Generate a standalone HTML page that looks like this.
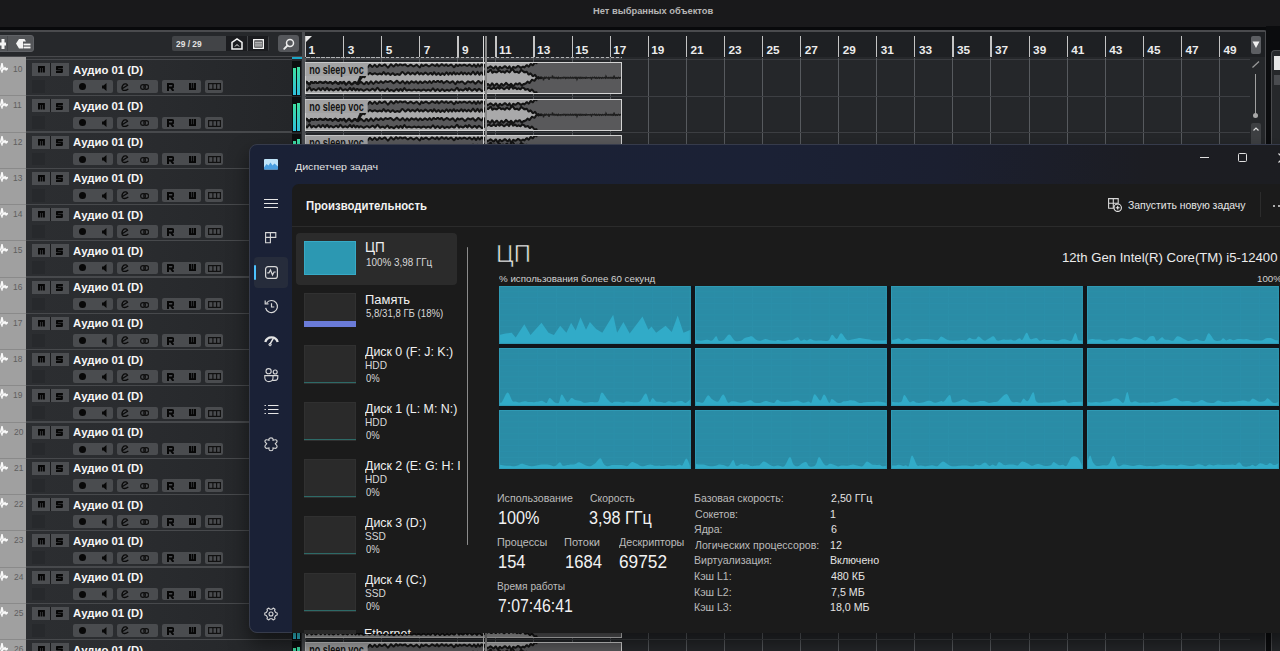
<!DOCTYPE html><html><head><meta charset="utf-8"><style>
*{margin:0;padding:0;box-sizing:border-box}
html,body{width:1280px;height:651px;overflow:hidden;background:#25272a;font-family:"Liberation Sans",sans-serif}
.a{position:absolute}
.t{position:absolute;line-height:1;white-space:nowrap;transform-origin:0 0}
</style></head><body>
<div class="a" style="left:0;top:0;width:1280px;height:26.6px;background:#19191b"></div>
<div class="t" style="left:593.20px;top:6.00px;font-size:9.84px;font-weight:bold;color:#b6b6b6;transform:scaleX(0.9492);">Нет выбранных объектов</div>
<div class="a" style="left:0;top:26.6px;width:1280px;height:3.6px;background:#08090b"></div>
<div class="a" style="left:0;top:30.2px;width:1266px;height:1.8px;background:#4a4b4e;border-radius:0 4px 0 0"></div>
<div class="a" style="left:0;top:32px;width:302px;height:23.5px;background:#26282b"></div>
<div class="a" style="left:0;top:55.5px;width:302px;height:1.2px;background:#48494c"></div>
<div class="a" style="left:-4px;top:35.1px;width:38px;height:16.6px;background:#545659;border-radius:3px;border:1px solid #606266"></div>
<div class="a" style="left:7px;top:36px;width:1px;height:15px;background:#46484b"></div>
<svg class="a" style="left:0;top:39px" width="7" height="10"><path d="M0 3.5 H6 V6.5 H0Z M1.5 0 H4.5 V10 H1.5Z" fill="#f4f4f4"/></svg>
<svg class="a" style="left:16px;top:38.5px" width="15" height="10"><path d="M0 4.5 L3 0 H8.5 L10 2.5 H7 V9.5 H3 Z" fill="#f4f4f4"/><rect x="7.5" y="4.6" width="7" height="1.8" fill="#f4f4f4"/><rect x="7.5" y="7.6" width="7" height="1.8" fill="#f4f4f4"/></svg>
<div class="a" style="left:172px;top:35.6px;width:96.5px;height:15.6px;background:#424447;border-radius:2px"></div>
<div class="t" style="left:175.80px;top:39.00px;font-size:9.56px;font-weight:bold;color:#e2e2e2;transform:scaleX(0.8793);">29 / 29</div>
<div class="a" style="left:226px;top:36px;width:21px;height:14.8px;background:#1b1c1f"></div>
<div class="a" style="left:248px;top:36px;width:20px;height:14.8px;background:#1b1c1f"></div>
<svg class="a" style="left:230.5px;top:37.5px" width="12" height="12"><path d="M1 11 V4.5 L6 1 L11 4.5 V11 Z" fill="none" stroke="#f4f4f4" stroke-width="1.5"/><path d="M4 8.5 L6 6.5 L8 8.5" fill="none" stroke="#f4f4f4" stroke-width="1"/></svg>
<svg class="a" style="left:252.5px;top:38.5px" width="11" height="10"><rect x="0.7" y="0.7" width="9.6" height="8.6" fill="none" stroke="#f4f4f4" stroke-width="1.4"/><rect x="2" y="2.6" width="7" height="1.1" fill="#f4f4f4"/><rect x="2" y="4.5" width="7" height="1.1" fill="#f4f4f4"/><rect x="2" y="6.4" width="7" height="1.1" fill="#f4f4f4"/></svg>
<div class="a" style="left:278px;top:35.2px;width:21px;height:16.5px;background:#55575b;border-radius:3px"></div>
<svg class="a" style="left:282.5px;top:37.5px" width="12" height="12"><circle cx="7" cy="5" r="3.5" fill="none" stroke="#ececec" stroke-width="1.5"/><path d="M4.5 7.5 L1.2 10.8" stroke="#ececec" stroke-width="1.8" stroke-linecap="round"/></svg>
<div class="a" style="left:304px;top:32px;width:946px;height:24.6px;background:#1e2023"></div>
<div class="a" style="left:302px;top:32px;width:2.6px;height:620px;background:#4b4d51"></div>
<svg class="a" style="left:305px;top:35.5px" width="8" height="7"><path d="M0 0 H7 L0 7 Z" fill="#e8e8e8"/></svg>
<div class="a" style="left:304.6px;top:56.6px;width:946px;height:2.6px;background:#26282b"></div>
<div class="a" style="left:304.6px;top:59.1px;width:946px;height:0.8px;background:#3a3c40"></div>
<div class="a" style="left:305.5px;top:56.8px;width:316.5px;height:2.4px;background:#3c3e41"></div>
<div class="a" style="left:306px;top:57px;width:316px;height:1.2px;background:repeating-linear-gradient(90deg,#b0b2b5 0 3.5px,transparent 3.5px 5px)"></div>
<div class="a" style="left:305.00px;top:58px;width:1px;height:594px;background:#575a5e"></div>
<div class="a" style="left:305.00px;top:35.5px;width:1.2px;height:21px;background:#c4c4c4"></div>
<div class="t" style="left:308.60px;top:45.00px;font-size:11.81px;font-weight:bold;color:#ececec;">1</div>
<div class="a" style="left:343.08px;top:58px;width:1px;height:594px;background:#575a5e"></div>
<div class="a" style="left:343.08px;top:35.5px;width:1.2px;height:21px;background:#c4c4c4"></div>
<div class="t" style="left:347.68px;top:45.00px;font-size:11.81px;font-weight:bold;color:#ececec;">3</div>
<div class="a" style="left:381.16px;top:58px;width:1px;height:594px;background:#575a5e"></div>
<div class="a" style="left:381.16px;top:35.5px;width:1.2px;height:21px;background:#c4c4c4"></div>
<div class="t" style="left:385.76px;top:45.00px;font-size:11.81px;font-weight:bold;color:#ececec;">5</div>
<div class="a" style="left:419.24px;top:58px;width:1px;height:594px;background:#575a5e"></div>
<div class="a" style="left:419.24px;top:35.5px;width:1.2px;height:21px;background:#c4c4c4"></div>
<div class="t" style="left:423.84px;top:45.00px;font-size:11.81px;font-weight:bold;color:#ececec;">7</div>
<div class="a" style="left:457.32px;top:58px;width:1px;height:594px;background:#575a5e"></div>
<div class="a" style="left:457.32px;top:35.5px;width:1.2px;height:21px;background:#c4c4c4"></div>
<div class="t" style="left:461.92px;top:45.00px;font-size:11.81px;font-weight:bold;color:#ececec;">9</div>
<div class="a" style="left:495.40px;top:58px;width:1px;height:594px;background:#575a5e"></div>
<div class="a" style="left:495.40px;top:35.5px;width:1.2px;height:21px;background:#c4c4c4"></div>
<div class="t" style="left:499.00px;top:45.00px;font-size:11.81px;font-weight:bold;color:#ececec;">11</div>
<div class="a" style="left:533.48px;top:58px;width:1px;height:594px;background:#575a5e"></div>
<div class="a" style="left:533.48px;top:35.5px;width:1.2px;height:21px;background:#c4c4c4"></div>
<div class="t" style="left:537.08px;top:45.00px;font-size:11.81px;font-weight:bold;color:#ececec;">13</div>
<div class="a" style="left:571.56px;top:58px;width:1px;height:594px;background:#575a5e"></div>
<div class="a" style="left:571.56px;top:35.5px;width:1.2px;height:21px;background:#c4c4c4"></div>
<div class="t" style="left:575.16px;top:45.00px;font-size:11.81px;font-weight:bold;color:#ececec;">15</div>
<div class="a" style="left:609.64px;top:58px;width:1px;height:594px;background:#575a5e"></div>
<div class="a" style="left:609.64px;top:35.5px;width:1.2px;height:21px;background:#c4c4c4"></div>
<div class="t" style="left:613.24px;top:45.00px;font-size:11.81px;font-weight:bold;color:#ececec;">17</div>
<div class="a" style="left:647.72px;top:58px;width:1px;height:594px;background:#575a5e"></div>
<div class="a" style="left:647.72px;top:35.5px;width:1.2px;height:21px;background:#c4c4c4"></div>
<div class="t" style="left:651.32px;top:45.00px;font-size:11.81px;font-weight:bold;color:#ececec;">19</div>
<div class="a" style="left:685.80px;top:58px;width:1px;height:594px;background:#575a5e"></div>
<div class="a" style="left:685.80px;top:35.5px;width:1.2px;height:21px;background:#c4c4c4"></div>
<div class="t" style="left:690.40px;top:45.00px;font-size:11.81px;font-weight:bold;color:#ececec;">21</div>
<div class="a" style="left:723.88px;top:58px;width:1px;height:594px;background:#575a5e"></div>
<div class="a" style="left:723.88px;top:35.5px;width:1.2px;height:21px;background:#c4c4c4"></div>
<div class="t" style="left:728.48px;top:45.00px;font-size:11.81px;font-weight:bold;color:#ececec;">23</div>
<div class="a" style="left:761.96px;top:58px;width:1px;height:594px;background:#575a5e"></div>
<div class="a" style="left:761.96px;top:35.5px;width:1.2px;height:21px;background:#c4c4c4"></div>
<div class="t" style="left:766.56px;top:45.00px;font-size:11.81px;font-weight:bold;color:#ececec;">25</div>
<div class="a" style="left:800.04px;top:58px;width:1px;height:594px;background:#575a5e"></div>
<div class="a" style="left:800.04px;top:35.5px;width:1.2px;height:21px;background:#c4c4c4"></div>
<div class="t" style="left:804.64px;top:45.00px;font-size:11.81px;font-weight:bold;color:#ececec;">27</div>
<div class="a" style="left:838.12px;top:58px;width:1px;height:594px;background:#575a5e"></div>
<div class="a" style="left:838.12px;top:35.5px;width:1.2px;height:21px;background:#c4c4c4"></div>
<div class="t" style="left:842.72px;top:45.00px;font-size:11.81px;font-weight:bold;color:#ececec;">29</div>
<div class="a" style="left:876.20px;top:58px;width:1px;height:594px;background:#575a5e"></div>
<div class="a" style="left:876.20px;top:35.5px;width:1.2px;height:21px;background:#c4c4c4"></div>
<div class="t" style="left:880.80px;top:45.00px;font-size:11.81px;font-weight:bold;color:#ececec;">31</div>
<div class="a" style="left:914.28px;top:58px;width:1px;height:594px;background:#575a5e"></div>
<div class="a" style="left:914.28px;top:35.5px;width:1.2px;height:21px;background:#c4c4c4"></div>
<div class="t" style="left:918.88px;top:45.00px;font-size:11.81px;font-weight:bold;color:#ececec;">33</div>
<div class="a" style="left:952.36px;top:58px;width:1px;height:594px;background:#575a5e"></div>
<div class="a" style="left:952.36px;top:35.5px;width:1.2px;height:21px;background:#c4c4c4"></div>
<div class="t" style="left:956.96px;top:45.00px;font-size:11.81px;font-weight:bold;color:#ececec;">35</div>
<div class="a" style="left:990.44px;top:58px;width:1px;height:594px;background:#575a5e"></div>
<div class="a" style="left:990.44px;top:35.5px;width:1.2px;height:21px;background:#c4c4c4"></div>
<div class="t" style="left:995.04px;top:45.00px;font-size:11.81px;font-weight:bold;color:#ececec;">37</div>
<div class="a" style="left:1028.52px;top:58px;width:1px;height:594px;background:#575a5e"></div>
<div class="a" style="left:1028.52px;top:35.5px;width:1.2px;height:21px;background:#c4c4c4"></div>
<div class="t" style="left:1033.12px;top:45.00px;font-size:11.81px;font-weight:bold;color:#ececec;">39</div>
<div class="a" style="left:1066.60px;top:58px;width:1px;height:594px;background:#575a5e"></div>
<div class="a" style="left:1066.60px;top:35.5px;width:1.2px;height:21px;background:#c4c4c4"></div>
<div class="t" style="left:1071.20px;top:45.00px;font-size:11.81px;font-weight:bold;color:#ececec;">41</div>
<div class="a" style="left:1104.68px;top:58px;width:1px;height:594px;background:#575a5e"></div>
<div class="a" style="left:1104.68px;top:35.5px;width:1.2px;height:21px;background:#c4c4c4"></div>
<div class="t" style="left:1109.28px;top:45.00px;font-size:11.81px;font-weight:bold;color:#ececec;">43</div>
<div class="a" style="left:1142.76px;top:58px;width:1px;height:594px;background:#575a5e"></div>
<div class="a" style="left:1142.76px;top:35.5px;width:1.2px;height:21px;background:#c4c4c4"></div>
<div class="t" style="left:1147.36px;top:45.00px;font-size:11.81px;font-weight:bold;color:#ececec;">45</div>
<div class="a" style="left:1180.84px;top:58px;width:1px;height:594px;background:#575a5e"></div>
<div class="a" style="left:1180.84px;top:35.5px;width:1.2px;height:21px;background:#c4c4c4"></div>
<div class="t" style="left:1185.44px;top:45.00px;font-size:11.81px;font-weight:bold;color:#ececec;">47</div>
<div class="a" style="left:1218.92px;top:58px;width:1px;height:594px;background:#575a5e"></div>
<div class="a" style="left:1218.92px;top:35.5px;width:1.2px;height:21px;background:#c4c4c4"></div>
<div class="t" style="left:1223.52px;top:45.00px;font-size:11.81px;font-weight:bold;color:#ececec;">49</div>
<svg width="0" height="0" style="position:absolute"><defs><g id="wv"><rect x="0" y="0" width="317" height="32" fill="#59595b"/><path d="M0,-1.0 L0.5,-1.0 L1,-1.0 L1.5,-1.0 L2,-1.0 L2.5,-1.0 L3,-1.0 L3.5,-1.0 L4,-1.0 L4.5,-1.0 L5,-1.0 L5.5,-1.0 L6,-1.0 L6.5,-1.0 L7,-1.0 L7.5,-1.0 L8,-1.0 L8.5,-1.0 L9,-1.0 L9.5,-1.0 L10,-1.0 L10.5,-1.0 L11,-1.0 L11.5,-1.0 L12,-1.0 L12.5,-1.0 L13,-1.0 L13.5,-1.0 L14,-1.0 L14.5,-1.0 L15,-1.0 L15.5,-1.0 L16,-1.0 L16.5,-1.0 L17,-1.0 L17.5,-1.0 L18,-1.0 L18.5,-1.0 L19,-1.0 L19.5,-1.0 L20,-1.0 L20.5,-1.0 L21,-1.0 L21.5,-1.0 L22,-1.0 L22.5,-1.0 L23,-1.0 L23.5,-1.0 L24,-1.0 L24.5,-1.0 L25,-1.0 L25.5,-1.0 L26,-1.0 L26.5,-1.0 L27,-1.0 L27.5,-1.0 L28,-1.0 L28.5,-1.0 L29,-1.0 L29.5,-1.0 L30,-1.0 L30.5,-1.0 L31,-1.0 L31.5,-1.0 L32,-1.0 L32.5,-1.0 L33,-1.0 L33.5,-1.0 L34,-1.0 L34.5,-1.0 L35,-1.0 L35.5,-1.0 L36,-1.0 L36.5,-1.0 L37,-1.0 L37.5,-1.0 L38,-1.0 L38.5,-1.0 L39,-1.0 L39.5,-1.0 L40,-1.0 L40.5,-1.0 L41,-1.0 L41.5,-1.0 L42,-1.0 L42.5,-1.0 L43,-1.0 L43.5,-1.0 L44,-1.0 L44.5,-1.0 L45,-1.0 L45.5,-1.0 L46,-1.0 L46.5,-1.0 L47,-1.0 L47.5,-1.0 L48,-1.0 L48.5,-1.0 L49,-1.0 L49.5,-1.0 L50,-1.0 L50.5,-1.0 L51,-1.0 L51.5,-1.0 L52,-1.0 L52.5,-1.0 L53,-1.0 L53.5,-1.0 L54,-1.0 L54.5,-1.0 L55,-1.0 L55.5,-1.0 L56,-1.0 L56.5,-1.0 L57,-1.0 L57.5,-1.0 L58,-1.0 L58.5,-1.0 L59,-1.0 L59.5,-1.0 L60,-1.0 L60.5,-1.0 L61,-1.0 L61.5,-1.0 L62,-1.0 L62.5,-1.0 L63,-1.0 L63.5,-1.0 L64,-1.0 L64.5,-1.0 L65,-1.0 L65.5,-1.0 L66,-1.0 L66.5,-1.0 L67,-1.0 L67.5,-1.0 L68,-1.0 L68.5,-1.0 L69,-1.0 L69.5,-1.0 L70,-1.0 L70.5,-1.0 L71,-1.0 L71.5,-1.0 L72,-1.0 L72.5,-1.0 L73,-1.0 L73.5,-1.0 L74,-1.0 L74.5,-1.0 L75,-1.0 L75.5,-1.0 L76,-1.0 L76.5,-1.0 L77,-1.0 L77.5,-1.0 L78,-1.0 L78.5,-1.0 L79,-1.0 L79.5,-1.0 L80,-1.0 L80.5,-1.0 L81,-1.0 L81.5,-1.0 L82,-1.0 L82.5,-1.0 L83,-1.0 L83.5,-1.0 L84,-1.0 L84.5,-1.0 L85,-1.0 L85.5,-1.0 L86,-1.0 L86.5,-1.0 L87,-1.0 L87.5,-1.0 L88,-1.0 L88.5,-1.0 L89,-1.0 L89.5,-1.0 L90,-1.0 L90.5,-1.0 L91,-1.0 L91.5,-1.0 L92,-1.0 L92.5,-1.0 L93,-1.0 L93.5,-1.0 L94,-1.0 L94.5,-1.0 L95,-1.0 L95.5,-1.0 L96,-1.0 L96.5,-1.0 L97,-1.0 L97.5,-1.0 L98,-1.0 L98.5,-1.0 L99,-1.0 L99.5,-1.0 L100,-1.0 L100.5,-1.0 L101,-1.0 L101.5,-1.0 L102,-1.0 L102.5,-1.0 L103,-1.0 L103.5,-1.0 L104,-1.0 L104.5,-1.0 L105,-1.0 L105.5,-1.0 L106,-1.0 L106.5,-1.0 L107,-1.0 L107.5,-1.0 L108,-1.0 L108.5,-1.0 L109,-1.0 L109.5,-1.0 L110,-1.0 L110.5,-1.0 L111,-1.0 L111.5,-1.0 L112,-1.0 L112.5,-1.0 L113,-1.0 L113.5,-1.0 L114,-1.0 L114.5,-1.0 L115,-1.0 L115.5,-1.0 L116,-1.0 L116.5,-1.0 L117,-1.0 L117.5,-1.0 L118,-1.0 L118.5,-1.0 L119,-1.0 L119.5,-1.0 L120,-1.0 L120.5,-1.0 L121,-1.0 L121.5,-1.0 L122,-1.0 L122.5,-1.0 L123,-1.0 L123.5,-1.0 L124,-1.0 L124.5,-1.0 L125,-1.0 L125.5,-1.0 L126,-1.0 L126.5,-1.0 L127,-1.0 L127.5,-1.0 L128,-1.0 L128.5,-1.0 L129,-1.0 L129.5,-1.0 L130,-1.0 L130.5,-1.0 L131,-1.0 L131.5,-1.0 L132,-1.0 L132.5,-1.0 L133,-1.0 L133.5,-1.0 L134,-1.0 L134.5,-1.0 L135,-1.0 L135.5,-1.0 L136,-1.0 L136.5,-1.0 L137,-1.0 L137.5,-1.0 L138,-1.0 L138.5,-1.0 L139,-1.0 L139.5,-1.0 L140,-1.0 L140.5,-1.0 L141,-1.0 L141.5,-1.0 L142,-1.0 L142.5,-1.0 L143,-1.0 L143.5,-1.0 L144,-1.0 L144.5,-1.0 L145,-1.0 L145.5,-1.0 L146,-1.0 L146.5,-1.0 L147,-1.0 L147.5,-1.0 L148,-1.0 L148.5,-1.0 L149,-1.0 L149.5,-1.0 L150,-1.0 L150.5,-1.0 L151,-1.0 L151.5,-1.0 L152,-1.0 L152.5,-1.0 L153,-1.0 L153.5,-1.0 L154,-1.0 L154.5,-1.0 L155,-1.0 L155.5,-1.0 L156,-1.0 L156.5,-1.0 L157,-1.0 L157.5,-1.0 L158,-1.0 L158.5,-1.0 L159,-1.0 L159.5,-1.0 L160,-1.0 L160.5,-1.0 L161,-1.0 L161.5,-1.0 L162,-1.0 L162.5,-1.0 L163,-1.0 L163.5,-1.0 L164,-1.0 L164.5,-1.0 L165,-1.0 L165.5,-1.0 L166,-1.0 L166.5,-1.0 L167,-1.0 L167.5,-1.0 L168,-1.0 L168.5,-1.0 L169,-1.0 L169.5,-1.0 L170,-1.0 L170.5,-1.0 L171,-1.0 L171.5,-1.0 L172,-1.0 L172.5,-1.0 L173,-1.0 L173.5,-1.0 L174,-1.0 L174.5,-1.0 L175,-1.0 L175.5,-1.0 L176,-1.0 L176.5,-1.0 L177,-1.0 L177.5,-1.0 L178,-1.0 L178.5,-1.0 L179,-1.0 L179.5,-1.0 L180,-1.0 L180.5,-1.0 L181,-1.0 L181.5,-1.0 L182,-1.0 L182.5,-1.0 L183,-1.0 L183.5,-1.0 L184,-1.0 L184.5,-1.0 L185,-1.0 L185.5,-1.0 L186,-1.0 L186.5,-1.0 L187,-1.0 L187.5,-1.0 L188,-1.0 L188.5,-1.0 L189,-1.0 L189.5,-1.0 L190,-1.0 L190.5,-1.0 L191,-1.0 L191.5,-1.0 L192,-1.0 L192.5,-1.0 L193,-1.0 L193.5,-1.0 L194,-1.0 L194.5,-1.0 L195,-1.0 L195.5,-1.0 L196,-1.0 L196.5,-1.0 L197,-1.0 L197.5,-1.0 L198,-1.0 L198.5,-1.0 L199,-1.0 L199.5,-1.0 L200,-1.0 L200.5,-1.0 L201,-1.0 L201.5,-1.0 L202,-1.0 L202.5,-1.0 L203,-1.0 L203.5,-1.0 L204,-1.0 L204.5,-1.0 L205,-1.0 L205.5,-1.0 L206,-1.0 L206.5,-1.0 L207,-1.0 L207.5,-1.0 L208,-1.0 L208.5,-1.0 L209,-1.0 L209.5,-1.0 L210,-1.0 L210.5,-1.0 L211,-1.0 L211.5,-1.0 L212,-1.0 L212.5,-1.0 L213,-1.0 L213.5,-1.0 L214,-1.0 L214.5,-1.0 L215,-1.0 L215.5,-1.0 L216,-1.0 L216.5,-1.0 L217,-1.0 L217.5,-1.0 L218,-1.0 L218.5,-1.0 L219,-1.0 L219.5,-1.0 L220,-1.0 L220.5,-1.0 L221,-1.0 L221.5,-1.0 L222,-1.0 L222.5,-1.0 L223,-1.0 L223.5,-1.0 L224,-1.0 L224.5,-1.0 L225,-1.0 L225.5,-1.0 L226,-1.0 L226.5,-1.0 L227,-1.0 L227.5,-1.0 L228,-1.0 L228.5,-1.0 L229,-1.0 L229.5,-1.0 L230,-1.0 L230.5,-1.0 L231,-1.0 L231.5,-1.0 L232,-1.0 L232.5,-1.0 L233,-1.0 L233.5,-1.0 L234,-1.0 L234.5,-1.0 L235,-1.0 L235.5,-1.0 L236,-1.0 L236.5,-1.0 L236.5,-2.0 L236,-2.0 L235.5,-2.0 L235,-2.0 L234.5,-2.0 L234,-2.0 L233.5,-2.0 L233,-2.0 L232.5,-2.0 L232,-2.0 L231.5,1.3 L231,1.0 L230.5,0.7 L230,0.3 L229.5,1.0 L229,1.7 L228.5,2.5 L228,3.2 L227.5,3.3 L227,2.8 L226.5,2.4 L226,1.9 L225.5,2.1 L225,2.8 L224.5,3.6 L224,4.3 L223.5,4.6 L223,4.1 L222.5,3.6 L222,3.1 L221.5,3.4 L221,3.8 L220.5,4.3 L220,4.7 L219.5,5.4 L219,5.1 L218.5,4.8 L218,4.5 L217.5,4.8 L217,5.2 L216.5,5.5 L216,5.9 L215.5,5.7 L215,5.3 L214.5,4.9 L214,4.4 L213.5,4.1 L213,3.9 L212.5,4.3 L212,4.7 L211.5,5.1 L211,5.5 L210.5,5.8 L210,5.8 L209.5,5.4 L209,5.1 L208.5,4.7 L208,5.1 L207.5,5.9 L207,6.8 L206.5,7.6 L206,7.3 L205.5,6.3 L205,5.4 L204.5,4.4 L204,5.0 L203.5,5.6 L203,6.2 L202.5,6.4 L202,5.9 L201.5,5.4 L201,4.9 L200.5,4.5 L200,4.2 L199.5,4.2 L199,4.7 L198.5,5.1 L198,5.5 L197.5,5.9 L197,6.3 L196.5,6.1 L196,5.6 L195.5,5.2 L195,4.7 L194.5,5.1 L194,5.9 L193.5,6.7 L193,7.4 L192.5,7.0 L192,6.2 L191.5,5.4 L191,4.6 L190.5,4.5 L190,5.1 L189.5,5.7 L189,6.3 L188.5,6.6 L188,6.2 L187.5,5.8 L187,5.4 L186.5,5.0 L186,4.6 L185.5,4.3 L185,4.7 L184.5,5.0 L184,5.3 L183.5,5.6 L183,5.9 L182.5,6.2 L182,5.8 L181.5,5.4 L181,4.9 L180.5,4.5 L180,4.9 L179.5,3.0 L179,3.6 L178.5,4.1 L178,3.5 L177.5,3.0 L177,2.5 L176.5,2.4 L176,3.1 L175.5,3.8 L175,4.5 L174.5,4.3 L174,3.7 L173.5,3.0 L173,2.3 L172.5,3.0 L172,3.7 L171.5,4.5 L171,5.0 L170.5,4.3 L170,3.6 L169.5,2.9 L169,2.5 L168.5,3.1 L168,3.6 L167.5,4.2 L167,4.4 L166.5,4.0 L166,3.6 L165.5,3.2 L165,2.8 L164.5,2.6 L164,2.9 L163.5,3.2 L163,3.5 L162.5,3.8 L162,3.9 L161.5,3.7 L161,3.4 L160.5,3.2 L160,2.9 L159.5,2.7 L159,2.8 L158.5,3.0 L158,3.2 L157.5,3.4 L157,3.6 L156.5,3.7 L156,3.4 L155.5,3.1 L155,2.8 L154.5,2.8 L154,3.2 L153.5,3.7 L153,4.1 L152.5,3.8 L152,3.4 L151.5,3.0 L151,2.6 L150.5,3.4 L150,4.1 L149.5,4.9 L149,5.2 L148.5,4.7 L148,4.2 L147.5,3.7 L147,3.3 L146.5,2.8 L146,2.5 L145.5,2.8 L145,3.1 L144.5,3.3 L144,3.6 L143.5,3.9 L143,4.1 L142.5,3.6 L142,3.1 L141.5,2.5 L141,2.5 L140.5,2.9 L140,3.4 L139.5,3.8 L139,3.6 L138.5,3.3 L138,3.0 L137.5,2.6 L137,2.3 L136.5,2.2 L136,2.7 L135.5,3.1 L135,3.5 L134.5,3.9 L134,4.4 L133.5,4.1 L133,3.4 L132.5,2.7 L132,2.2 L131.5,2.8 L131,3.3 L130.5,3.9 L130,4.0 L129.5,3.7 L129,3.4 L128.5,3.1 L128,2.8 L127.5,2.5 L127,2.4 L126.5,2.8 L126,3.2 L125.5,3.5 L125,3.9 L124.5,4.2 L124,4.5 L123.5,4.1 L123,3.8 L122.5,3.5 L122,3.1 L121.5,2.8 L121,2.5 L120.5,2.8 L120,3.1 L119.5,3.3 L119,3.6 L118.5,3.9 L118,4.0 L117.5,3.5 L117,3.1 L116.5,2.6 L116,3.4 L115.5,4.3 L115,5.2 L114.5,5.4 L114,4.9 L113.5,4.4 L113,3.9 L112.5,3.4 L112,2.9 L111.5,2.7 L111,3.0 L110.5,3.3 L110,3.7 L109.5,4.0 L109,4.3 L108.5,4.4 L108,4.1 L107.5,3.8 L107,3.4 L106.5,3.1 L106,2.7 L105.5,2.7 L105,3.0 L104.5,3.4 L104,3.7 L103.5,4.0 L103,4.3 L102.5,4.2 L102,3.8 L101.5,3.5 L101,3.1 L100.5,2.7 L100,2.4 L99.5,2.6 L99,2.8 L98.5,3.0 L98,3.2 L97.5,3.4 L97,3.3 L96.5,3.0 L96,2.7 L95.5,2.4 L95,2.4 L94.5,2.7 L94,3.1 L93.5,3.4 L93,3.7 L92.5,3.3 L92,2.9 L91.5,2.5 L91,2.1 L90.5,2.6 L90,3.2 L89.5,3.8 L89,4.5 L88.5,4.5 L88,4.0 L87.5,3.6 L87,3.1 L86.5,2.7 L86,2.3 L85.5,2.7 L85,3.3 L84.5,3.9 L84,4.5 L83.5,5.1 L83,5.7 L82.5,5.1 L82,4.6 L81.5,4.1 L81,3.5 L80.5,3.0 L80,2.5 L79.5,2.6 L79,2.9 L78.5,3.2 L78,3.5 L77.5,3.8 L77,4.0 L76.5,3.9 L76,3.6 L75.5,3.3 L75,2.9 L74.5,2.6 L74,3.0 L73.5,3.6 L73,4.2 L72.5,4.7 L72,5.0 L71.5,4.5 L71,4.0 L70.5,3.4 L70,2.9 L69.5,2.8 L69,3.4 L68.5,3.9 L68,4.4 L67.5,4.9 L67,4.8 L66.5,4.3 L66,3.8 L65.5,3.2 L65,2.7 L64.5,3.1 L64,3.7 L63.5,4.3 L63,4.9 L62.5,5.5 L62,5.0 L61.5,4.7 L61,4.9 L60.5,5.4 L60,6.2 L59.5,7.7 L59,9.1 L58.5,10.2 L58,11.2 L57.5,11.8 L57,12.1 L56.5,12.5 L56,13.0 L55.5,14.3 L55,15.6 L54.5,16.8 L54,18.0 L53.5,19.1 L53,20.4 L52.5,21.1 L52,21.6 L51.5,21.2 L51,20.8 L50.5,20.3 L50,19.9 L49.5,20.1 L49,20.5 L48.5,21.0 L48,21.5 L47.5,21.9 L47,22.4 L46.5,22.2 L46,21.7 L45.5,21.2 L45,20.8 L44.5,20.3 L44,19.8 L43.5,20.1 L43,20.6 L42.5,21.1 L42,21.6 L41.5,22.1 L41,22.6 L40.5,22.0 L40,21.3 L39.5,20.5 L39,19.8 L38.5,20.1 L38,20.5 L37.5,20.9 L37,21.4 L36.5,20.9 L36,20.5 L35.5,20.0 L35,20.0 L34.5,20.7 L34,21.4 L33.5,22.0 L33,21.7 L32.5,21.4 L32,21.0 L31.5,20.6 L31,20.2 L30.5,19.8 L30,20.0 L29.5,20.4 L29,20.7 L28.5,21.0 L28,21.3 L27.5,21.7 L27,21.3 L26.5,20.9 L26,20.4 L25.5,20.0 L25,19.9 L24.5,20.2 L24,20.6 L23.5,20.9 L23,21.2 L22.5,20.9 L22,20.6 L21.5,20.3 L21,20.0 L20.5,19.8 L20,20.0 L19.5,20.3 L19,20.5 L18.5,20.8 L18,21.0 L17.5,20.8 L17,20.6 L16.5,20.4 L16,20.2 L15.5,19.9 L15,19.8 L14.5,20.1 L14,20.3 L13.5,20.6 L13,20.9 L12.5,21.1 L12,21.1 L11.5,20.7 L11,20.3 L10.5,19.9 L10,20.0 L9.5,20.4 L9,20.7 L8.5,21.1 L8,21.0 L7.5,20.7 L7,20.3 L6.5,19.9 L6,20.2 L5.5,20.9 L5,21.6 L4.5,22.3 L4,22.4 L3.5,21.8 L3,21.3 L2.5,20.8 L2,20.3 L1.5,19.8 L1,20.2 L0.5,20.6 L0,21.1 Z" fill="#a9a9aa" stroke="#141414" stroke-width="2" stroke-linejoin="round"/><path d="M0,21.1 L0.5,20.6 L1,20.2 L1.5,19.8 L2,20.3 L2.5,20.8 L3,21.3 L3.5,21.8 L4,22.4 L4.5,22.3 L5,21.6 L5.5,20.9 L6,20.2 L6.5,19.9 L7,20.3 L7.5,20.7 L8,21.0 L8.5,21.1 L9,20.7 L9.5,20.4 L10,20.0 L10.5,19.9 L11,20.3 L11.5,20.7 L12,21.1 L12.5,21.1 L13,20.9 L13.5,20.6 L14,20.3 L14.5,20.1 L15,19.8 L15.5,19.9 L16,20.2 L16.5,20.4 L17,20.6 L17.5,20.8 L18,21.0 L18.5,20.8 L19,20.5 L19.5,20.3 L20,20.0 L20.5,19.8 L21,20.0 L21.5,20.3 L22,20.6 L22.5,20.9 L23,21.2 L23.5,20.9 L24,20.6 L24.5,20.2 L25,19.9 L25.5,20.0 L26,20.4 L26.5,20.9 L27,21.3 L27.5,21.7 L28,21.3 L28.5,21.0 L29,20.7 L29.5,20.4 L30,20.0 L30.5,19.8 L31,20.2 L31.5,20.6 L32,21.0 L32.5,21.4 L33,21.7 L33.5,22.0 L34,21.4 L34.5,20.7 L35,20.0 L35.5,20.0 L36,20.5 L36.5,20.9 L37,21.4 L37.5,20.9 L38,20.5 L38.5,20.1 L39,19.8 L39.5,20.5 L40,21.3 L40.5,22.0 L41,22.6 L41.5,22.1 L42,21.6 L42.5,21.1 L43,20.6 L43.5,20.1 L44,19.8 L44.5,20.3 L45,20.8 L45.5,21.2 L46,21.7 L46.5,22.2 L47,22.4 L47.5,21.9 L48,21.5 L48.5,21.0 L49,20.5 L49.5,20.1 L50,19.9 L50.5,20.3 L51,20.8 L51.5,21.2 L52,21.6 L52.5,21.6 L53,21.2 L53.5,20.3 L54,19.5 L54.5,18.8 L55,18.0 L55.5,17.2 L56,16.3 L56.5,15.9 L57,15.4 L57.5,14.8 L58,14.6 L58.5,14.8 L59,15.0 L59.5,15.2 L60,14.2 L60.5,13.2 L61,12.3 L61.5,11.8 L62,11.4 L62.5,11.9 L63,12.4 L63.5,12.1 L64,11.6 L64.5,11.1 L65,10.9 L65.5,11.2 L66,11.6 L66.5,11.9 L67,12.3 L67.5,12.4 L68,12.1 L68.5,11.8 L69,11.6 L69.5,11.3 L70,11.2 L70.5,11.5 L71,11.8 L71.5,12.1 L72,12.3 L72.5,12.5 L73,12.3 L73.5,12.1 L74,11.8 L74.5,11.6 L75,11.5 L75.5,11.8 L76,12.1 L76.5,12.4 L77,12.3 L77.5,11.6 L78,10.8 L78.5,10.1 L79,10.4 L79.5,11.0 L80,11.7 L80.5,12.4 L81,12.6 L81.5,12.2 L82,11.7 L82.5,11.3 L83,11.0 L83.5,11.4 L84,11.8 L84.5,12.2 L85,12.6 L85.5,12.9 L86,12.5 L86.5,12.1 L87,11.7 L87.5,11.3 L88,11.2 L88.5,11.7 L89,12.2 L89.5,12.7 L90,13.1 L90.5,12.9 L91,12.6 L91.5,12.3 L92,12.0 L92.5,12.1 L93,12.3 L93.5,12.5 L94,12.7 L94.5,12.9 L95,12.6 L95.5,12.0 L96,11.3 L96.5,10.7 L97,10.1 L97.5,9.9 L98,10.4 L98.5,10.9 L99,11.4 L99.5,11.9 L100,12.4 L100.5,12.5 L101,12.1 L101.5,11.7 L102,11.2 L102.5,10.8 L103,10.4 L103.5,10.4 L104,11.0 L104.5,11.6 L105,12.2 L105.5,12.4 L106,12.0 L106.5,11.5 L107,11.1 L107.5,10.8 L108,11.1 L108.5,11.4 L109,11.8 L109.5,12.1 L110,12.5 L110.5,12.0 L111,11.5 L111.5,11.0 L112,10.6 L112.5,10.1 L113,10.6 L113.5,11.3 L114,12.0 L114.5,12.4 L115,11.9 L115.5,11.5 L116,11.1 L116.5,11.3 L117,11.6 L117.5,12.0 L118,12.4 L118.5,12.3 L119,11.8 L119.5,11.3 L120,10.8 L120.5,10.6 L121,11.0 L121.5,11.4 L122,11.8 L122.5,12.2 L123,12.6 L123.5,12.3 L124,12.0 L124.5,11.6 L125,11.2 L125.5,10.9 L126,11.0 L126.5,11.6 L127,12.3 L127.5,12.7 L128,11.9 L128.5,11.1 L129,10.2 L129.5,10.6 L130,11.3 L130.5,12.0 L131,12.6 L131.5,12.8 L132,12.3 L132.5,11.9 L133,11.4 L133.5,11.0 L134,11.6 L134.5,12.2 L135,12.7 L135.5,13.0 L136,12.5 L136.5,12.0 L137,11.4 L137.5,11.3 L138,11.7 L138.5,12.1 L139,12.5 L139.5,12.9 L140,12.2 L140.5,11.6 L141,10.9 L141.5,10.3 L142,10.7 L142.5,11.5 L143,12.2 L143.5,12.6 L144,11.9 L144.5,11.3 L145,10.7 L145.5,10.9 L146,11.5 L146.5,12.1 L147,12.6 L147.5,11.9 L148,11.2 L148.5,10.5 L149,10.3 L149.5,11.1 L150,11.8 L150.5,12.5 L151,12.0 L151.5,11.6 L152,11.1 L152.5,11.2 L153,11.6 L153.5,11.9 L154,12.3 L154.5,12.2 L155,11.6 L155.5,11.0 L156,10.5 L156.5,10.3 L157,11.0 L157.5,11.8 L158,12.5 L158.5,11.9 L159,11.3 L159.5,10.7 L160,10.8 L160.5,11.4 L161,11.9 L161.5,12.4 L162,12.2 L162.5,11.7 L163,11.3 L163.5,10.9 L164,11.3 L164.5,11.7 L165,12.0 L165.5,12.4 L166,12.3 L166.5,11.6 L167,10.9 L167.5,10.3 L168,9.6 L168.5,10.2 L169,10.9 L169.5,11.6 L170,12.3 L170.5,12.5 L171,11.8 L171.5,11.2 L172,10.5 L172.5,9.8 L173,10.5 L173.5,11.4 L174,12.2 L174.5,12.8 L175,12.0 L175.5,11.2 L176,10.4 L176.5,10.4 L177,11.1 L177.5,11.8 L178,12.6 L178.5,13.0 L179,12.7 L179.5,12.4 L180,9.2 L180.5,8.9 L181,9.1 L181.5,9.3 L182,9.6 L182.5,9.9 L183,10.1 L183.5,9.8 L184,9.3 L184.5,8.7 L185,8.2 L185.5,7.8 L186,8.0 L186.5,9.0 L187,10.1 L187.5,10.8 L188,10.4 L188.5,10.0 L189,9.4 L189.5,9.6 L190,9.8 L190.5,10.0 L191,10.2 L191.5,10.4 L192,10.2 L192.5,9.8 L193,9.4 L193.5,9.0 L194,8.7 L194.5,8.6 L195,9.0 L195.5,9.5 L196,10.0 L196.5,10.2 L197,9.9 L197.5,9.7 L198,9.6 L198.5,9.7 L199,10.1 L199.5,10.5 L200,10.7 L200.5,10.1 L201,9.5 L201.5,8.7 L202,8.9 L202.5,9.2 L203,9.5 L203.5,9.8 L204,10.1 L204.5,10.4 L205,9.8 L205.5,9.2 L206,8.6 L206.5,8.1 L207,7.5 L207.5,7.0 L208,7.7 L208.5,8.4 L209,9.1 L209.5,9.9 L210,10.3 L210.5,10.1 L211,10.0 L211.5,9.9 L212,9.7 L212.5,10.0 L213,10.4 L213.5,10.7 L214,10.9 L214.5,10.4 L215,9.7 L215.5,8.9 L216,8.1 L216.5,8.0 L217,8.5 L217.5,8.9 L218,9.3 L218.5,9.8 L219,10.2 L219.5,9.7 L220,10.4 L220.5,10.2 L221,9.9 L221.5,9.7 L222,10.0 L222.5,10.8 L223,11.7 L223.5,12.5 L224,12.5 L224.5,12.1 L225,11.7 L225.5,11.4 L226,11.9 L226.5,12.5 L227,13.2 L227.5,13.9 L228,14.2 L228.5,13.9 L229,13.6 L229.5,13.2 L230,12.9 L230.5,13.4 L231,14.2 L231.5,15.0 L232,15.6 L232.5,15.5 L233,15.5 L233.5,15.1 L234,15.6 L234.5,15.7 L235,15.7 L235.5,15.6 L236,15.4 L236.5,15.5 L236.5,16.1 L236,16.2 L235.5,16.0 L235,15.9 L234.5,15.9 L234,16.0 L233.5,16.5 L233,16.1 L232.5,16.1 L232,16.0 L231.5,16.0 L231,16.6 L230.5,17.4 L230,18.2 L229.5,18.8 L229,18.6 L228.5,18.4 L228,18.2 L227.5,17.9 L227,17.7 L226.5,18.4 L226,19.0 L225.5,19.7 L225,20.4 L224.5,21.0 L224,20.8 L223.5,20.4 L223,19.9 L222.5,19.5 L222,20.2 L221.5,20.8 L221,21.4 L220.5,21.7 L220,21.5 L219.5,22.3 L219,21.9 L218.5,22.0 L218,22.6 L217.5,23.2 L217,23.8 L216.5,23.4 L216,22.7 L215.5,22.0 L215,21.3 L214.5,21.3 L214,21.5 L213.5,21.9 L213,22.4 L212.5,22.4 L212,22.2 L211.5,21.9 L211,21.6 L210.5,21.5 L210,22.2 L209.5,22.8 L209,23.5 L208.5,24.1 L208,23.9 L207.5,23.4 L207,22.8 L206.5,22.2 L206,21.7 L205.5,22.2 L205,22.6 L204.5,23.0 L204,23.5 L203.5,23.4 L203,22.8 L202.5,22.3 L202,21.7 L201.5,21.2 L201,20.9 L200.5,21.5 L200,22.0 L199.5,22.6 L199,23.1 L198.5,23.7 L198,23.2 L197.5,22.7 L197,22.2 L196.5,21.7 L196,22.2 L195.5,22.9 L195,23.5 L194.5,24.1 L194,23.9 L193.5,23.4 L193,22.9 L192.5,22.3 L192,21.8 L191.5,21.7 L191,22.2 L190.5,22.7 L190,23.1 L189.5,23.6 L189,23.9 L188.5,23.0 L188,22.3 L187.5,21.6 L187,21.3 L186.5,22.0 L186,22.8 L185.5,23.5 L185,23.9 L184.5,23.4 L184,22.9 L183.5,22.4 L183,21.9 L182.5,22.1 L182,22.8 L181.5,23.4 L181,24.0 L180.5,24.5 L180,23.7 L179.5,20.0 L179,19.3 L178.5,18.7 L178,19.3 L177.5,20.0 L177,20.7 L176.5,21.4 L176,21.1 L175.5,20.7 L175,20.3 L174.5,19.9 L174,19.4 L173.5,19.0 L173,19.2 L172.5,19.7 L172,20.2 L171.5,20.7 L171,21.2 L170.5,21.7 L170,21.6 L169.5,21.0 L169,20.4 L168.5,19.8 L168,19.2 L167.5,19.4 L167,19.7 L166.5,20.0 L166,20.3 L165.5,20.5 L165,20.3 L164.5,20.1 L164,19.8 L163.5,19.6 L163,19.3 L162.5,19.6 L162,20.1 L161.5,20.7 L161,21.2 L160.5,21.7 L160,22.0 L159.5,21.6 L159,21.1 L158.5,20.6 L158,20.1 L157.5,19.6 L157,19.4 L156.5,19.6 L156,19.8 L155.5,20.0 L155,20.3 L154.5,20.5 L154,20.5 L153.5,20.1 L153,19.7 L152.5,19.4 L152,19.9 L151.5,20.7 L151,21.6 L150.5,22.2 L150,21.7 L149.5,21.1 L149,20.6 L148.5,20.0 L148,19.5 L147.5,19.3 L147,19.6 L146.5,19.9 L146,20.2 L145.5,20.6 L145,20.9 L144.5,20.7 L144,20.4 L143.5,20.0 L143,19.7 L142.5,19.4 L142,19.1 L141.5,19.1 L141,19.5 L140.5,19.8 L140,20.2 L139.5,20.5 L139,20.9 L138.5,21.2 L138,20.5 L137.5,19.8 L137,19.1 L136.5,18.9 L136,19.3 L135.5,19.8 L135,20.2 L134.5,20.1 L134,19.7 L133.5,19.3 L133,18.9 L132.5,18.9 L132,19.3 L131.5,19.7 L131,20.1 L130.5,20.1 L130,19.8 L129.5,19.5 L129,19.1 L128.5,19.0 L128,19.5 L127.5,20.1 L127,20.6 L126.5,21.0 L126,20.5 L125.5,20.0 L125,19.5 L124.5,19.1 L124,19.6 L123.5,20.1 L123,20.6 L122.5,20.9 L122,20.6 L121.5,20.2 L121,19.9 L120.5,19.6 L120,19.2 L119.5,19.6 L119,20.0 L118.5,20.4 L118,20.8 L117.5,21.1 L117,21.0 L116.5,20.5 L116,20.0 L115.5,19.6 L115,19.5 L114.5,20.0 L114,20.5 L113.5,21.0 L113,21.4 L112.5,20.9 L112,20.3 L111.5,19.8 L111,19.3 L110.5,19.7 L110,20.0 L109.5,20.3 L109,20.7 L108.5,20.4 L108,20.1 L107.5,19.8 L107,19.5 L106.5,19.3 L106,19.8 L105.5,20.3 L105,20.8 L104.5,21.3 L104,21.5 L103.5,20.9 L103,20.2 L102.5,19.6 L102,19.4 L101.5,20.0 L101,20.7 L100.5,21.4 L100,21.5 L99.5,20.9 L99,20.4 L98.5,19.9 L98,19.3 L97.5,19.1 L97,19.6 L96.5,20.0 L96,20.5 L95.5,21.0 L95,21.3 L94.5,20.9 L94,20.5 L93.5,20.1 L93,19.7 L92.5,19.2 L92,18.8 L91.5,19.0 L91,19.4 L90.5,19.8 L90,20.2 L89.5,20.6 L89,21.0 L88.5,21.3 L88,20.9 L87.5,20.4 L87,20.0 L86.5,19.6 L86,19.1 L85.5,18.9 L85,19.1 L84.5,19.3 L84,19.6 L83.5,19.8 L83,20.0 L82.5,20.1 L82,19.9 L81.5,19.6 L81,19.3 L80.5,19.1 L80,19.4 L79.5,19.9 L79,20.3 L78.5,20.8 L78,20.9 L77.5,20.5 L77,20.1 L76.5,19.7 L76,19.3 L75.5,19.5 L75,20.0 L74.5,20.4 L74,20.8 L73.5,21.1 L73,20.7 L72.5,20.4 L72,20.0 L71.5,19.6 L71,19.3 L70.5,19.8 L70,20.3 L69.5,20.9 L69,21.4 L68.5,21.9 L68,21.5 L67.5,21.0 L67,20.4 L66.5,19.9 L66,19.4 L65.5,19.8 L65,20.4 L64.5,21.0 L64,21.5 L63.5,22.1 L63,21.5 L62.5,20.9 L62,20.2 L61.5,20.0 L61,20.2 L60.5,20.8 L60,21.5 L59.5,22.1 L59,22.3 L58.5,21.9 L58,21.5 L57.5,21.0 L57,20.6 L56.5,20.2 L56,19.8 L55.5,20.2 L55,20.6 L54.5,21.0 L54,21.4 L53.5,21.8 L53,22.3 L52.5,22.1 L52,21.6 L51.5,21.2 L51,20.8 L50.5,20.3 L50,19.9 L49.5,20.1 L49,20.5 L48.5,21.0 L48,21.5 L47.5,21.9 L47,22.4 L46.5,22.2 L46,21.7 L45.5,21.2 L45,20.8 L44.5,20.3 L44,19.8 L43.5,20.1 L43,20.6 L42.5,21.1 L42,21.6 L41.5,22.1 L41,22.6 L40.5,22.0 L40,21.3 L39.5,20.5 L39,19.8 L38.5,20.1 L38,20.5 L37.5,20.9 L37,21.4 L36.5,20.9 L36,20.5 L35.5,20.0 L35,20.0 L34.5,20.7 L34,21.4 L33.5,22.0 L33,21.7 L32.5,21.4 L32,21.0 L31.5,20.6 L31,20.2 L30.5,19.8 L30,20.0 L29.5,20.4 L29,20.7 L28.5,21.0 L28,21.3 L27.5,21.7 L27,21.3 L26.5,20.9 L26,20.4 L25.5,20.0 L25,19.9 L24.5,20.2 L24,20.6 L23.5,20.9 L23,21.2 L22.5,20.9 L22,20.6 L21.5,20.3 L21,20.0 L20.5,19.8 L20,20.0 L19.5,20.3 L19,20.5 L18.5,20.8 L18,21.0 L17.5,20.8 L17,20.6 L16.5,20.4 L16,20.2 L15.5,19.9 L15,19.8 L14.5,20.1 L14,20.3 L13.5,20.6 L13,20.9 L12.5,21.1 L12,21.1 L11.5,20.7 L11,20.3 L10.5,19.9 L10,20.0 L9.5,20.4 L9,20.7 L8.5,21.1 L8,21.0 L7.5,20.7 L7,20.3 L6.5,19.9 L6,20.2 L5.5,20.9 L5,21.6 L4.5,22.3 L4,22.4 L3.5,21.8 L3,21.3 L2.5,20.8 L2,20.3 L1.5,19.8 L1,20.2 L0.5,20.6 L0,21.1 Z" fill="#a9a9aa" stroke="#141414" stroke-width="2" stroke-linejoin="round"/><path d="M236.5,16.4 L237,15.6 L237.5,15.6 L238,16.0 L238.5,18.3 L239,15.6 L239.5,15.3 L240,16.4 L240.5,16.2 L241,15.2 L241.5,15.2 L242,16.0 L242.5,16.0 L243,15.7 L243.5,15.4 L244,17.8 L244.5,16.1 L245,15.5 L245.5,15.5 L246,15.9 L246.5,15.9 L247,15.3 L247.5,13.5 L248,16.2 L248.5,16.0 L249,15.2 L249.5,15.3 L250,16.4 L250.5,16.1 L251,15.3 L251.5,15.3 L252,16.3 L252.5,16.4 L253,15.5 L253.5,15.2 L254,16.4 L254.5,16.1 L255,15.6 L255.5,15.6 L256,16.4 L256.5,15.9 L257,15.4 L257.5,15.6 L258,16.3 L258.5,16.1 L259,15.2 L259.5,15.5 L260,16.0 L260.5,16.4 L261,15.3 L261.5,15.5 L262,16.3 L262.5,16.1 L263,15.3 L263.5,15.5 L264,16.3 L264.5,16.0 L265,15.6 L265.5,15.2 L266,16.2 L266.5,16.1 L267,15.6 L267.5,15.3 L268,16.3 L268.5,16.2 L269,15.3 L269.5,15.3 L270,16.1 L270.5,16.2 L271,15.2 L271.5,15.4 L272,17.4 L272.5,16.2 L273,15.3 L273.5,15.3 L274,16.2 L274.5,16.3 L275,15.3 L275.5,15.4 L276,16.4 L276.5,16.2 L277,15.3 L277.5,15.5 L278,16.3 L278.5,16.0 L279,15.4 L279.5,15.5 L280,16.3 L280.5,16.3 L281,15.3 L281.5,15.4 L282,16.2 L282.5,15.9 L283,15.6 L283.5,15.6 L284,16.0 L284.5,15.9 L285,15.5 L285.5,15.4 L286,16.4 L286.5,17.0 L287,15.5 L287.5,15.3 L288,15.9 L288.5,15.9 L289,15.5 L289.5,15.2 L290,16.1 L290.5,16.2 L291,15.6 L291.5,15.4 L292,16.4 L292.5,16.1 L293,15.7 L293.5,15.4 L294,16.0 L294.5,16.3 L295,15.5 L295.5,15.6 L296,16.1 L296.5,16.4 L297,15.6 L297.5,15.5 L298,16.1 L298.5,16.1 L299,15.5 L299.5,15.4 L300,16.0 L300.5,16.3 L301,14.2 L301.5,15.2 L302,16.0 L302.5,16.0 L303,15.6 L303.5,15.5 L304,16.2 L304.5,16.0 L305,15.5 L305.5,15.5 L306,16.2 L306.5,16.1 L307,15.4 L307.5,15.6 L308,16.4 L308.5,16.2 L309,13.5 L309.5,15.4 L310,16.2 L310.5,16.4 L311,15.5 L311.5,15.6 L312,16.3 L312.5,16.3 L313,15.5 L313.5,15.3 L314,16.0 L314.5,16.2 L315,15.5 L315.5,15.4 L316,15.9 L316.5,16.3 L317,15.4" fill="none" stroke="#1e1e1e" stroke-width="1.3"/><path d="M0,26.3 L0.5,26.9 L1,27.4 L1.5,27.9 L2,28.5 L2.5,27.9 L3,27.2 L3.5,26.6 L4,25.9 L4.5,25.3 L5,26.0 L5.5,26.8 L6,27.7 L6.5,28.5 L7,28.1 L7.5,27.7 L8,27.3 L8.5,26.9 L9,27.2 L9.5,27.5 L10,27.8 L10.5,28.1 L11,28.4 L11.5,28.1 L12,27.6 L12.5,27.1 L13,26.7 L13.5,26.2 L14,26.2 L14.5,26.9 L15,27.5 L15.5,28.2 L16,28.2 L16.5,27.5 L17,26.9 L17.5,26.2 L18,26.1 L18.5,26.7 L19,27.3 L19.5,27.9 L20,28.4 L20.5,27.8 L21,27.1 L21.5,26.4 L22,25.8 L22.5,26.3 L23,27.1 L23.5,27.9 L24,28.4 L24.5,28.0 L25,27.5 L25.5,27.1 L26,27.1 L26.5,27.4 L27,27.7 L27.5,28.0 L28,28.2 L28.5,28.5 L29,28.2 L29.5,27.9 L30,27.5 L30.5,27.2 L31,26.9 L31.5,26.8 L32,27.2 L32.5,27.7 L33,28.2 L33.5,28.3 L34,27.5 L34.5,26.8 L35,26.0 L35.5,25.8 L36,26.4 L36.5,27.0 L37,27.6 L37.5,28.2 L38,28.4 L38.5,28.1 L39,27.8 L39.5,27.6 L40,27.3 L40.5,27.3 L41,27.6 L41.5,27.8 L42,28.1 L42.5,28.4 L43,28.1 L43.5,27.6 L44,27.0 L44.5,26.5 L45,25.9 L45.5,26.6 L46,27.3 L46.5,28.0 L47,28.3 L47.5,27.6 L48,26.9 L48.5,26.2 L49,26.4 L49.5,27.1 L50,27.8 L50.5,28.5 L51,28.0 L51.5,27.5 L52,26.9 L52.5,27.0 L53,27.5 L53.5,28.0 L54,28.5 L54.5,28.0 L55,27.6 L55.5,27.2 L56,27.3 L56.5,27.6 L57,27.9 L57.5,28.2 L58,28.5 L58.5,28.8 L59,28.7 L59.5,28.4 L60,28.1 L60.5,27.8 L61,27.6 L61.5,27.3 L62,27.0 L62.5,27.3 L63,27.7 L63.5,28.0 L64,28.3 L64.5,28.6 L65,28.4 L65.5,28.1 L66,27.7 L66.5,27.4 L67,27.0 L67.5,26.7 L68,27.0 L68.5,27.4 L69,27.8 L69.5,28.3 L70,28.7 L70.5,28.1 L71,27.5 L71.5,26.8 L72,26.2 L72.5,25.7 L73,26.3 L73.5,26.9 L74,27.5 L74.5,28.1 L75,28.7 L75.5,28.5 L76,28.3 L76.5,28.1 L77,27.8 L77.5,27.6 L78,27.8 L78.5,28.0 L79,28.3 L79.5,28.6 L80,28.9 L80.5,28.4 L81,27.9 L81.5,27.4 L82,26.9 L82.5,26.5 L83,27.2 L83.5,27.9 L84,28.6 L84.5,28.9 L85,28.6 L85.5,28.3 L86,27.9 L86.5,28.0 L87,28.3 L87.5,28.5 L88,28.7 L88.5,29.0 L89,29.2 L89.5,28.8 L90,28.4 L90.5,28.0 L91,27.6 L91.5,27.1 L92,27.2 L92.5,27.7 L93,28.3 L93.5,28.9 L94,28.7 L94.5,28.1 L95,27.5 L95.5,27.0 L96,27.4 L96.5,27.9 L97,28.5 L97.5,28.9 L98,28.1 L98.5,27.3 L99,26.5 L99.5,26.1 L100,26.8 L100.5,27.4 L101,28.0 L101.5,28.6 L102,28.6 L102.5,28.3 L103,28.1 L103.5,27.8 L104,27.5 L104.5,27.8 L105,28.0 L105.5,28.2 L106,28.4 L106.5,28.6 L107,28.6 L107.5,28.4 L108,28.1 L108.5,27.9 L109,27.7 L109.5,27.5 L110,27.8 L110.5,28.1 L111,28.4 L111.5,28.6 L112,28.4 L112.5,28.1 L113,27.8 L113.5,27.6 L114,27.8 L114.5,28.1 L115,28.3 L115.5,28.5 L116,28.7 L116.5,28.5 L117,28.3 L117.5,28.0 L118,27.8 L118.5,27.6 L119,27.6 L119.5,27.9 L120,28.2 L120.5,28.5 L121,28.8 L121.5,28.5 L122,28.3 L122.5,28.0 L123,27.8 L123.5,27.7 L124,28.0 L124.5,28.3 L125,28.5 L125.5,28.8 L126,28.5 L126.5,27.9 L127,27.4 L127.5,26.8 L128,26.4 L128.5,27.0 L129,27.6 L129.5,28.2 L130,28.8 L130.5,28.9 L131,28.4 L131.5,28.0 L132,27.6 L132.5,27.1 L133,27.4 L133.5,27.9 L134,28.4 L134.5,28.9 L135,29.1 L135.5,28.6 L136,28.2 L136.5,27.7 L137,27.2 L137.5,27.3 L138,27.7 L138.5,28.1 L139,28.6 L139.5,29.0 L140,28.8 L140.5,28.6 L141,28.3 L141.5,28.0 L142,27.7 L142.5,28.0 L143,28.2 L143.5,28.5 L144,28.7 L144.5,28.7 L145,28.4 L145.5,28.0 L146,27.7 L146.5,27.3 L147,27.5 L147.5,27.8 L148,28.0 L148.5,28.3 L149,28.6 L149.5,28.6 L150,28.0 L150.5,27.4 L151,26.8 L151.5,26.2 L152,25.7 L152.5,26.1 L153,27.0 L153.5,28.0 L154,28.6 L154.5,28.2 L155,27.8 L155.5,27.4 L156,27.6 L156.5,27.8 L157,28.1 L157.5,28.3 L158,28.6 L158.5,28.4 L159,27.9 L159.5,27.5 L160,27.0 L160.5,26.5 L161,26.7 L161.5,27.4 L162,28.2 L162.5,28.5 L163,27.7 L163.5,26.9 L164,26.1 L164.5,26.5 L165,27.0 L165.5,27.5 L166,27.9 L166.5,28.4 L167,28.8 L167.5,28.4 L168,28.1 L168.5,27.8 L169,27.4 L169.5,27.1 L170,27.0 L170.5,27.5 L171,28.0 L171.5,28.5 L172,28.9 L172.5,28.3 L173,27.8 L173.5,27.2 L174,26.7 L174.5,27.1 L175,27.5 L175.5,27.9 L176,28.3 L176.5,28.8 L177,29.1 L177.5,28.8 L178,28.6 L178.5,28.3 L179,28.0 L179.5,27.8 L180,25.5 L180.5,25.9 L181,26.2 L181.5,26.6 L182,26.8 L182.5,26.4 L183,26.1 L183.5,25.7 L184,25.6 L184.5,25.9 L185,26.3 L185.5,26.6 L186,27.0 L186.5,27.1 L187,26.8 L187.5,26.4 L188,26.1 L188.5,25.8 L189,25.6 L189.5,26.0 L190,26.5 L190.5,26.9 L191,27.0 L191.5,26.4 L192,25.9 L192.5,25.3 L193,25.3 L193.5,25.8 L194,26.4 L194.5,26.8 L195,26.3 L195.5,25.7 L196,25.2 L196.5,25.4 L197,25.8 L197.5,26.1 L198,26.5 L198.5,26.8 L199,27.2 L199.5,27.0 L200,26.6 L200.5,26.3 L201,26.0 L201.5,25.5 L202,25.0 L202.5,25.5 L203,26.1 L203.5,26.6 L204,27.1 L204.5,26.3 L205,25.4 L205.5,24.5 L206,23.7 L206.5,24.4 L207,25.2 L207.5,25.9 L208,26.7 L208.5,26.6 L209,26.3 L209.5,25.9 L210,25.6 L210.5,25.8 L211,26.3 L211.5,26.9 L212,27.2 L212.5,26.9 L213,26.6 L213.5,26.3 L214,26.5 L214.5,26.8 L215,27.1 L215.5,27.2 L216,26.7 L216.5,26.2 L217,25.8 L217.5,25.6 L218,25.8 L218.5,26.0 L219,26.3 L219.5,26.5 L220,27.7 L220.5,27.7 L221,27.6 L221.5,27.4 L222,27.3 L222.5,27.1 L223,27.1 L223.5,27.7 L224,28.2 L224.5,28.8 L225,29.1 L225.5,28.7 L226,28.2 L226.5,27.7 L227,27.6 L227.5,28.1 L228,28.7 L228.5,29.3 L229,29.9 L229.5,30.4 L230,30.6 L230.5,30.5 L231,30.3 L231.5,30.2 L232,34.0 L232.5,34.0 L233,34.0 L233.5,34.0 L234,34.0 L234.5,34.0 L235,34.0 L235.5,34.0 L236,34.0 L236.5,34.0 L236.5,33.0 L236,33.0 L235.5,33.0 L235,33.0 L234.5,33.0 L234,33.0 L233.5,33.0 L233,33.0 L232.5,33.0 L232,33.0 L231.5,33.0 L231,33.0 L230.5,33.0 L230,33.0 L229.5,33.0 L229,33.0 L228.5,33.0 L228,33.0 L227.5,33.0 L227,33.0 L226.5,33.0 L226,33.0 L225.5,33.0 L225,33.0 L224.5,33.0 L224,33.0 L223.5,33.0 L223,33.0 L222.5,33.0 L222,33.0 L221.5,33.0 L221,33.0 L220.5,33.0 L220,33.0 L219.5,33.0 L219,33.0 L218.5,33.0 L218,33.0 L217.5,33.0 L217,33.0 L216.5,33.0 L216,33.0 L215.5,33.0 L215,33.0 L214.5,33.0 L214,33.0 L213.5,33.0 L213,33.0 L212.5,33.0 L212,33.0 L211.5,33.0 L211,33.0 L210.5,33.0 L210,33.0 L209.5,33.0 L209,33.0 L208.5,33.0 L208,33.0 L207.5,33.0 L207,33.0 L206.5,33.0 L206,33.0 L205.5,33.0 L205,33.0 L204.5,33.0 L204,33.0 L203.5,33.0 L203,33.0 L202.5,33.0 L202,33.0 L201.5,33.0 L201,33.0 L200.5,33.0 L200,33.0 L199.5,33.0 L199,33.0 L198.5,33.0 L198,33.0 L197.5,33.0 L197,33.0 L196.5,33.0 L196,33.0 L195.5,33.0 L195,33.0 L194.5,33.0 L194,33.0 L193.5,33.0 L193,33.0 L192.5,33.0 L192,33.0 L191.5,33.0 L191,33.0 L190.5,33.0 L190,33.0 L189.5,33.0 L189,33.0 L188.5,33.0 L188,33.0 L187.5,33.0 L187,33.0 L186.5,33.0 L186,33.0 L185.5,33.0 L185,33.0 L184.5,33.0 L184,33.0 L183.5,33.0 L183,33.0 L182.5,33.0 L182,33.0 L181.5,33.0 L181,33.0 L180.5,33.0 L180,33.0 L179.5,33.0 L179,33.0 L178.5,33.0 L178,33.0 L177.5,33.0 L177,33.0 L176.5,33.0 L176,33.0 L175.5,33.0 L175,33.0 L174.5,33.0 L174,33.0 L173.5,33.0 L173,33.0 L172.5,33.0 L172,33.0 L171.5,33.0 L171,33.0 L170.5,33.0 L170,33.0 L169.5,33.0 L169,33.0 L168.5,33.0 L168,33.0 L167.5,33.0 L167,33.0 L166.5,33.0 L166,33.0 L165.5,33.0 L165,33.0 L164.5,33.0 L164,33.0 L163.5,33.0 L163,33.0 L162.5,33.0 L162,33.0 L161.5,33.0 L161,33.0 L160.5,33.0 L160,33.0 L159.5,33.0 L159,33.0 L158.5,33.0 L158,33.0 L157.5,33.0 L157,33.0 L156.5,33.0 L156,33.0 L155.5,33.0 L155,33.0 L154.5,33.0 L154,33.0 L153.5,33.0 L153,33.0 L152.5,33.0 L152,33.0 L151.5,33.0 L151,33.0 L150.5,33.0 L150,33.0 L149.5,33.0 L149,33.0 L148.5,33.0 L148,33.0 L147.5,33.0 L147,33.0 L146.5,33.0 L146,33.0 L145.5,33.0 L145,33.0 L144.5,33.0 L144,33.0 L143.5,33.0 L143,33.0 L142.5,33.0 L142,33.0 L141.5,33.0 L141,33.0 L140.5,33.0 L140,33.0 L139.5,33.0 L139,33.0 L138.5,33.0 L138,33.0 L137.5,33.0 L137,33.0 L136.5,33.0 L136,33.0 L135.5,33.0 L135,33.0 L134.5,33.0 L134,33.0 L133.5,33.0 L133,33.0 L132.5,33.0 L132,33.0 L131.5,33.0 L131,33.0 L130.5,33.0 L130,33.0 L129.5,33.0 L129,33.0 L128.5,33.0 L128,33.0 L127.5,33.0 L127,33.0 L126.5,33.0 L126,33.0 L125.5,33.0 L125,33.0 L124.5,33.0 L124,33.0 L123.5,33.0 L123,33.0 L122.5,33.0 L122,33.0 L121.5,33.0 L121,33.0 L120.5,33.0 L120,33.0 L119.5,33.0 L119,33.0 L118.5,33.0 L118,33.0 L117.5,33.0 L117,33.0 L116.5,33.0 L116,33.0 L115.5,33.0 L115,33.0 L114.5,33.0 L114,33.0 L113.5,33.0 L113,33.0 L112.5,33.0 L112,33.0 L111.5,33.0 L111,33.0 L110.5,33.0 L110,33.0 L109.5,33.0 L109,33.0 L108.5,33.0 L108,33.0 L107.5,33.0 L107,33.0 L106.5,33.0 L106,33.0 L105.5,33.0 L105,33.0 L104.5,33.0 L104,33.0 L103.5,33.0 L103,33.0 L102.5,33.0 L102,33.0 L101.5,33.0 L101,33.0 L100.5,33.0 L100,33.0 L99.5,33.0 L99,33.0 L98.5,33.0 L98,33.0 L97.5,33.0 L97,33.0 L96.5,33.0 L96,33.0 L95.5,33.0 L95,33.0 L94.5,33.0 L94,33.0 L93.5,33.0 L93,33.0 L92.5,33.0 L92,33.0 L91.5,33.0 L91,33.0 L90.5,33.0 L90,33.0 L89.5,33.0 L89,33.0 L88.5,33.0 L88,33.0 L87.5,33.0 L87,33.0 L86.5,33.0 L86,33.0 L85.5,33.0 L85,33.0 L84.5,33.0 L84,33.0 L83.5,33.0 L83,33.0 L82.5,33.0 L82,33.0 L81.5,33.0 L81,33.0 L80.5,33.0 L80,33.0 L79.5,33.0 L79,33.0 L78.5,33.0 L78,33.0 L77.5,33.0 L77,33.0 L76.5,33.0 L76,33.0 L75.5,33.0 L75,33.0 L74.5,33.0 L74,33.0 L73.5,33.0 L73,33.0 L72.5,33.0 L72,33.0 L71.5,33.0 L71,33.0 L70.5,33.0 L70,33.0 L69.5,33.0 L69,33.0 L68.5,33.0 L68,33.0 L67.5,33.0 L67,33.0 L66.5,33.0 L66,33.0 L65.5,33.0 L65,33.0 L64.5,33.0 L64,33.0 L63.5,33.0 L63,33.0 L62.5,33.0 L62,33.0 L61.5,33.0 L61,33.0 L60.5,33.0 L60,33.0 L59.5,33.0 L59,33.0 L58.5,33.0 L58,33.0 L57.5,33.0 L57,33.0 L56.5,33.0 L56,33.0 L55.5,33.0 L55,33.0 L54.5,33.0 L54,33.0 L53.5,33.0 L53,33.0 L52.5,33.0 L52,33.0 L51.5,33.0 L51,33.0 L50.5,33.0 L50,33.0 L49.5,33.0 L49,33.0 L48.5,33.0 L48,33.0 L47.5,33.0 L47,33.0 L46.5,33.0 L46,33.0 L45.5,33.0 L45,33.0 L44.5,33.0 L44,33.0 L43.5,33.0 L43,33.0 L42.5,33.0 L42,33.0 L41.5,33.0 L41,33.0 L40.5,33.0 L40,33.0 L39.5,33.0 L39,33.0 L38.5,33.0 L38,33.0 L37.5,33.0 L37,33.0 L36.5,33.0 L36,33.0 L35.5,33.0 L35,33.0 L34.5,33.0 L34,33.0 L33.5,33.0 L33,33.0 L32.5,33.0 L32,33.0 L31.5,33.0 L31,33.0 L30.5,33.0 L30,33.0 L29.5,33.0 L29,33.0 L28.5,33.0 L28,33.0 L27.5,33.0 L27,33.0 L26.5,33.0 L26,33.0 L25.5,33.0 L25,33.0 L24.5,33.0 L24,33.0 L23.5,33.0 L23,33.0 L22.5,33.0 L22,33.0 L21.5,33.0 L21,33.0 L20.5,33.0 L20,33.0 L19.5,33.0 L19,33.0 L18.5,33.0 L18,33.0 L17.5,33.0 L17,33.0 L16.5,33.0 L16,33.0 L15.5,33.0 L15,33.0 L14.5,33.0 L14,33.0 L13.5,33.0 L13,33.0 L12.5,33.0 L12,33.0 L11.5,33.0 L11,33.0 L10.5,33.0 L10,33.0 L9.5,33.0 L9,33.0 L8.5,33.0 L8,33.0 L7.5,33.0 L7,33.0 L6.5,33.0 L6,33.0 L5.5,33.0 L5,33.0 L4.5,33.0 L4,33.0 L3.5,33.0 L3,33.0 L2.5,33.0 L2,33.0 L1.5,33.0 L1,33.0 L0.5,33.0 L0,33.0 Z" fill="#a9a9aa" stroke="#141414" stroke-width="2" stroke-linejoin="round"/><rect x="0.5" y="0.5" width="316" height="31" fill="none" stroke="#d4d4d4" stroke-width="1"/><rect x="0.5" y="0.8" width="62.2" height="13.2" fill="#a2a2a3"/><text x="4.3" y="11.9" font-family="Liberation Sans" font-weight="bold" font-size="12" fill="#141414" textLength="54.5" lengthAdjust="spacingAndGlyphs">no sleep voc</text></g></defs></svg>
<div class="a" style="left:0;top:56.7px;width:26px;height:600px;background:#a0a0a0"></div>
<div class="a" style="left:26px;top:56.7px;width:266px;height:600px;background:linear-gradient(90deg,#2c2e31 0%,#2a2c2f 40%,#242629 100%)"></div>
<div class="a" style="left:26px;top:59.2px;width:266px;height:1.2px;background:#46484c"></div>
<div class="a" style="left:291.5px;top:56.7px;width:10.5px;height:2.1px;background:#1aa6c8"></div>
<svg class="a" style="left:0;top:63.00px" width="8" height="10"><path d="M0 5.5 L1 5 L2 0.5 L3 5 L4 6.5 L5 4.5 L6 7 L7 5.5 L8 6" fill="none" stroke="#fafafa" stroke-width="1.5" stroke-linejoin="round"/><path d="M0.5 5.5 L2 9 L3 5.5" fill="none" stroke="#fafafa" stroke-width="1.2"/></svg>
<div class="t" style="left:13.00px;top:65.00px;font-size:8.43px;color:#5e5e5e;">10</div>
<div class="a" style="left:26px;top:95.20px;width:266px;height:1.2px;background:#47494c"></div>
<div class="a" style="left:32px;top:63.00px;width:36.7px;height:13px;background:#4c4e51"></div>
<div class="a" style="left:50.2px;top:63.00px;width:0.8px;height:13px;background:#1a1b1d"></div>
<svg class="a" style="left:38px;top:66.40px" width="7" height="7"><path d="M0 0 H6.9 V6.6 H4.6 V2 H4 V6.6 H2.9 V2 H2.3 V6.6 H0Z" fill="#060606"/></svg>
<svg class="a" style="left:56px;top:66.40px" width="7" height="7"><path d="M0.8 0 H6.9 V1.9 H2.1 V2.5 H6.1 C6.6 2.5 6.9 2.9 6.9 3.4 V6.1 C6.9 6.5 6.6 6.9 6.1 6.9 H0 V5 H4.8 V4.4 H0.8 C0.3 4.4 0 4 0 3.5 V0.8 C0 0.3 0.3 0 0.8 0Z" fill="#060606"/></svg>
<div class="t" style="left:73.30px;top:65.00px;font-size:11.81px;font-weight:bold;color:#f6f6f6;transform:scaleX(0.9611);">Аудио 01 (D)</div>
<div class="a" style="left:32px;top:80.20px;width:13px;height:12.8px;background:#27292c"></div>
<div class="a" style="left:73.3px;top:80.30px;width:39.6px;height:12.7px;background:#4a4c4f;border-radius:2px"></div>
<div class="a" style="left:116.8px;top:80.30px;width:41.7px;height:12.7px;background:#4a4c4f;border-radius:2px"></div>
<div class="a" style="left:162.3px;top:80.30px;width:38.7px;height:12.7px;background:#4a4c4f;border-radius:2px"></div>
<div class="a" style="left:205.4px;top:80.30px;width:17.3px;height:12.7px;background:#4a4c4f;border-radius:2px"></div>
<div class="a" style="left:79.2px;top:83.20px;width:7px;height:7px;border-radius:50%;background:#080808"></div>
<svg class="a" style="left:101.8px;top:82.80px" width="5" height="8"><path d="M0 2.5 H1.5 L4.5 0 V8 L1.5 5.5 H0Z" fill="#080808"/></svg>
<svg class="a" style="left:121.4px;top:82.60px" width="8" height="8.5"><path d="M1.9 5.2 L6.5 2.3 C6 0.9 4.2 0.5 3 1.1 C1.2 2.1 0.7 4.9 1.2 6.2 C1.9 7.9 4.6 8 6.9 6.3" fill="none" stroke="#0a0a0a" stroke-width="1.35" stroke-linecap="round"/></svg>
<svg class="a" style="left:140.4px;top:84.20px" width="9" height="6"><circle cx="3" cy="3" r="2.4" fill="none" stroke="#111" stroke-width="1.25"/><circle cx="6.2" cy="3" r="2.4" fill="none" stroke="#111" stroke-width="1.25"/></svg>
<svg class="a" style="left:167.3px;top:83.00px" width="7" height="8"><path d="M1 8 V1 H4.8 C6 1 6.4 1.8 6.4 2.7 C6.4 3.6 5.9 4.4 4.7 4.4 H1 M3.8 4.4 L6.4 8" fill="none" stroke="#060606" stroke-width="2"/></svg>
<svg class="a" style="left:188.8px;top:83.20px" width="7" height="7"><path d="M0 0 H2 V5.2 H2.6 V0 H4.4 V5.2 H5 V0 H7 V7 H0Z" fill="#060606"/></svg>
<svg class="a" style="left:208px;top:83.40px" width="13" height="7"><rect x="0.6" y="0.6" width="11.8" height="5.8" fill="none" stroke="#111" stroke-width="1.2"/><rect x="4.3" y="0" width="1.2" height="7" fill="#111"/><rect x="8" y="0" width="1.2" height="7" fill="#111"/></svg>
<div class="a" style="left:291.5px;top:61.00px;width:9.5px;height:35px;background:#0c0d0e"></div>
<div class="a" style="left:293px;top:68.00px;width:3.1px;height:27px;background:linear-gradient(#3ee0a2,#2fc0dc)"></div>
<div class="a" style="left:296.9px;top:66.90px;width:2.7px;height:28.1px;background:linear-gradient(#3ee0a2,#2fc0dc)"></div>
<div class="a" style="left:304.6px;top:95.50px;width:946px;height:1px;background:#3d3f43"></div>
<svg class="a" style="left:305px;top:62.40px" width="317" height="32"><use href="#wv"/></svg>
<div class="a" style="left:0;top:95.45px;width:26px;height:1px;background:#8a8a8a"></div>
<svg class="a" style="left:0;top:99.25px" width="8" height="10"><path d="M0 5.5 L1 5 L2 0.5 L3 5 L4 6.5 L5 4.5 L6 7 L7 5.5 L8 6" fill="none" stroke="#fafafa" stroke-width="1.5" stroke-linejoin="round"/><path d="M0.5 5.5 L2 9 L3 5.5" fill="none" stroke="#fafafa" stroke-width="1.2"/></svg>
<div class="t" style="left:13.00px;top:101.00px;font-size:8.43px;color:#5e5e5e;">11</div>
<div class="a" style="left:26px;top:131.45px;width:266px;height:1.2px;background:#47494c"></div>
<div class="a" style="left:32px;top:99.25px;width:36.7px;height:13px;background:#4c4e51"></div>
<div class="a" style="left:50.2px;top:99.25px;width:0.8px;height:13px;background:#1a1b1d"></div>
<svg class="a" style="left:38px;top:102.65px" width="7" height="7"><path d="M0 0 H6.9 V6.6 H4.6 V2 H4 V6.6 H2.9 V2 H2.3 V6.6 H0Z" fill="#060606"/></svg>
<svg class="a" style="left:56px;top:102.65px" width="7" height="7"><path d="M0.8 0 H6.9 V1.9 H2.1 V2.5 H6.1 C6.6 2.5 6.9 2.9 6.9 3.4 V6.1 C6.9 6.5 6.6 6.9 6.1 6.9 H0 V5 H4.8 V4.4 H0.8 C0.3 4.4 0 4 0 3.5 V0.8 C0 0.3 0.3 0 0.8 0Z" fill="#060606"/></svg>
<div class="t" style="left:73.30px;top:101.00px;font-size:11.81px;font-weight:bold;color:#f6f6f6;transform:scaleX(0.9611);">Аудио 01 (D)</div>
<div class="a" style="left:32px;top:116.45px;width:13px;height:12.8px;background:#27292c"></div>
<div class="a" style="left:73.3px;top:116.55px;width:39.6px;height:12.7px;background:#4a4c4f;border-radius:2px"></div>
<div class="a" style="left:116.8px;top:116.55px;width:41.7px;height:12.7px;background:#4a4c4f;border-radius:2px"></div>
<div class="a" style="left:162.3px;top:116.55px;width:38.7px;height:12.7px;background:#4a4c4f;border-radius:2px"></div>
<div class="a" style="left:205.4px;top:116.55px;width:17.3px;height:12.7px;background:#4a4c4f;border-radius:2px"></div>
<div class="a" style="left:79.2px;top:119.45px;width:7px;height:7px;border-radius:50%;background:#080808"></div>
<svg class="a" style="left:101.8px;top:119.05px" width="5" height="8"><path d="M0 2.5 H1.5 L4.5 0 V8 L1.5 5.5 H0Z" fill="#080808"/></svg>
<svg class="a" style="left:121.4px;top:118.85px" width="8" height="8.5"><path d="M1.9 5.2 L6.5 2.3 C6 0.9 4.2 0.5 3 1.1 C1.2 2.1 0.7 4.9 1.2 6.2 C1.9 7.9 4.6 8 6.9 6.3" fill="none" stroke="#0a0a0a" stroke-width="1.35" stroke-linecap="round"/></svg>
<svg class="a" style="left:140.4px;top:120.45px" width="9" height="6"><circle cx="3" cy="3" r="2.4" fill="none" stroke="#111" stroke-width="1.25"/><circle cx="6.2" cy="3" r="2.4" fill="none" stroke="#111" stroke-width="1.25"/></svg>
<svg class="a" style="left:167.3px;top:119.25px" width="7" height="8"><path d="M1 8 V1 H4.8 C6 1 6.4 1.8 6.4 2.7 C6.4 3.6 5.9 4.4 4.7 4.4 H1 M3.8 4.4 L6.4 8" fill="none" stroke="#060606" stroke-width="2"/></svg>
<svg class="a" style="left:188.8px;top:119.45px" width="7" height="7"><path d="M0 0 H2 V5.2 H2.6 V0 H4.4 V5.2 H5 V0 H7 V7 H0Z" fill="#060606"/></svg>
<svg class="a" style="left:208px;top:119.65px" width="13" height="7"><rect x="0.6" y="0.6" width="11.8" height="5.8" fill="none" stroke="#111" stroke-width="1.2"/><rect x="4.3" y="0" width="1.2" height="7" fill="#111"/><rect x="8" y="0" width="1.2" height="7" fill="#111"/></svg>
<div class="a" style="left:291.5px;top:97.25px;width:9.5px;height:35px;background:#0c0d0e"></div>
<div class="a" style="left:293px;top:104.25px;width:3.1px;height:27px;background:linear-gradient(#3ee0a2,#2fc0dc)"></div>
<div class="a" style="left:296.9px;top:103.15px;width:2.7px;height:28.1px;background:linear-gradient(#3ee0a2,#2fc0dc)"></div>
<div class="a" style="left:304.6px;top:131.75px;width:946px;height:1px;background:#3d3f43"></div>
<svg class="a" style="left:305px;top:98.65px" width="317" height="32"><use href="#wv"/></svg>
<div class="a" style="left:0;top:131.70px;width:26px;height:1px;background:#8a8a8a"></div>
<svg class="a" style="left:0;top:135.50px" width="8" height="10"><path d="M0 5.5 L1 5 L2 0.5 L3 5 L4 6.5 L5 4.5 L6 7 L7 5.5 L8 6" fill="none" stroke="#fafafa" stroke-width="1.5" stroke-linejoin="round"/><path d="M0.5 5.5 L2 9 L3 5.5" fill="none" stroke="#fafafa" stroke-width="1.2"/></svg>
<div class="t" style="left:13.00px;top:138.00px;font-size:8.43px;color:#5e5e5e;">12</div>
<div class="a" style="left:26px;top:167.70px;width:266px;height:1.2px;background:#47494c"></div>
<div class="a" style="left:32px;top:135.50px;width:36.7px;height:13px;background:#4c4e51"></div>
<div class="a" style="left:50.2px;top:135.50px;width:0.8px;height:13px;background:#1a1b1d"></div>
<svg class="a" style="left:38px;top:138.90px" width="7" height="7"><path d="M0 0 H6.9 V6.6 H4.6 V2 H4 V6.6 H2.9 V2 H2.3 V6.6 H0Z" fill="#060606"/></svg>
<svg class="a" style="left:56px;top:138.90px" width="7" height="7"><path d="M0.8 0 H6.9 V1.9 H2.1 V2.5 H6.1 C6.6 2.5 6.9 2.9 6.9 3.4 V6.1 C6.9 6.5 6.6 6.9 6.1 6.9 H0 V5 H4.8 V4.4 H0.8 C0.3 4.4 0 4 0 3.5 V0.8 C0 0.3 0.3 0 0.8 0Z" fill="#060606"/></svg>
<div class="t" style="left:73.30px;top:137.00px;font-size:11.81px;font-weight:bold;color:#f6f6f6;transform:scaleX(0.9611);">Аудио 01 (D)</div>
<div class="a" style="left:32px;top:152.70px;width:13px;height:12.8px;background:#27292c"></div>
<div class="a" style="left:73.3px;top:152.80px;width:39.6px;height:12.7px;background:#4a4c4f;border-radius:2px"></div>
<div class="a" style="left:116.8px;top:152.80px;width:41.7px;height:12.7px;background:#4a4c4f;border-radius:2px"></div>
<div class="a" style="left:162.3px;top:152.80px;width:38.7px;height:12.7px;background:#4a4c4f;border-radius:2px"></div>
<div class="a" style="left:205.4px;top:152.80px;width:17.3px;height:12.7px;background:#4a4c4f;border-radius:2px"></div>
<div class="a" style="left:79.2px;top:155.70px;width:7px;height:7px;border-radius:50%;background:#080808"></div>
<svg class="a" style="left:101.8px;top:155.30px" width="5" height="8"><path d="M0 2.5 H1.5 L4.5 0 V8 L1.5 5.5 H0Z" fill="#080808"/></svg>
<svg class="a" style="left:121.4px;top:155.10px" width="8" height="8.5"><path d="M1.9 5.2 L6.5 2.3 C6 0.9 4.2 0.5 3 1.1 C1.2 2.1 0.7 4.9 1.2 6.2 C1.9 7.9 4.6 8 6.9 6.3" fill="none" stroke="#0a0a0a" stroke-width="1.35" stroke-linecap="round"/></svg>
<svg class="a" style="left:140.4px;top:156.70px" width="9" height="6"><circle cx="3" cy="3" r="2.4" fill="none" stroke="#111" stroke-width="1.25"/><circle cx="6.2" cy="3" r="2.4" fill="none" stroke="#111" stroke-width="1.25"/></svg>
<svg class="a" style="left:167.3px;top:155.50px" width="7" height="8"><path d="M1 8 V1 H4.8 C6 1 6.4 1.8 6.4 2.7 C6.4 3.6 5.9 4.4 4.7 4.4 H1 M3.8 4.4 L6.4 8" fill="none" stroke="#060606" stroke-width="2"/></svg>
<svg class="a" style="left:188.8px;top:155.70px" width="7" height="7"><path d="M0 0 H2 V5.2 H2.6 V0 H4.4 V5.2 H5 V0 H7 V7 H0Z" fill="#060606"/></svg>
<svg class="a" style="left:208px;top:155.90px" width="13" height="7"><rect x="0.6" y="0.6" width="11.8" height="5.8" fill="none" stroke="#111" stroke-width="1.2"/><rect x="4.3" y="0" width="1.2" height="7" fill="#111"/><rect x="8" y="0" width="1.2" height="7" fill="#111"/></svg>
<div class="a" style="left:291.5px;top:133.50px;width:9.5px;height:35px;background:#0c0d0e"></div>
<div class="a" style="left:293px;top:140.50px;width:3.1px;height:27px;background:linear-gradient(#3ee0a2,#2fc0dc)"></div>
<div class="a" style="left:296.9px;top:139.40px;width:2.7px;height:28.1px;background:linear-gradient(#3ee0a2,#2fc0dc)"></div>
<div class="a" style="left:304.6px;top:168.00px;width:946px;height:1px;background:#3d3f43"></div>
<svg class="a" style="left:305px;top:134.90px" width="317" height="32"><use href="#wv"/></svg>
<div class="a" style="left:0;top:167.95px;width:26px;height:1px;background:#8a8a8a"></div>
<svg class="a" style="left:0;top:171.75px" width="8" height="10"><path d="M0 5.5 L1 5 L2 0.5 L3 5 L4 6.5 L5 4.5 L6 7 L7 5.5 L8 6" fill="none" stroke="#fafafa" stroke-width="1.5" stroke-linejoin="round"/><path d="M0.5 5.5 L2 9 L3 5.5" fill="none" stroke="#fafafa" stroke-width="1.2"/></svg>
<div class="t" style="left:13.00px;top:174.00px;font-size:8.43px;color:#5e5e5e;">13</div>
<div class="a" style="left:26px;top:203.95px;width:266px;height:1.2px;background:#47494c"></div>
<div class="a" style="left:32px;top:171.75px;width:36.7px;height:13px;background:#4c4e51"></div>
<div class="a" style="left:50.2px;top:171.75px;width:0.8px;height:13px;background:#1a1b1d"></div>
<svg class="a" style="left:38px;top:175.15px" width="7" height="7"><path d="M0 0 H6.9 V6.6 H4.6 V2 H4 V6.6 H2.9 V2 H2.3 V6.6 H0Z" fill="#060606"/></svg>
<svg class="a" style="left:56px;top:175.15px" width="7" height="7"><path d="M0.8 0 H6.9 V1.9 H2.1 V2.5 H6.1 C6.6 2.5 6.9 2.9 6.9 3.4 V6.1 C6.9 6.5 6.6 6.9 6.1 6.9 H0 V5 H4.8 V4.4 H0.8 C0.3 4.4 0 4 0 3.5 V0.8 C0 0.3 0.3 0 0.8 0Z" fill="#060606"/></svg>
<div class="t" style="left:73.30px;top:173.00px;font-size:11.81px;font-weight:bold;color:#f6f6f6;transform:scaleX(0.9611);">Аудио 01 (D)</div>
<div class="a" style="left:32px;top:188.95px;width:13px;height:12.8px;background:#27292c"></div>
<div class="a" style="left:73.3px;top:189.05px;width:39.6px;height:12.7px;background:#4a4c4f;border-radius:2px"></div>
<div class="a" style="left:116.8px;top:189.05px;width:41.7px;height:12.7px;background:#4a4c4f;border-radius:2px"></div>
<div class="a" style="left:162.3px;top:189.05px;width:38.7px;height:12.7px;background:#4a4c4f;border-radius:2px"></div>
<div class="a" style="left:205.4px;top:189.05px;width:17.3px;height:12.7px;background:#4a4c4f;border-radius:2px"></div>
<div class="a" style="left:79.2px;top:191.95px;width:7px;height:7px;border-radius:50%;background:#080808"></div>
<svg class="a" style="left:101.8px;top:191.55px" width="5" height="8"><path d="M0 2.5 H1.5 L4.5 0 V8 L1.5 5.5 H0Z" fill="#080808"/></svg>
<svg class="a" style="left:121.4px;top:191.35px" width="8" height="8.5"><path d="M1.9 5.2 L6.5 2.3 C6 0.9 4.2 0.5 3 1.1 C1.2 2.1 0.7 4.9 1.2 6.2 C1.9 7.9 4.6 8 6.9 6.3" fill="none" stroke="#0a0a0a" stroke-width="1.35" stroke-linecap="round"/></svg>
<svg class="a" style="left:140.4px;top:192.95px" width="9" height="6"><circle cx="3" cy="3" r="2.4" fill="none" stroke="#111" stroke-width="1.25"/><circle cx="6.2" cy="3" r="2.4" fill="none" stroke="#111" stroke-width="1.25"/></svg>
<svg class="a" style="left:167.3px;top:191.75px" width="7" height="8"><path d="M1 8 V1 H4.8 C6 1 6.4 1.8 6.4 2.7 C6.4 3.6 5.9 4.4 4.7 4.4 H1 M3.8 4.4 L6.4 8" fill="none" stroke="#060606" stroke-width="2"/></svg>
<svg class="a" style="left:188.8px;top:191.95px" width="7" height="7"><path d="M0 0 H2 V5.2 H2.6 V0 H4.4 V5.2 H5 V0 H7 V7 H0Z" fill="#060606"/></svg>
<svg class="a" style="left:208px;top:192.15px" width="13" height="7"><rect x="0.6" y="0.6" width="11.8" height="5.8" fill="none" stroke="#111" stroke-width="1.2"/><rect x="4.3" y="0" width="1.2" height="7" fill="#111"/><rect x="8" y="0" width="1.2" height="7" fill="#111"/></svg>
<div class="a" style="left:291.5px;top:169.75px;width:9.5px;height:35px;background:#0c0d0e"></div>
<div class="a" style="left:293px;top:176.75px;width:3.1px;height:27px;background:linear-gradient(#3ee0a2,#2fc0dc)"></div>
<div class="a" style="left:296.9px;top:175.65px;width:2.7px;height:28.1px;background:linear-gradient(#3ee0a2,#2fc0dc)"></div>
<div class="a" style="left:304.6px;top:204.25px;width:946px;height:1px;background:#3d3f43"></div>
<svg class="a" style="left:305px;top:171.15px" width="317" height="32"><use href="#wv"/></svg>
<div class="a" style="left:0;top:204.20px;width:26px;height:1px;background:#8a8a8a"></div>
<svg class="a" style="left:0;top:208.00px" width="8" height="10"><path d="M0 5.5 L1 5 L2 0.5 L3 5 L4 6.5 L5 4.5 L6 7 L7 5.5 L8 6" fill="none" stroke="#fafafa" stroke-width="1.5" stroke-linejoin="round"/><path d="M0.5 5.5 L2 9 L3 5.5" fill="none" stroke="#fafafa" stroke-width="1.2"/></svg>
<div class="t" style="left:13.00px;top:210.00px;font-size:8.43px;color:#5e5e5e;">14</div>
<div class="a" style="left:26px;top:240.20px;width:266px;height:1.2px;background:#47494c"></div>
<div class="a" style="left:32px;top:208.00px;width:36.7px;height:13px;background:#4c4e51"></div>
<div class="a" style="left:50.2px;top:208.00px;width:0.8px;height:13px;background:#1a1b1d"></div>
<svg class="a" style="left:38px;top:211.40px" width="7" height="7"><path d="M0 0 H6.9 V6.6 H4.6 V2 H4 V6.6 H2.9 V2 H2.3 V6.6 H0Z" fill="#060606"/></svg>
<svg class="a" style="left:56px;top:211.40px" width="7" height="7"><path d="M0.8 0 H6.9 V1.9 H2.1 V2.5 H6.1 C6.6 2.5 6.9 2.9 6.9 3.4 V6.1 C6.9 6.5 6.6 6.9 6.1 6.9 H0 V5 H4.8 V4.4 H0.8 C0.3 4.4 0 4 0 3.5 V0.8 C0 0.3 0.3 0 0.8 0Z" fill="#060606"/></svg>
<div class="t" style="left:73.30px;top:210.00px;font-size:11.81px;font-weight:bold;color:#f6f6f6;transform:scaleX(0.9611);">Аудио 01 (D)</div>
<div class="a" style="left:32px;top:225.20px;width:13px;height:12.8px;background:#27292c"></div>
<div class="a" style="left:73.3px;top:225.30px;width:39.6px;height:12.7px;background:#4a4c4f;border-radius:2px"></div>
<div class="a" style="left:116.8px;top:225.30px;width:41.7px;height:12.7px;background:#4a4c4f;border-radius:2px"></div>
<div class="a" style="left:162.3px;top:225.30px;width:38.7px;height:12.7px;background:#4a4c4f;border-radius:2px"></div>
<div class="a" style="left:205.4px;top:225.30px;width:17.3px;height:12.7px;background:#4a4c4f;border-radius:2px"></div>
<div class="a" style="left:79.2px;top:228.20px;width:7px;height:7px;border-radius:50%;background:#080808"></div>
<svg class="a" style="left:101.8px;top:227.80px" width="5" height="8"><path d="M0 2.5 H1.5 L4.5 0 V8 L1.5 5.5 H0Z" fill="#080808"/></svg>
<svg class="a" style="left:121.4px;top:227.60px" width="8" height="8.5"><path d="M1.9 5.2 L6.5 2.3 C6 0.9 4.2 0.5 3 1.1 C1.2 2.1 0.7 4.9 1.2 6.2 C1.9 7.9 4.6 8 6.9 6.3" fill="none" stroke="#0a0a0a" stroke-width="1.35" stroke-linecap="round"/></svg>
<svg class="a" style="left:140.4px;top:229.20px" width="9" height="6"><circle cx="3" cy="3" r="2.4" fill="none" stroke="#111" stroke-width="1.25"/><circle cx="6.2" cy="3" r="2.4" fill="none" stroke="#111" stroke-width="1.25"/></svg>
<svg class="a" style="left:167.3px;top:228.00px" width="7" height="8"><path d="M1 8 V1 H4.8 C6 1 6.4 1.8 6.4 2.7 C6.4 3.6 5.9 4.4 4.7 4.4 H1 M3.8 4.4 L6.4 8" fill="none" stroke="#060606" stroke-width="2"/></svg>
<svg class="a" style="left:188.8px;top:228.20px" width="7" height="7"><path d="M0 0 H2 V5.2 H2.6 V0 H4.4 V5.2 H5 V0 H7 V7 H0Z" fill="#060606"/></svg>
<svg class="a" style="left:208px;top:228.40px" width="13" height="7"><rect x="0.6" y="0.6" width="11.8" height="5.8" fill="none" stroke="#111" stroke-width="1.2"/><rect x="4.3" y="0" width="1.2" height="7" fill="#111"/><rect x="8" y="0" width="1.2" height="7" fill="#111"/></svg>
<div class="a" style="left:291.5px;top:206.00px;width:9.5px;height:35px;background:#0c0d0e"></div>
<div class="a" style="left:293px;top:213.00px;width:3.1px;height:27px;background:linear-gradient(#3ee0a2,#2fc0dc)"></div>
<div class="a" style="left:296.9px;top:211.90px;width:2.7px;height:28.1px;background:linear-gradient(#3ee0a2,#2fc0dc)"></div>
<div class="a" style="left:304.6px;top:240.50px;width:946px;height:1px;background:#3d3f43"></div>
<svg class="a" style="left:305px;top:207.40px" width="317" height="32"><use href="#wv"/></svg>
<div class="a" style="left:0;top:240.45px;width:26px;height:1px;background:#8a8a8a"></div>
<svg class="a" style="left:0;top:244.25px" width="8" height="10"><path d="M0 5.5 L1 5 L2 0.5 L3 5 L4 6.5 L5 4.5 L6 7 L7 5.5 L8 6" fill="none" stroke="#fafafa" stroke-width="1.5" stroke-linejoin="round"/><path d="M0.5 5.5 L2 9 L3 5.5" fill="none" stroke="#fafafa" stroke-width="1.2"/></svg>
<div class="t" style="left:13.00px;top:246.00px;font-size:8.43px;color:#5e5e5e;">15</div>
<div class="a" style="left:26px;top:276.45px;width:266px;height:1.2px;background:#47494c"></div>
<div class="a" style="left:32px;top:244.25px;width:36.7px;height:13px;background:#4c4e51"></div>
<div class="a" style="left:50.2px;top:244.25px;width:0.8px;height:13px;background:#1a1b1d"></div>
<svg class="a" style="left:38px;top:247.65px" width="7" height="7"><path d="M0 0 H6.9 V6.6 H4.6 V2 H4 V6.6 H2.9 V2 H2.3 V6.6 H0Z" fill="#060606"/></svg>
<svg class="a" style="left:56px;top:247.65px" width="7" height="7"><path d="M0.8 0 H6.9 V1.9 H2.1 V2.5 H6.1 C6.6 2.5 6.9 2.9 6.9 3.4 V6.1 C6.9 6.5 6.6 6.9 6.1 6.9 H0 V5 H4.8 V4.4 H0.8 C0.3 4.4 0 4 0 3.5 V0.8 C0 0.3 0.3 0 0.8 0Z" fill="#060606"/></svg>
<div class="t" style="left:73.30px;top:246.00px;font-size:11.81px;font-weight:bold;color:#f6f6f6;transform:scaleX(0.9611);">Аудио 01 (D)</div>
<div class="a" style="left:32px;top:261.45px;width:13px;height:12.8px;background:#27292c"></div>
<div class="a" style="left:73.3px;top:261.55px;width:39.6px;height:12.7px;background:#4a4c4f;border-radius:2px"></div>
<div class="a" style="left:116.8px;top:261.55px;width:41.7px;height:12.7px;background:#4a4c4f;border-radius:2px"></div>
<div class="a" style="left:162.3px;top:261.55px;width:38.7px;height:12.7px;background:#4a4c4f;border-radius:2px"></div>
<div class="a" style="left:205.4px;top:261.55px;width:17.3px;height:12.7px;background:#4a4c4f;border-radius:2px"></div>
<div class="a" style="left:79.2px;top:264.45px;width:7px;height:7px;border-radius:50%;background:#080808"></div>
<svg class="a" style="left:101.8px;top:264.05px" width="5" height="8"><path d="M0 2.5 H1.5 L4.5 0 V8 L1.5 5.5 H0Z" fill="#080808"/></svg>
<svg class="a" style="left:121.4px;top:263.85px" width="8" height="8.5"><path d="M1.9 5.2 L6.5 2.3 C6 0.9 4.2 0.5 3 1.1 C1.2 2.1 0.7 4.9 1.2 6.2 C1.9 7.9 4.6 8 6.9 6.3" fill="none" stroke="#0a0a0a" stroke-width="1.35" stroke-linecap="round"/></svg>
<svg class="a" style="left:140.4px;top:265.45px" width="9" height="6"><circle cx="3" cy="3" r="2.4" fill="none" stroke="#111" stroke-width="1.25"/><circle cx="6.2" cy="3" r="2.4" fill="none" stroke="#111" stroke-width="1.25"/></svg>
<svg class="a" style="left:167.3px;top:264.25px" width="7" height="8"><path d="M1 8 V1 H4.8 C6 1 6.4 1.8 6.4 2.7 C6.4 3.6 5.9 4.4 4.7 4.4 H1 M3.8 4.4 L6.4 8" fill="none" stroke="#060606" stroke-width="2"/></svg>
<svg class="a" style="left:188.8px;top:264.45px" width="7" height="7"><path d="M0 0 H2 V5.2 H2.6 V0 H4.4 V5.2 H5 V0 H7 V7 H0Z" fill="#060606"/></svg>
<svg class="a" style="left:208px;top:264.65px" width="13" height="7"><rect x="0.6" y="0.6" width="11.8" height="5.8" fill="none" stroke="#111" stroke-width="1.2"/><rect x="4.3" y="0" width="1.2" height="7" fill="#111"/><rect x="8" y="0" width="1.2" height="7" fill="#111"/></svg>
<div class="a" style="left:291.5px;top:242.25px;width:9.5px;height:35px;background:#0c0d0e"></div>
<div class="a" style="left:293px;top:249.25px;width:3.1px;height:27px;background:linear-gradient(#3ee0a2,#2fc0dc)"></div>
<div class="a" style="left:296.9px;top:248.15px;width:2.7px;height:28.1px;background:linear-gradient(#3ee0a2,#2fc0dc)"></div>
<div class="a" style="left:304.6px;top:276.75px;width:946px;height:1px;background:#3d3f43"></div>
<svg class="a" style="left:305px;top:243.65px" width="317" height="32"><use href="#wv"/></svg>
<div class="a" style="left:0;top:276.70px;width:26px;height:1px;background:#8a8a8a"></div>
<svg class="a" style="left:0;top:280.50px" width="8" height="10"><path d="M0 5.5 L1 5 L2 0.5 L3 5 L4 6.5 L5 4.5 L6 7 L7 5.5 L8 6" fill="none" stroke="#fafafa" stroke-width="1.5" stroke-linejoin="round"/><path d="M0.5 5.5 L2 9 L3 5.5" fill="none" stroke="#fafafa" stroke-width="1.2"/></svg>
<div class="t" style="left:13.00px;top:283.00px;font-size:8.43px;color:#5e5e5e;">16</div>
<div class="a" style="left:26px;top:312.70px;width:266px;height:1.2px;background:#47494c"></div>
<div class="a" style="left:32px;top:280.50px;width:36.7px;height:13px;background:#4c4e51"></div>
<div class="a" style="left:50.2px;top:280.50px;width:0.8px;height:13px;background:#1a1b1d"></div>
<svg class="a" style="left:38px;top:283.90px" width="7" height="7"><path d="M0 0 H6.9 V6.6 H4.6 V2 H4 V6.6 H2.9 V2 H2.3 V6.6 H0Z" fill="#060606"/></svg>
<svg class="a" style="left:56px;top:283.90px" width="7" height="7"><path d="M0.8 0 H6.9 V1.9 H2.1 V2.5 H6.1 C6.6 2.5 6.9 2.9 6.9 3.4 V6.1 C6.9 6.5 6.6 6.9 6.1 6.9 H0 V5 H4.8 V4.4 H0.8 C0.3 4.4 0 4 0 3.5 V0.8 C0 0.3 0.3 0 0.8 0Z" fill="#060606"/></svg>
<div class="t" style="left:73.30px;top:282.00px;font-size:11.81px;font-weight:bold;color:#f6f6f6;transform:scaleX(0.9611);">Аудио 01 (D)</div>
<div class="a" style="left:32px;top:297.70px;width:13px;height:12.8px;background:#27292c"></div>
<div class="a" style="left:73.3px;top:297.80px;width:39.6px;height:12.7px;background:#4a4c4f;border-radius:2px"></div>
<div class="a" style="left:116.8px;top:297.80px;width:41.7px;height:12.7px;background:#4a4c4f;border-radius:2px"></div>
<div class="a" style="left:162.3px;top:297.80px;width:38.7px;height:12.7px;background:#4a4c4f;border-radius:2px"></div>
<div class="a" style="left:205.4px;top:297.80px;width:17.3px;height:12.7px;background:#4a4c4f;border-radius:2px"></div>
<div class="a" style="left:79.2px;top:300.70px;width:7px;height:7px;border-radius:50%;background:#080808"></div>
<svg class="a" style="left:101.8px;top:300.30px" width="5" height="8"><path d="M0 2.5 H1.5 L4.5 0 V8 L1.5 5.5 H0Z" fill="#080808"/></svg>
<svg class="a" style="left:121.4px;top:300.10px" width="8" height="8.5"><path d="M1.9 5.2 L6.5 2.3 C6 0.9 4.2 0.5 3 1.1 C1.2 2.1 0.7 4.9 1.2 6.2 C1.9 7.9 4.6 8 6.9 6.3" fill="none" stroke="#0a0a0a" stroke-width="1.35" stroke-linecap="round"/></svg>
<svg class="a" style="left:140.4px;top:301.70px" width="9" height="6"><circle cx="3" cy="3" r="2.4" fill="none" stroke="#111" stroke-width="1.25"/><circle cx="6.2" cy="3" r="2.4" fill="none" stroke="#111" stroke-width="1.25"/></svg>
<svg class="a" style="left:167.3px;top:300.50px" width="7" height="8"><path d="M1 8 V1 H4.8 C6 1 6.4 1.8 6.4 2.7 C6.4 3.6 5.9 4.4 4.7 4.4 H1 M3.8 4.4 L6.4 8" fill="none" stroke="#060606" stroke-width="2"/></svg>
<svg class="a" style="left:188.8px;top:300.70px" width="7" height="7"><path d="M0 0 H2 V5.2 H2.6 V0 H4.4 V5.2 H5 V0 H7 V7 H0Z" fill="#060606"/></svg>
<svg class="a" style="left:208px;top:300.90px" width="13" height="7"><rect x="0.6" y="0.6" width="11.8" height="5.8" fill="none" stroke="#111" stroke-width="1.2"/><rect x="4.3" y="0" width="1.2" height="7" fill="#111"/><rect x="8" y="0" width="1.2" height="7" fill="#111"/></svg>
<div class="a" style="left:291.5px;top:278.50px;width:9.5px;height:35px;background:#0c0d0e"></div>
<div class="a" style="left:293px;top:285.50px;width:3.1px;height:27px;background:linear-gradient(#3ee0a2,#2fc0dc)"></div>
<div class="a" style="left:296.9px;top:284.40px;width:2.7px;height:28.1px;background:linear-gradient(#3ee0a2,#2fc0dc)"></div>
<div class="a" style="left:304.6px;top:313.00px;width:946px;height:1px;background:#3d3f43"></div>
<svg class="a" style="left:305px;top:279.90px" width="317" height="32"><use href="#wv"/></svg>
<div class="a" style="left:0;top:312.95px;width:26px;height:1px;background:#8a8a8a"></div>
<svg class="a" style="left:0;top:316.75px" width="8" height="10"><path d="M0 5.5 L1 5 L2 0.5 L3 5 L4 6.5 L5 4.5 L6 7 L7 5.5 L8 6" fill="none" stroke="#fafafa" stroke-width="1.5" stroke-linejoin="round"/><path d="M0.5 5.5 L2 9 L3 5.5" fill="none" stroke="#fafafa" stroke-width="1.2"/></svg>
<div class="t" style="left:13.00px;top:319.00px;font-size:8.43px;color:#5e5e5e;">17</div>
<div class="a" style="left:26px;top:348.95px;width:266px;height:1.2px;background:#47494c"></div>
<div class="a" style="left:32px;top:316.75px;width:36.7px;height:13px;background:#4c4e51"></div>
<div class="a" style="left:50.2px;top:316.75px;width:0.8px;height:13px;background:#1a1b1d"></div>
<svg class="a" style="left:38px;top:320.15px" width="7" height="7"><path d="M0 0 H6.9 V6.6 H4.6 V2 H4 V6.6 H2.9 V2 H2.3 V6.6 H0Z" fill="#060606"/></svg>
<svg class="a" style="left:56px;top:320.15px" width="7" height="7"><path d="M0.8 0 H6.9 V1.9 H2.1 V2.5 H6.1 C6.6 2.5 6.9 2.9 6.9 3.4 V6.1 C6.9 6.5 6.6 6.9 6.1 6.9 H0 V5 H4.8 V4.4 H0.8 C0.3 4.4 0 4 0 3.5 V0.8 C0 0.3 0.3 0 0.8 0Z" fill="#060606"/></svg>
<div class="t" style="left:73.30px;top:318.00px;font-size:11.81px;font-weight:bold;color:#f6f6f6;transform:scaleX(0.9611);">Аудио 01 (D)</div>
<div class="a" style="left:32px;top:333.95px;width:13px;height:12.8px;background:#27292c"></div>
<div class="a" style="left:73.3px;top:334.05px;width:39.6px;height:12.7px;background:#4a4c4f;border-radius:2px"></div>
<div class="a" style="left:116.8px;top:334.05px;width:41.7px;height:12.7px;background:#4a4c4f;border-radius:2px"></div>
<div class="a" style="left:162.3px;top:334.05px;width:38.7px;height:12.7px;background:#4a4c4f;border-radius:2px"></div>
<div class="a" style="left:205.4px;top:334.05px;width:17.3px;height:12.7px;background:#4a4c4f;border-radius:2px"></div>
<div class="a" style="left:79.2px;top:336.95px;width:7px;height:7px;border-radius:50%;background:#080808"></div>
<svg class="a" style="left:101.8px;top:336.55px" width="5" height="8"><path d="M0 2.5 H1.5 L4.5 0 V8 L1.5 5.5 H0Z" fill="#080808"/></svg>
<svg class="a" style="left:121.4px;top:336.35px" width="8" height="8.5"><path d="M1.9 5.2 L6.5 2.3 C6 0.9 4.2 0.5 3 1.1 C1.2 2.1 0.7 4.9 1.2 6.2 C1.9 7.9 4.6 8 6.9 6.3" fill="none" stroke="#0a0a0a" stroke-width="1.35" stroke-linecap="round"/></svg>
<svg class="a" style="left:140.4px;top:337.95px" width="9" height="6"><circle cx="3" cy="3" r="2.4" fill="none" stroke="#111" stroke-width="1.25"/><circle cx="6.2" cy="3" r="2.4" fill="none" stroke="#111" stroke-width="1.25"/></svg>
<svg class="a" style="left:167.3px;top:336.75px" width="7" height="8"><path d="M1 8 V1 H4.8 C6 1 6.4 1.8 6.4 2.7 C6.4 3.6 5.9 4.4 4.7 4.4 H1 M3.8 4.4 L6.4 8" fill="none" stroke="#060606" stroke-width="2"/></svg>
<svg class="a" style="left:188.8px;top:336.95px" width="7" height="7"><path d="M0 0 H2 V5.2 H2.6 V0 H4.4 V5.2 H5 V0 H7 V7 H0Z" fill="#060606"/></svg>
<svg class="a" style="left:208px;top:337.15px" width="13" height="7"><rect x="0.6" y="0.6" width="11.8" height="5.8" fill="none" stroke="#111" stroke-width="1.2"/><rect x="4.3" y="0" width="1.2" height="7" fill="#111"/><rect x="8" y="0" width="1.2" height="7" fill="#111"/></svg>
<div class="a" style="left:291.5px;top:314.75px;width:9.5px;height:35px;background:#0c0d0e"></div>
<div class="a" style="left:293px;top:321.75px;width:3.1px;height:27px;background:linear-gradient(#3ee0a2,#2fc0dc)"></div>
<div class="a" style="left:296.9px;top:320.65px;width:2.7px;height:28.1px;background:linear-gradient(#3ee0a2,#2fc0dc)"></div>
<div class="a" style="left:304.6px;top:349.25px;width:946px;height:1px;background:#3d3f43"></div>
<svg class="a" style="left:305px;top:316.15px" width="317" height="32"><use href="#wv"/></svg>
<div class="a" style="left:0;top:349.20px;width:26px;height:1px;background:#8a8a8a"></div>
<svg class="a" style="left:0;top:353.00px" width="8" height="10"><path d="M0 5.5 L1 5 L2 0.5 L3 5 L4 6.5 L5 4.5 L6 7 L7 5.5 L8 6" fill="none" stroke="#fafafa" stroke-width="1.5" stroke-linejoin="round"/><path d="M0.5 5.5 L2 9 L3 5.5" fill="none" stroke="#fafafa" stroke-width="1.2"/></svg>
<div class="t" style="left:13.00px;top:355.00px;font-size:8.43px;color:#5e5e5e;">18</div>
<div class="a" style="left:26px;top:385.20px;width:266px;height:1.2px;background:#47494c"></div>
<div class="a" style="left:32px;top:353.00px;width:36.7px;height:13px;background:#4c4e51"></div>
<div class="a" style="left:50.2px;top:353.00px;width:0.8px;height:13px;background:#1a1b1d"></div>
<svg class="a" style="left:38px;top:356.40px" width="7" height="7"><path d="M0 0 H6.9 V6.6 H4.6 V2 H4 V6.6 H2.9 V2 H2.3 V6.6 H0Z" fill="#060606"/></svg>
<svg class="a" style="left:56px;top:356.40px" width="7" height="7"><path d="M0.8 0 H6.9 V1.9 H2.1 V2.5 H6.1 C6.6 2.5 6.9 2.9 6.9 3.4 V6.1 C6.9 6.5 6.6 6.9 6.1 6.9 H0 V5 H4.8 V4.4 H0.8 C0.3 4.4 0 4 0 3.5 V0.8 C0 0.3 0.3 0 0.8 0Z" fill="#060606"/></svg>
<div class="t" style="left:73.30px;top:355.00px;font-size:11.81px;font-weight:bold;color:#f6f6f6;transform:scaleX(0.9611);">Аудио 01 (D)</div>
<div class="a" style="left:32px;top:370.20px;width:13px;height:12.8px;background:#27292c"></div>
<div class="a" style="left:73.3px;top:370.30px;width:39.6px;height:12.7px;background:#4a4c4f;border-radius:2px"></div>
<div class="a" style="left:116.8px;top:370.30px;width:41.7px;height:12.7px;background:#4a4c4f;border-radius:2px"></div>
<div class="a" style="left:162.3px;top:370.30px;width:38.7px;height:12.7px;background:#4a4c4f;border-radius:2px"></div>
<div class="a" style="left:205.4px;top:370.30px;width:17.3px;height:12.7px;background:#4a4c4f;border-radius:2px"></div>
<div class="a" style="left:79.2px;top:373.20px;width:7px;height:7px;border-radius:50%;background:#080808"></div>
<svg class="a" style="left:101.8px;top:372.80px" width="5" height="8"><path d="M0 2.5 H1.5 L4.5 0 V8 L1.5 5.5 H0Z" fill="#080808"/></svg>
<svg class="a" style="left:121.4px;top:372.60px" width="8" height="8.5"><path d="M1.9 5.2 L6.5 2.3 C6 0.9 4.2 0.5 3 1.1 C1.2 2.1 0.7 4.9 1.2 6.2 C1.9 7.9 4.6 8 6.9 6.3" fill="none" stroke="#0a0a0a" stroke-width="1.35" stroke-linecap="round"/></svg>
<svg class="a" style="left:140.4px;top:374.20px" width="9" height="6"><circle cx="3" cy="3" r="2.4" fill="none" stroke="#111" stroke-width="1.25"/><circle cx="6.2" cy="3" r="2.4" fill="none" stroke="#111" stroke-width="1.25"/></svg>
<svg class="a" style="left:167.3px;top:373.00px" width="7" height="8"><path d="M1 8 V1 H4.8 C6 1 6.4 1.8 6.4 2.7 C6.4 3.6 5.9 4.4 4.7 4.4 H1 M3.8 4.4 L6.4 8" fill="none" stroke="#060606" stroke-width="2"/></svg>
<svg class="a" style="left:188.8px;top:373.20px" width="7" height="7"><path d="M0 0 H2 V5.2 H2.6 V0 H4.4 V5.2 H5 V0 H7 V7 H0Z" fill="#060606"/></svg>
<svg class="a" style="left:208px;top:373.40px" width="13" height="7"><rect x="0.6" y="0.6" width="11.8" height="5.8" fill="none" stroke="#111" stroke-width="1.2"/><rect x="4.3" y="0" width="1.2" height="7" fill="#111"/><rect x="8" y="0" width="1.2" height="7" fill="#111"/></svg>
<div class="a" style="left:291.5px;top:351.00px;width:9.5px;height:35px;background:#0c0d0e"></div>
<div class="a" style="left:293px;top:358.00px;width:3.1px;height:27px;background:linear-gradient(#3ee0a2,#2fc0dc)"></div>
<div class="a" style="left:296.9px;top:356.90px;width:2.7px;height:28.1px;background:linear-gradient(#3ee0a2,#2fc0dc)"></div>
<div class="a" style="left:304.6px;top:385.50px;width:946px;height:1px;background:#3d3f43"></div>
<svg class="a" style="left:305px;top:352.40px" width="317" height="32"><use href="#wv"/></svg>
<div class="a" style="left:0;top:385.45px;width:26px;height:1px;background:#8a8a8a"></div>
<svg class="a" style="left:0;top:389.25px" width="8" height="10"><path d="M0 5.5 L1 5 L2 0.5 L3 5 L4 6.5 L5 4.5 L6 7 L7 5.5 L8 6" fill="none" stroke="#fafafa" stroke-width="1.5" stroke-linejoin="round"/><path d="M0.5 5.5 L2 9 L3 5.5" fill="none" stroke="#fafafa" stroke-width="1.2"/></svg>
<div class="t" style="left:13.00px;top:391.00px;font-size:8.43px;color:#5e5e5e;">19</div>
<div class="a" style="left:26px;top:421.45px;width:266px;height:1.2px;background:#47494c"></div>
<div class="a" style="left:32px;top:389.25px;width:36.7px;height:13px;background:#4c4e51"></div>
<div class="a" style="left:50.2px;top:389.25px;width:0.8px;height:13px;background:#1a1b1d"></div>
<svg class="a" style="left:38px;top:392.65px" width="7" height="7"><path d="M0 0 H6.9 V6.6 H4.6 V2 H4 V6.6 H2.9 V2 H2.3 V6.6 H0Z" fill="#060606"/></svg>
<svg class="a" style="left:56px;top:392.65px" width="7" height="7"><path d="M0.8 0 H6.9 V1.9 H2.1 V2.5 H6.1 C6.6 2.5 6.9 2.9 6.9 3.4 V6.1 C6.9 6.5 6.6 6.9 6.1 6.9 H0 V5 H4.8 V4.4 H0.8 C0.3 4.4 0 4 0 3.5 V0.8 C0 0.3 0.3 0 0.8 0Z" fill="#060606"/></svg>
<div class="t" style="left:73.30px;top:391.00px;font-size:11.81px;font-weight:bold;color:#f6f6f6;transform:scaleX(0.9611);">Аудио 01 (D)</div>
<div class="a" style="left:32px;top:406.45px;width:13px;height:12.8px;background:#27292c"></div>
<div class="a" style="left:73.3px;top:406.55px;width:39.6px;height:12.7px;background:#4a4c4f;border-radius:2px"></div>
<div class="a" style="left:116.8px;top:406.55px;width:41.7px;height:12.7px;background:#4a4c4f;border-radius:2px"></div>
<div class="a" style="left:162.3px;top:406.55px;width:38.7px;height:12.7px;background:#4a4c4f;border-radius:2px"></div>
<div class="a" style="left:205.4px;top:406.55px;width:17.3px;height:12.7px;background:#4a4c4f;border-radius:2px"></div>
<div class="a" style="left:79.2px;top:409.45px;width:7px;height:7px;border-radius:50%;background:#080808"></div>
<svg class="a" style="left:101.8px;top:409.05px" width="5" height="8"><path d="M0 2.5 H1.5 L4.5 0 V8 L1.5 5.5 H0Z" fill="#080808"/></svg>
<svg class="a" style="left:121.4px;top:408.85px" width="8" height="8.5"><path d="M1.9 5.2 L6.5 2.3 C6 0.9 4.2 0.5 3 1.1 C1.2 2.1 0.7 4.9 1.2 6.2 C1.9 7.9 4.6 8 6.9 6.3" fill="none" stroke="#0a0a0a" stroke-width="1.35" stroke-linecap="round"/></svg>
<svg class="a" style="left:140.4px;top:410.45px" width="9" height="6"><circle cx="3" cy="3" r="2.4" fill="none" stroke="#111" stroke-width="1.25"/><circle cx="6.2" cy="3" r="2.4" fill="none" stroke="#111" stroke-width="1.25"/></svg>
<svg class="a" style="left:167.3px;top:409.25px" width="7" height="8"><path d="M1 8 V1 H4.8 C6 1 6.4 1.8 6.4 2.7 C6.4 3.6 5.9 4.4 4.7 4.4 H1 M3.8 4.4 L6.4 8" fill="none" stroke="#060606" stroke-width="2"/></svg>
<svg class="a" style="left:188.8px;top:409.45px" width="7" height="7"><path d="M0 0 H2 V5.2 H2.6 V0 H4.4 V5.2 H5 V0 H7 V7 H0Z" fill="#060606"/></svg>
<svg class="a" style="left:208px;top:409.65px" width="13" height="7"><rect x="0.6" y="0.6" width="11.8" height="5.8" fill="none" stroke="#111" stroke-width="1.2"/><rect x="4.3" y="0" width="1.2" height="7" fill="#111"/><rect x="8" y="0" width="1.2" height="7" fill="#111"/></svg>
<div class="a" style="left:291.5px;top:387.25px;width:9.5px;height:35px;background:#0c0d0e"></div>
<div class="a" style="left:293px;top:394.25px;width:3.1px;height:27px;background:linear-gradient(#3ee0a2,#2fc0dc)"></div>
<div class="a" style="left:296.9px;top:393.15px;width:2.7px;height:28.1px;background:linear-gradient(#3ee0a2,#2fc0dc)"></div>
<div class="a" style="left:304.6px;top:421.75px;width:946px;height:1px;background:#3d3f43"></div>
<svg class="a" style="left:305px;top:388.65px" width="317" height="32"><use href="#wv"/></svg>
<div class="a" style="left:0;top:421.70px;width:26px;height:1px;background:#8a8a8a"></div>
<svg class="a" style="left:0;top:425.50px" width="8" height="10"><path d="M0 5.5 L1 5 L2 0.5 L3 5 L4 6.5 L5 4.5 L6 7 L7 5.5 L8 6" fill="none" stroke="#fafafa" stroke-width="1.5" stroke-linejoin="round"/><path d="M0.5 5.5 L2 9 L3 5.5" fill="none" stroke="#fafafa" stroke-width="1.2"/></svg>
<div class="t" style="left:14.00px;top:428.00px;font-size:8.43px;color:#5e5e5e;">20</div>
<div class="a" style="left:26px;top:457.70px;width:266px;height:1.2px;background:#47494c"></div>
<div class="a" style="left:32px;top:425.50px;width:36.7px;height:13px;background:#4c4e51"></div>
<div class="a" style="left:50.2px;top:425.50px;width:0.8px;height:13px;background:#1a1b1d"></div>
<svg class="a" style="left:38px;top:428.90px" width="7" height="7"><path d="M0 0 H6.9 V6.6 H4.6 V2 H4 V6.6 H2.9 V2 H2.3 V6.6 H0Z" fill="#060606"/></svg>
<svg class="a" style="left:56px;top:428.90px" width="7" height="7"><path d="M0.8 0 H6.9 V1.9 H2.1 V2.5 H6.1 C6.6 2.5 6.9 2.9 6.9 3.4 V6.1 C6.9 6.5 6.6 6.9 6.1 6.9 H0 V5 H4.8 V4.4 H0.8 C0.3 4.4 0 4 0 3.5 V0.8 C0 0.3 0.3 0 0.8 0Z" fill="#060606"/></svg>
<div class="t" style="left:73.30px;top:427.00px;font-size:11.81px;font-weight:bold;color:#f6f6f6;transform:scaleX(0.9611);">Аудио 01 (D)</div>
<div class="a" style="left:32px;top:442.70px;width:13px;height:12.8px;background:#27292c"></div>
<div class="a" style="left:73.3px;top:442.80px;width:39.6px;height:12.7px;background:#4a4c4f;border-radius:2px"></div>
<div class="a" style="left:116.8px;top:442.80px;width:41.7px;height:12.7px;background:#4a4c4f;border-radius:2px"></div>
<div class="a" style="left:162.3px;top:442.80px;width:38.7px;height:12.7px;background:#4a4c4f;border-radius:2px"></div>
<div class="a" style="left:205.4px;top:442.80px;width:17.3px;height:12.7px;background:#4a4c4f;border-radius:2px"></div>
<div class="a" style="left:79.2px;top:445.70px;width:7px;height:7px;border-radius:50%;background:#080808"></div>
<svg class="a" style="left:101.8px;top:445.30px" width="5" height="8"><path d="M0 2.5 H1.5 L4.5 0 V8 L1.5 5.5 H0Z" fill="#080808"/></svg>
<svg class="a" style="left:121.4px;top:445.10px" width="8" height="8.5"><path d="M1.9 5.2 L6.5 2.3 C6 0.9 4.2 0.5 3 1.1 C1.2 2.1 0.7 4.9 1.2 6.2 C1.9 7.9 4.6 8 6.9 6.3" fill="none" stroke="#0a0a0a" stroke-width="1.35" stroke-linecap="round"/></svg>
<svg class="a" style="left:140.4px;top:446.70px" width="9" height="6"><circle cx="3" cy="3" r="2.4" fill="none" stroke="#111" stroke-width="1.25"/><circle cx="6.2" cy="3" r="2.4" fill="none" stroke="#111" stroke-width="1.25"/></svg>
<svg class="a" style="left:167.3px;top:445.50px" width="7" height="8"><path d="M1 8 V1 H4.8 C6 1 6.4 1.8 6.4 2.7 C6.4 3.6 5.9 4.4 4.7 4.4 H1 M3.8 4.4 L6.4 8" fill="none" stroke="#060606" stroke-width="2"/></svg>
<svg class="a" style="left:188.8px;top:445.70px" width="7" height="7"><path d="M0 0 H2 V5.2 H2.6 V0 H4.4 V5.2 H5 V0 H7 V7 H0Z" fill="#060606"/></svg>
<svg class="a" style="left:208px;top:445.90px" width="13" height="7"><rect x="0.6" y="0.6" width="11.8" height="5.8" fill="none" stroke="#111" stroke-width="1.2"/><rect x="4.3" y="0" width="1.2" height="7" fill="#111"/><rect x="8" y="0" width="1.2" height="7" fill="#111"/></svg>
<div class="a" style="left:291.5px;top:423.50px;width:9.5px;height:35px;background:#0c0d0e"></div>
<div class="a" style="left:293px;top:430.50px;width:3.1px;height:27px;background:linear-gradient(#3ee0a2,#2fc0dc)"></div>
<div class="a" style="left:296.9px;top:429.40px;width:2.7px;height:28.1px;background:linear-gradient(#3ee0a2,#2fc0dc)"></div>
<div class="a" style="left:304.6px;top:458.00px;width:946px;height:1px;background:#3d3f43"></div>
<svg class="a" style="left:305px;top:424.90px" width="317" height="32"><use href="#wv"/></svg>
<div class="a" style="left:0;top:457.95px;width:26px;height:1px;background:#8a8a8a"></div>
<svg class="a" style="left:0;top:461.75px" width="8" height="10"><path d="M0 5.5 L1 5 L2 0.5 L3 5 L4 6.5 L5 4.5 L6 7 L7 5.5 L8 6" fill="none" stroke="#fafafa" stroke-width="1.5" stroke-linejoin="round"/><path d="M0.5 5.5 L2 9 L3 5.5" fill="none" stroke="#fafafa" stroke-width="1.2"/></svg>
<div class="t" style="left:14.00px;top:464.00px;font-size:8.43px;color:#5e5e5e;">21</div>
<div class="a" style="left:26px;top:493.95px;width:266px;height:1.2px;background:#47494c"></div>
<div class="a" style="left:32px;top:461.75px;width:36.7px;height:13px;background:#4c4e51"></div>
<div class="a" style="left:50.2px;top:461.75px;width:0.8px;height:13px;background:#1a1b1d"></div>
<svg class="a" style="left:38px;top:465.15px" width="7" height="7"><path d="M0 0 H6.9 V6.6 H4.6 V2 H4 V6.6 H2.9 V2 H2.3 V6.6 H0Z" fill="#060606"/></svg>
<svg class="a" style="left:56px;top:465.15px" width="7" height="7"><path d="M0.8 0 H6.9 V1.9 H2.1 V2.5 H6.1 C6.6 2.5 6.9 2.9 6.9 3.4 V6.1 C6.9 6.5 6.6 6.9 6.1 6.9 H0 V5 H4.8 V4.4 H0.8 C0.3 4.4 0 4 0 3.5 V0.8 C0 0.3 0.3 0 0.8 0Z" fill="#060606"/></svg>
<div class="t" style="left:73.30px;top:463.00px;font-size:11.81px;font-weight:bold;color:#f6f6f6;transform:scaleX(0.9611);">Аудио 01 (D)</div>
<div class="a" style="left:32px;top:478.95px;width:13px;height:12.8px;background:#27292c"></div>
<div class="a" style="left:73.3px;top:479.05px;width:39.6px;height:12.7px;background:#4a4c4f;border-radius:2px"></div>
<div class="a" style="left:116.8px;top:479.05px;width:41.7px;height:12.7px;background:#4a4c4f;border-radius:2px"></div>
<div class="a" style="left:162.3px;top:479.05px;width:38.7px;height:12.7px;background:#4a4c4f;border-radius:2px"></div>
<div class="a" style="left:205.4px;top:479.05px;width:17.3px;height:12.7px;background:#4a4c4f;border-radius:2px"></div>
<div class="a" style="left:79.2px;top:481.95px;width:7px;height:7px;border-radius:50%;background:#080808"></div>
<svg class="a" style="left:101.8px;top:481.55px" width="5" height="8"><path d="M0 2.5 H1.5 L4.5 0 V8 L1.5 5.5 H0Z" fill="#080808"/></svg>
<svg class="a" style="left:121.4px;top:481.35px" width="8" height="8.5"><path d="M1.9 5.2 L6.5 2.3 C6 0.9 4.2 0.5 3 1.1 C1.2 2.1 0.7 4.9 1.2 6.2 C1.9 7.9 4.6 8 6.9 6.3" fill="none" stroke="#0a0a0a" stroke-width="1.35" stroke-linecap="round"/></svg>
<svg class="a" style="left:140.4px;top:482.95px" width="9" height="6"><circle cx="3" cy="3" r="2.4" fill="none" stroke="#111" stroke-width="1.25"/><circle cx="6.2" cy="3" r="2.4" fill="none" stroke="#111" stroke-width="1.25"/></svg>
<svg class="a" style="left:167.3px;top:481.75px" width="7" height="8"><path d="M1 8 V1 H4.8 C6 1 6.4 1.8 6.4 2.7 C6.4 3.6 5.9 4.4 4.7 4.4 H1 M3.8 4.4 L6.4 8" fill="none" stroke="#060606" stroke-width="2"/></svg>
<svg class="a" style="left:188.8px;top:481.95px" width="7" height="7"><path d="M0 0 H2 V5.2 H2.6 V0 H4.4 V5.2 H5 V0 H7 V7 H0Z" fill="#060606"/></svg>
<svg class="a" style="left:208px;top:482.15px" width="13" height="7"><rect x="0.6" y="0.6" width="11.8" height="5.8" fill="none" stroke="#111" stroke-width="1.2"/><rect x="4.3" y="0" width="1.2" height="7" fill="#111"/><rect x="8" y="0" width="1.2" height="7" fill="#111"/></svg>
<div class="a" style="left:291.5px;top:459.75px;width:9.5px;height:35px;background:#0c0d0e"></div>
<div class="a" style="left:293px;top:466.75px;width:3.1px;height:27px;background:linear-gradient(#3ee0a2,#2fc0dc)"></div>
<div class="a" style="left:296.9px;top:465.65px;width:2.7px;height:28.1px;background:linear-gradient(#3ee0a2,#2fc0dc)"></div>
<div class="a" style="left:304.6px;top:494.25px;width:946px;height:1px;background:#3d3f43"></div>
<svg class="a" style="left:305px;top:461.15px" width="317" height="32"><use href="#wv"/></svg>
<div class="a" style="left:0;top:494.20px;width:26px;height:1px;background:#8a8a8a"></div>
<svg class="a" style="left:0;top:498.00px" width="8" height="10"><path d="M0 5.5 L1 5 L2 0.5 L3 5 L4 6.5 L5 4.5 L6 7 L7 5.5 L8 6" fill="none" stroke="#fafafa" stroke-width="1.5" stroke-linejoin="round"/><path d="M0.5 5.5 L2 9 L3 5.5" fill="none" stroke="#fafafa" stroke-width="1.2"/></svg>
<div class="t" style="left:14.00px;top:500.00px;font-size:8.43px;color:#5e5e5e;">22</div>
<div class="a" style="left:26px;top:530.20px;width:266px;height:1.2px;background:#47494c"></div>
<div class="a" style="left:32px;top:498.00px;width:36.7px;height:13px;background:#4c4e51"></div>
<div class="a" style="left:50.2px;top:498.00px;width:0.8px;height:13px;background:#1a1b1d"></div>
<svg class="a" style="left:38px;top:501.40px" width="7" height="7"><path d="M0 0 H6.9 V6.6 H4.6 V2 H4 V6.6 H2.9 V2 H2.3 V6.6 H0Z" fill="#060606"/></svg>
<svg class="a" style="left:56px;top:501.40px" width="7" height="7"><path d="M0.8 0 H6.9 V1.9 H2.1 V2.5 H6.1 C6.6 2.5 6.9 2.9 6.9 3.4 V6.1 C6.9 6.5 6.6 6.9 6.1 6.9 H0 V5 H4.8 V4.4 H0.8 C0.3 4.4 0 4 0 3.5 V0.8 C0 0.3 0.3 0 0.8 0Z" fill="#060606"/></svg>
<div class="t" style="left:73.30px;top:500.00px;font-size:11.81px;font-weight:bold;color:#f6f6f6;transform:scaleX(0.9611);">Аудио 01 (D)</div>
<div class="a" style="left:32px;top:515.20px;width:13px;height:12.8px;background:#27292c"></div>
<div class="a" style="left:73.3px;top:515.30px;width:39.6px;height:12.7px;background:#4a4c4f;border-radius:2px"></div>
<div class="a" style="left:116.8px;top:515.30px;width:41.7px;height:12.7px;background:#4a4c4f;border-radius:2px"></div>
<div class="a" style="left:162.3px;top:515.30px;width:38.7px;height:12.7px;background:#4a4c4f;border-radius:2px"></div>
<div class="a" style="left:205.4px;top:515.30px;width:17.3px;height:12.7px;background:#4a4c4f;border-radius:2px"></div>
<div class="a" style="left:79.2px;top:518.20px;width:7px;height:7px;border-radius:50%;background:#080808"></div>
<svg class="a" style="left:101.8px;top:517.80px" width="5" height="8"><path d="M0 2.5 H1.5 L4.5 0 V8 L1.5 5.5 H0Z" fill="#080808"/></svg>
<svg class="a" style="left:121.4px;top:517.60px" width="8" height="8.5"><path d="M1.9 5.2 L6.5 2.3 C6 0.9 4.2 0.5 3 1.1 C1.2 2.1 0.7 4.9 1.2 6.2 C1.9 7.9 4.6 8 6.9 6.3" fill="none" stroke="#0a0a0a" stroke-width="1.35" stroke-linecap="round"/></svg>
<svg class="a" style="left:140.4px;top:519.20px" width="9" height="6"><circle cx="3" cy="3" r="2.4" fill="none" stroke="#111" stroke-width="1.25"/><circle cx="6.2" cy="3" r="2.4" fill="none" stroke="#111" stroke-width="1.25"/></svg>
<svg class="a" style="left:167.3px;top:518.00px" width="7" height="8"><path d="M1 8 V1 H4.8 C6 1 6.4 1.8 6.4 2.7 C6.4 3.6 5.9 4.4 4.7 4.4 H1 M3.8 4.4 L6.4 8" fill="none" stroke="#060606" stroke-width="2"/></svg>
<svg class="a" style="left:188.8px;top:518.20px" width="7" height="7"><path d="M0 0 H2 V5.2 H2.6 V0 H4.4 V5.2 H5 V0 H7 V7 H0Z" fill="#060606"/></svg>
<svg class="a" style="left:208px;top:518.40px" width="13" height="7"><rect x="0.6" y="0.6" width="11.8" height="5.8" fill="none" stroke="#111" stroke-width="1.2"/><rect x="4.3" y="0" width="1.2" height="7" fill="#111"/><rect x="8" y="0" width="1.2" height="7" fill="#111"/></svg>
<div class="a" style="left:291.5px;top:496.00px;width:9.5px;height:35px;background:#0c0d0e"></div>
<div class="a" style="left:293px;top:503.00px;width:3.1px;height:27px;background:linear-gradient(#3ee0a2,#2fc0dc)"></div>
<div class="a" style="left:296.9px;top:501.90px;width:2.7px;height:28.1px;background:linear-gradient(#3ee0a2,#2fc0dc)"></div>
<div class="a" style="left:304.6px;top:530.50px;width:946px;height:1px;background:#3d3f43"></div>
<svg class="a" style="left:305px;top:497.40px" width="317" height="32"><use href="#wv"/></svg>
<div class="a" style="left:0;top:530.45px;width:26px;height:1px;background:#8a8a8a"></div>
<svg class="a" style="left:0;top:534.25px" width="8" height="10"><path d="M0 5.5 L1 5 L2 0.5 L3 5 L4 6.5 L5 4.5 L6 7 L7 5.5 L8 6" fill="none" stroke="#fafafa" stroke-width="1.5" stroke-linejoin="round"/><path d="M0.5 5.5 L2 9 L3 5.5" fill="none" stroke="#fafafa" stroke-width="1.2"/></svg>
<div class="t" style="left:14.00px;top:536.00px;font-size:8.43px;color:#5e5e5e;">23</div>
<div class="a" style="left:26px;top:566.45px;width:266px;height:1.2px;background:#47494c"></div>
<div class="a" style="left:32px;top:534.25px;width:36.7px;height:13px;background:#4c4e51"></div>
<div class="a" style="left:50.2px;top:534.25px;width:0.8px;height:13px;background:#1a1b1d"></div>
<svg class="a" style="left:38px;top:537.65px" width="7" height="7"><path d="M0 0 H6.9 V6.6 H4.6 V2 H4 V6.6 H2.9 V2 H2.3 V6.6 H0Z" fill="#060606"/></svg>
<svg class="a" style="left:56px;top:537.65px" width="7" height="7"><path d="M0.8 0 H6.9 V1.9 H2.1 V2.5 H6.1 C6.6 2.5 6.9 2.9 6.9 3.4 V6.1 C6.9 6.5 6.6 6.9 6.1 6.9 H0 V5 H4.8 V4.4 H0.8 C0.3 4.4 0 4 0 3.5 V0.8 C0 0.3 0.3 0 0.8 0Z" fill="#060606"/></svg>
<div class="t" style="left:73.30px;top:536.00px;font-size:11.81px;font-weight:bold;color:#f6f6f6;transform:scaleX(0.9611);">Аудио 01 (D)</div>
<div class="a" style="left:32px;top:551.45px;width:13px;height:12.8px;background:#27292c"></div>
<div class="a" style="left:73.3px;top:551.55px;width:39.6px;height:12.7px;background:#4a4c4f;border-radius:2px"></div>
<div class="a" style="left:116.8px;top:551.55px;width:41.7px;height:12.7px;background:#4a4c4f;border-radius:2px"></div>
<div class="a" style="left:162.3px;top:551.55px;width:38.7px;height:12.7px;background:#4a4c4f;border-radius:2px"></div>
<div class="a" style="left:205.4px;top:551.55px;width:17.3px;height:12.7px;background:#4a4c4f;border-radius:2px"></div>
<div class="a" style="left:79.2px;top:554.45px;width:7px;height:7px;border-radius:50%;background:#080808"></div>
<svg class="a" style="left:101.8px;top:554.05px" width="5" height="8"><path d="M0 2.5 H1.5 L4.5 0 V8 L1.5 5.5 H0Z" fill="#080808"/></svg>
<svg class="a" style="left:121.4px;top:553.85px" width="8" height="8.5"><path d="M1.9 5.2 L6.5 2.3 C6 0.9 4.2 0.5 3 1.1 C1.2 2.1 0.7 4.9 1.2 6.2 C1.9 7.9 4.6 8 6.9 6.3" fill="none" stroke="#0a0a0a" stroke-width="1.35" stroke-linecap="round"/></svg>
<svg class="a" style="left:140.4px;top:555.45px" width="9" height="6"><circle cx="3" cy="3" r="2.4" fill="none" stroke="#111" stroke-width="1.25"/><circle cx="6.2" cy="3" r="2.4" fill="none" stroke="#111" stroke-width="1.25"/></svg>
<svg class="a" style="left:167.3px;top:554.25px" width="7" height="8"><path d="M1 8 V1 H4.8 C6 1 6.4 1.8 6.4 2.7 C6.4 3.6 5.9 4.4 4.7 4.4 H1 M3.8 4.4 L6.4 8" fill="none" stroke="#060606" stroke-width="2"/></svg>
<svg class="a" style="left:188.8px;top:554.45px" width="7" height="7"><path d="M0 0 H2 V5.2 H2.6 V0 H4.4 V5.2 H5 V0 H7 V7 H0Z" fill="#060606"/></svg>
<svg class="a" style="left:208px;top:554.65px" width="13" height="7"><rect x="0.6" y="0.6" width="11.8" height="5.8" fill="none" stroke="#111" stroke-width="1.2"/><rect x="4.3" y="0" width="1.2" height="7" fill="#111"/><rect x="8" y="0" width="1.2" height="7" fill="#111"/></svg>
<div class="a" style="left:291.5px;top:532.25px;width:9.5px;height:35px;background:#0c0d0e"></div>
<div class="a" style="left:293px;top:539.25px;width:3.1px;height:27px;background:linear-gradient(#3ee0a2,#2fc0dc)"></div>
<div class="a" style="left:296.9px;top:538.15px;width:2.7px;height:28.1px;background:linear-gradient(#3ee0a2,#2fc0dc)"></div>
<div class="a" style="left:304.6px;top:566.75px;width:946px;height:1px;background:#3d3f43"></div>
<svg class="a" style="left:305px;top:533.65px" width="317" height="32"><use href="#wv"/></svg>
<div class="a" style="left:0;top:566.70px;width:26px;height:1px;background:#8a8a8a"></div>
<svg class="a" style="left:0;top:570.50px" width="8" height="10"><path d="M0 5.5 L1 5 L2 0.5 L3 5 L4 6.5 L5 4.5 L6 7 L7 5.5 L8 6" fill="none" stroke="#fafafa" stroke-width="1.5" stroke-linejoin="round"/><path d="M0.5 5.5 L2 9 L3 5.5" fill="none" stroke="#fafafa" stroke-width="1.2"/></svg>
<div class="t" style="left:14.00px;top:573.00px;font-size:8.43px;color:#5e5e5e;">24</div>
<div class="a" style="left:26px;top:602.70px;width:266px;height:1.2px;background:#47494c"></div>
<div class="a" style="left:32px;top:570.50px;width:36.7px;height:13px;background:#4c4e51"></div>
<div class="a" style="left:50.2px;top:570.50px;width:0.8px;height:13px;background:#1a1b1d"></div>
<svg class="a" style="left:38px;top:573.90px" width="7" height="7"><path d="M0 0 H6.9 V6.6 H4.6 V2 H4 V6.6 H2.9 V2 H2.3 V6.6 H0Z" fill="#060606"/></svg>
<svg class="a" style="left:56px;top:573.90px" width="7" height="7"><path d="M0.8 0 H6.9 V1.9 H2.1 V2.5 H6.1 C6.6 2.5 6.9 2.9 6.9 3.4 V6.1 C6.9 6.5 6.6 6.9 6.1 6.9 H0 V5 H4.8 V4.4 H0.8 C0.3 4.4 0 4 0 3.5 V0.8 C0 0.3 0.3 0 0.8 0Z" fill="#060606"/></svg>
<div class="t" style="left:73.30px;top:572.00px;font-size:11.81px;font-weight:bold;color:#f6f6f6;transform:scaleX(0.9611);">Аудио 01 (D)</div>
<div class="a" style="left:32px;top:587.70px;width:13px;height:12.8px;background:#27292c"></div>
<div class="a" style="left:73.3px;top:587.80px;width:39.6px;height:12.7px;background:#4a4c4f;border-radius:2px"></div>
<div class="a" style="left:116.8px;top:587.80px;width:41.7px;height:12.7px;background:#4a4c4f;border-radius:2px"></div>
<div class="a" style="left:162.3px;top:587.80px;width:38.7px;height:12.7px;background:#4a4c4f;border-radius:2px"></div>
<div class="a" style="left:205.4px;top:587.80px;width:17.3px;height:12.7px;background:#4a4c4f;border-radius:2px"></div>
<div class="a" style="left:79.2px;top:590.70px;width:7px;height:7px;border-radius:50%;background:#080808"></div>
<svg class="a" style="left:101.8px;top:590.30px" width="5" height="8"><path d="M0 2.5 H1.5 L4.5 0 V8 L1.5 5.5 H0Z" fill="#080808"/></svg>
<svg class="a" style="left:121.4px;top:590.10px" width="8" height="8.5"><path d="M1.9 5.2 L6.5 2.3 C6 0.9 4.2 0.5 3 1.1 C1.2 2.1 0.7 4.9 1.2 6.2 C1.9 7.9 4.6 8 6.9 6.3" fill="none" stroke="#0a0a0a" stroke-width="1.35" stroke-linecap="round"/></svg>
<svg class="a" style="left:140.4px;top:591.70px" width="9" height="6"><circle cx="3" cy="3" r="2.4" fill="none" stroke="#111" stroke-width="1.25"/><circle cx="6.2" cy="3" r="2.4" fill="none" stroke="#111" stroke-width="1.25"/></svg>
<svg class="a" style="left:167.3px;top:590.50px" width="7" height="8"><path d="M1 8 V1 H4.8 C6 1 6.4 1.8 6.4 2.7 C6.4 3.6 5.9 4.4 4.7 4.4 H1 M3.8 4.4 L6.4 8" fill="none" stroke="#060606" stroke-width="2"/></svg>
<svg class="a" style="left:188.8px;top:590.70px" width="7" height="7"><path d="M0 0 H2 V5.2 H2.6 V0 H4.4 V5.2 H5 V0 H7 V7 H0Z" fill="#060606"/></svg>
<svg class="a" style="left:208px;top:590.90px" width="13" height="7"><rect x="0.6" y="0.6" width="11.8" height="5.8" fill="none" stroke="#111" stroke-width="1.2"/><rect x="4.3" y="0" width="1.2" height="7" fill="#111"/><rect x="8" y="0" width="1.2" height="7" fill="#111"/></svg>
<div class="a" style="left:291.5px;top:568.50px;width:9.5px;height:35px;background:#0c0d0e"></div>
<div class="a" style="left:293px;top:575.50px;width:3.1px;height:27px;background:linear-gradient(#3ee0a2,#2fc0dc)"></div>
<div class="a" style="left:296.9px;top:574.40px;width:2.7px;height:28.1px;background:linear-gradient(#3ee0a2,#2fc0dc)"></div>
<div class="a" style="left:304.6px;top:603.00px;width:946px;height:1px;background:#3d3f43"></div>
<svg class="a" style="left:305px;top:569.90px" width="317" height="32"><use href="#wv"/></svg>
<div class="a" style="left:0;top:602.95px;width:26px;height:1px;background:#8a8a8a"></div>
<svg class="a" style="left:0;top:606.75px" width="8" height="10"><path d="M0 5.5 L1 5 L2 0.5 L3 5 L4 6.5 L5 4.5 L6 7 L7 5.5 L8 6" fill="none" stroke="#fafafa" stroke-width="1.5" stroke-linejoin="round"/><path d="M0.5 5.5 L2 9 L3 5.5" fill="none" stroke="#fafafa" stroke-width="1.2"/></svg>
<div class="t" style="left:14.00px;top:609.00px;font-size:8.43px;color:#5e5e5e;">25</div>
<div class="a" style="left:26px;top:638.95px;width:266px;height:1.2px;background:#47494c"></div>
<div class="a" style="left:32px;top:606.75px;width:36.7px;height:13px;background:#4c4e51"></div>
<div class="a" style="left:50.2px;top:606.75px;width:0.8px;height:13px;background:#1a1b1d"></div>
<svg class="a" style="left:38px;top:610.15px" width="7" height="7"><path d="M0 0 H6.9 V6.6 H4.6 V2 H4 V6.6 H2.9 V2 H2.3 V6.6 H0Z" fill="#060606"/></svg>
<svg class="a" style="left:56px;top:610.15px" width="7" height="7"><path d="M0.8 0 H6.9 V1.9 H2.1 V2.5 H6.1 C6.6 2.5 6.9 2.9 6.9 3.4 V6.1 C6.9 6.5 6.6 6.9 6.1 6.9 H0 V5 H4.8 V4.4 H0.8 C0.3 4.4 0 4 0 3.5 V0.8 C0 0.3 0.3 0 0.8 0Z" fill="#060606"/></svg>
<div class="t" style="left:73.30px;top:608.00px;font-size:11.81px;font-weight:bold;color:#f6f6f6;transform:scaleX(0.9611);">Аудио 01 (D)</div>
<div class="a" style="left:32px;top:623.95px;width:13px;height:12.8px;background:#27292c"></div>
<div class="a" style="left:73.3px;top:624.05px;width:39.6px;height:12.7px;background:#4a4c4f;border-radius:2px"></div>
<div class="a" style="left:116.8px;top:624.05px;width:41.7px;height:12.7px;background:#4a4c4f;border-radius:2px"></div>
<div class="a" style="left:162.3px;top:624.05px;width:38.7px;height:12.7px;background:#4a4c4f;border-radius:2px"></div>
<div class="a" style="left:205.4px;top:624.05px;width:17.3px;height:12.7px;background:#4a4c4f;border-radius:2px"></div>
<div class="a" style="left:79.2px;top:626.95px;width:7px;height:7px;border-radius:50%;background:#080808"></div>
<svg class="a" style="left:101.8px;top:626.55px" width="5" height="8"><path d="M0 2.5 H1.5 L4.5 0 V8 L1.5 5.5 H0Z" fill="#080808"/></svg>
<svg class="a" style="left:121.4px;top:626.35px" width="8" height="8.5"><path d="M1.9 5.2 L6.5 2.3 C6 0.9 4.2 0.5 3 1.1 C1.2 2.1 0.7 4.9 1.2 6.2 C1.9 7.9 4.6 8 6.9 6.3" fill="none" stroke="#0a0a0a" stroke-width="1.35" stroke-linecap="round"/></svg>
<svg class="a" style="left:140.4px;top:627.95px" width="9" height="6"><circle cx="3" cy="3" r="2.4" fill="none" stroke="#111" stroke-width="1.25"/><circle cx="6.2" cy="3" r="2.4" fill="none" stroke="#111" stroke-width="1.25"/></svg>
<svg class="a" style="left:167.3px;top:626.75px" width="7" height="8"><path d="M1 8 V1 H4.8 C6 1 6.4 1.8 6.4 2.7 C6.4 3.6 5.9 4.4 4.7 4.4 H1 M3.8 4.4 L6.4 8" fill="none" stroke="#060606" stroke-width="2"/></svg>
<svg class="a" style="left:188.8px;top:626.95px" width="7" height="7"><path d="M0 0 H2 V5.2 H2.6 V0 H4.4 V5.2 H5 V0 H7 V7 H0Z" fill="#060606"/></svg>
<svg class="a" style="left:208px;top:627.15px" width="13" height="7"><rect x="0.6" y="0.6" width="11.8" height="5.8" fill="none" stroke="#111" stroke-width="1.2"/><rect x="4.3" y="0" width="1.2" height="7" fill="#111"/><rect x="8" y="0" width="1.2" height="7" fill="#111"/></svg>
<div class="a" style="left:291.5px;top:604.75px;width:9.5px;height:35px;background:#0c0d0e"></div>
<div class="a" style="left:293px;top:611.75px;width:3.1px;height:27px;background:linear-gradient(#3ee0a2,#2fc0dc)"></div>
<div class="a" style="left:296.9px;top:610.65px;width:2.7px;height:28.1px;background:linear-gradient(#3ee0a2,#2fc0dc)"></div>
<div class="a" style="left:304.6px;top:639.25px;width:946px;height:1px;background:#3d3f43"></div>
<svg class="a" style="left:305px;top:606.15px" width="317" height="32"><use href="#wv"/></svg>
<div class="a" style="left:0;top:639.20px;width:26px;height:1px;background:#8a8a8a"></div>
<svg class="a" style="left:0;top:643.00px" width="8" height="10"><path d="M0 5.5 L1 5 L2 0.5 L3 5 L4 6.5 L5 4.5 L6 7 L7 5.5 L8 6" fill="none" stroke="#fafafa" stroke-width="1.5" stroke-linejoin="round"/><path d="M0.5 5.5 L2 9 L3 5.5" fill="none" stroke="#fafafa" stroke-width="1.2"/></svg>
<div class="t" style="left:14.00px;top:645.00px;font-size:8.43px;color:#5e5e5e;">26</div>
<div class="a" style="left:26px;top:675.20px;width:266px;height:1.2px;background:#47494c"></div>
<div class="a" style="left:32px;top:643.00px;width:36.7px;height:13px;background:#4c4e51"></div>
<div class="a" style="left:50.2px;top:643.00px;width:0.8px;height:13px;background:#1a1b1d"></div>
<svg class="a" style="left:38px;top:646.40px" width="7" height="7"><path d="M0 0 H6.9 V6.6 H4.6 V2 H4 V6.6 H2.9 V2 H2.3 V6.6 H0Z" fill="#060606"/></svg>
<svg class="a" style="left:56px;top:646.40px" width="7" height="7"><path d="M0.8 0 H6.9 V1.9 H2.1 V2.5 H6.1 C6.6 2.5 6.9 2.9 6.9 3.4 V6.1 C6.9 6.5 6.6 6.9 6.1 6.9 H0 V5 H4.8 V4.4 H0.8 C0.3 4.4 0 4 0 3.5 V0.8 C0 0.3 0.3 0 0.8 0Z" fill="#060606"/></svg>
<div class="t" style="left:73.30px;top:645.00px;font-size:11.81px;font-weight:bold;color:#f6f6f6;transform:scaleX(0.9611);">Аудио 01 (D)</div>
<div class="a" style="left:32px;top:660.20px;width:13px;height:12.8px;background:#27292c"></div>
<div class="a" style="left:73.3px;top:660.30px;width:39.6px;height:12.7px;background:#4a4c4f;border-radius:2px"></div>
<div class="a" style="left:116.8px;top:660.30px;width:41.7px;height:12.7px;background:#4a4c4f;border-radius:2px"></div>
<div class="a" style="left:162.3px;top:660.30px;width:38.7px;height:12.7px;background:#4a4c4f;border-radius:2px"></div>
<div class="a" style="left:205.4px;top:660.30px;width:17.3px;height:12.7px;background:#4a4c4f;border-radius:2px"></div>
<div class="a" style="left:79.2px;top:663.20px;width:7px;height:7px;border-radius:50%;background:#080808"></div>
<svg class="a" style="left:101.8px;top:662.80px" width="5" height="8"><path d="M0 2.5 H1.5 L4.5 0 V8 L1.5 5.5 H0Z" fill="#080808"/></svg>
<svg class="a" style="left:121.4px;top:662.60px" width="8" height="8.5"><path d="M1.9 5.2 L6.5 2.3 C6 0.9 4.2 0.5 3 1.1 C1.2 2.1 0.7 4.9 1.2 6.2 C1.9 7.9 4.6 8 6.9 6.3" fill="none" stroke="#0a0a0a" stroke-width="1.35" stroke-linecap="round"/></svg>
<svg class="a" style="left:140.4px;top:664.20px" width="9" height="6"><circle cx="3" cy="3" r="2.4" fill="none" stroke="#111" stroke-width="1.25"/><circle cx="6.2" cy="3" r="2.4" fill="none" stroke="#111" stroke-width="1.25"/></svg>
<svg class="a" style="left:167.3px;top:663.00px" width="7" height="8"><path d="M1 8 V1 H4.8 C6 1 6.4 1.8 6.4 2.7 C6.4 3.6 5.9 4.4 4.7 4.4 H1 M3.8 4.4 L6.4 8" fill="none" stroke="#060606" stroke-width="2"/></svg>
<svg class="a" style="left:188.8px;top:663.20px" width="7" height="7"><path d="M0 0 H2 V5.2 H2.6 V0 H4.4 V5.2 H5 V0 H7 V7 H0Z" fill="#060606"/></svg>
<svg class="a" style="left:208px;top:663.40px" width="13" height="7"><rect x="0.6" y="0.6" width="11.8" height="5.8" fill="none" stroke="#111" stroke-width="1.2"/><rect x="4.3" y="0" width="1.2" height="7" fill="#111"/><rect x="8" y="0" width="1.2" height="7" fill="#111"/></svg>
<div class="a" style="left:291.5px;top:641.00px;width:9.5px;height:35px;background:#0c0d0e"></div>
<div class="a" style="left:293px;top:648.00px;width:3.1px;height:27px;background:linear-gradient(#3ee0a2,#2fc0dc)"></div>
<div class="a" style="left:296.9px;top:646.90px;width:2.7px;height:28.1px;background:linear-gradient(#3ee0a2,#2fc0dc)"></div>
<div class="a" style="left:304.6px;top:675.50px;width:946px;height:1px;background:#3d3f43"></div>
<svg class="a" style="left:305px;top:642.40px" width="317" height="32"><use href="#wv"/></svg>
<div class="a" style="left:483px;top:35.5px;width:1.2px;height:616px;background:#dcdcdc"></div>
<div class="a" style="left:485px;top:35.5px;width:2px;height:616px;background:#8a8a8a"></div>
<div class="a" style="left:1250px;top:32px;width:15.5px;height:620px;background:#25272a"></div>
<div class="a" style="left:1250px;top:32px;width:15.5px;height:24.6px;background:#1e2023"></div>
<div class="a" style="left:1265px;top:31px;width:1.2px;height:620px;background:#4a4b4e"></div>
<div class="a" style="left:1266.2px;top:26px;width:14px;height:626px;background:#0b0c0e"></div>
<div class="a" style="left:1270.5px;top:50px;width:10px;height:602px;background:#26282b;border-left:1.2px solid #4a4b4e;border-top:1.2px solid #4a4b4e;border-radius:4px 0 0 0"></div>
<div class="a" style="left:1274px;top:56px;width:6px;height:14px;background:#e6e6e6"></div>
<div class="a" style="left:1274px;top:75px;width:6px;height:10px;background:#4a4c50"></div>
<div class="a" style="left:1251px;top:36px;width:10px;height:18px;background:#5c5e62;border-radius:2px"></div>
<svg class="a" style="left:1252px;top:41px" width="8" height="8"><path d="M0.5 0.5 H7.5 L4 7Z" fill="#f0f0f0"/></svg>
<svg class="a" style="left:1252px;top:61px" width="8" height="7"><path d="M0.5 6.5 L7 0.5" stroke="#9a9a9a" stroke-width="1.2"/></svg>
<div class="a" style="left:1255.2px;top:74px;width:1px;height:40px;background:#a0a0a0"></div>
<div class="a" style="left:1253.2px;top:112.5px;width:5px;height:5px;border-radius:50%;background:#a8a8a8"></div>
<div class="a" style="left:1251px;top:123px;width:10px;height:30px;background:#3e4043;border-radius:2px"></div>
<svg class="a" style="left:1253px;top:127px" width="6" height="4"><path d="M0.5 3.5 L3 1 L5.5 3.5" fill="none" stroke="#ddd" stroke-width="1.2"/></svg>
<div class="a" style="left:249.4px;top:144.2px;width:1045px;height:489.3px;border-radius:8px;background:linear-gradient(90deg,#1a2136 0%,#1b2135 50%,#1b1f30 66%,#1c1d23 86%,#1c1d21 100%);border:1px solid #363b4b;box-shadow:0 10px 20px 0 rgba(0,0,0,0.5)"></div>
<div class="a" style="left:292.4px;top:183.5px;width:1000px;height:449px;border-radius:7px 0 0 0;background:#1b1b1b"></div>
<svg class="a" style="left:264px;top:158.5px" width="14" height="11"><rect x="0" y="0" width="14" height="10.5" rx="1" fill="#bfe4fa"/><path d="M0 8.5 L2.5 5 L4.5 6.5 L6.5 3.5 L8.5 6.5 L10.5 4.5 L14 7.5 V10.5 H0Z" fill="#4a9ee0"/></svg>
<div class="t" style="left:295.00px;top:162.00px;font-size:9.84px;color:#e4e4e4;transform:scaleX(1.0803);">Диспетчер задач</div>
<div class="a" style="left:1199.8px;top:157px;width:9px;height:1.1px;background:#e0e0e0"></div>
<div class="a" style="left:1238.4px;top:152.6px;width:9px;height:9px;border:1.1px solid #e0e0e0;border-radius:1.5px"></div>
<svg class="a" style="left:1277.5px;top:152.6px" width="10" height="10"><path d="M0.5 0.5 L9.5 9.5 M9.5 0.5 L0.5 9.5" stroke="#e0e0e0" stroke-width="1.1"/></svg>
<svg class="a" style="left:264px;top:198px" width="14" height="11"><path d="M0 1.5 H14 M0 5.5 H14 M0 9.5 H14" stroke="#e6e6e6" stroke-width="1"/></svg>
<svg class="a" style="left:264.5px;top:232px" width="12" height="12"><path d="M0.6 0.6 H5.4 V5.4 H0.6Z M5.4 0.6 H10.8 V5.4 H5.4Z M0.6 5.4 H5.4 V10.8 H0.6Z" fill="none" stroke="#d8d8d8" stroke-width="1.1"/></svg>
<div class="a" style="left:253.8px;top:257px;width:33.8px;height:30.6px;border-radius:4px;background:#262c3b"></div>
<div class="a" style="left:253.8px;top:264.5px;width:2.4px;height:15.5px;border-radius:2px;background:#4cc2ff"></div>
<svg class="a" style="left:264.5px;top:266px" width="13" height="13"><rect x="0.6" y="0.6" width="11.8" height="11.8" rx="2.5" fill="none" stroke="#d8d8d8" stroke-width="1.2"/><path d="M2.3 6.8 H4 L5.5 4 L7.5 9 L9 6 H10.7" fill="none" stroke="#d8d8d8" stroke-width="1.2"/></svg>
<svg class="a" style="left:263.8px;top:299px" width="15" height="15"><path d="M2.6 4 A6 6 0 1 1 1.6 8.8" fill="none" stroke="#d8d8d8" stroke-width="1.2"/><path d="M1.2 1.5 V4.8 H4.5" fill="none" stroke="#d8d8d8" stroke-width="1.2"/><path d="M7.5 4.3 V8 H10.3" fill="none" stroke="#d8d8d8" stroke-width="1.2"/></svg>
<svg class="a" style="left:264px;top:335.5px" width="15" height="11"><path d="M1.3 6 C2.2 2.8 4.8 1.3 7.5 1.3 C10.2 1.3 12.8 2.8 13.7 6" fill="none" stroke="#e4e4e4" stroke-width="2.3"/><path d="M9.2 2.6 L6 8.2" stroke="#e4e4e4" stroke-width="1.5" stroke-linecap="round"/><circle cx="6.1" cy="8.6" r="1.2" fill="none" stroke="#e4e4e4" stroke-width="1"/></svg>
<svg class="a" style="left:264px;top:368px" width="15" height="15"><circle cx="4.6" cy="3.2" r="2.6" fill="none" stroke="#d8d8d8" stroke-width="1.1"/><circle cx="11.2" cy="4" r="2" fill="none" stroke="#d8d8d8" stroke-width="1.1"/><path d="M0.8 7.6 H9 V9.8 C9 12.2 7 13.6 4.9 13.6 C2.8 13.6 0.8 12.2 0.8 9.8 Z" fill="none" stroke="#d8d8d8" stroke-width="1.1"/><path d="M9 7.6 H13.8 V9.6 C13.8 11.2 12.6 12.4 11 12.4 H8.2" fill="none" stroke="#d8d8d8" stroke-width="1.1"/></svg>
<svg class="a" style="left:264px;top:404px" width="15" height="11"><path d="M0.5 1.5 H1.9 M0.5 5.5 H1.9 M0.5 9.5 H1.9" stroke="#e6e6e6" stroke-width="1.2"/><path d="M4 1.5 H14.5 M4 5.5 H14.5 M4 9.5 H14.5" stroke="#e6e6e6" stroke-width="1"/></svg>
<svg class="a" style="left:264px;top:436.5px" width="15" height="15"><path d="M5 2 C5 0.5 9 0.5 9 2 V3.2 L10.8 2.8 C12.8 2.3 13.8 4.3 12.3 5.7 L11.3 6.8 L12.3 7.9 C13.8 9.3 12.8 11.8 10.8 11.3 L9 10.9 V12.3 C9 14.3 5 14.3 5 12.3 V10.9 L3.2 11.3 C1.2 11.8 0.2 9.3 1.7 7.9 L2.7 6.8 L1.7 5.7 C0.2 4.3 1.2 2.3 3.2 2.8 L5 3.2 Z" fill="none" stroke="#d8d8d8" stroke-width="1.1"/></svg>
<svg class="a" style="left:264.3px;top:606.5px" width="14" height="14"><path d="M11.68,5.55 L13.21,5.93 L13.21,8.07 L11.68,8.45 L10.59,10.33 L11.03,11.84 L9.18,12.91 L8.09,11.78 L5.91,11.78 L4.82,12.91 L2.97,11.84 L3.41,10.33 L2.32,8.45 L0.79,8.07 L0.79,5.93 L2.32,5.55 L3.41,3.67 L2.97,2.16 L4.82,1.09 L5.91,2.22 L8.09,2.22 L9.18,1.09 L11.03,2.16 L10.59,3.67Z" fill="none" stroke="#d8d8d8" stroke-width="1.1" stroke-linejoin="round"/><circle cx="7" cy="7" r="2" fill="none" stroke="#d8d8d8" stroke-width="1.1"/></svg>
<div class="t" style="left:306.17px;top:200.00px;font-size:12.23px;font-weight:bold;color:#f2f2f2;transform:scaleX(0.9287);">Производительность</div>
<svg class="a" style="left:1107.5px;top:198px" width="14" height="14"><path d="M0.6 0.6 H5.3 V5.3 H0.6Z M5.3 0.6 H10.2 V5.3 H5.3Z M0.6 5.3 H5.3 V10.2 H0.6Z" fill="none" stroke="#d8d8d8" stroke-width="1.1"/><circle cx="9.7" cy="9.7" r="3.7" fill="#1b1b1b" stroke="#ececec" stroke-width="1.1"/><path d="M9.7 7.8 V11.6 M7.8 9.7 H11.6" stroke="#ececec" stroke-width="1.1"/></svg>
<div class="t" style="left:1128.10px;top:201.00px;font-size:10.40px;color:#e6e6e6;transform:scaleX(1.0043);">Запустить новую задачу</div>
<div class="a" style="left:1260px;top:192px;width:1px;height:25px;background:#2c2c2c"></div>
<div class="a" style="left:1272.8px;top:204.5px;width:2px;height:2px;border-radius:1px;background:#e0e0e0"></div><div class="a" style="left:1277.8px;top:204.5px;width:2px;height:2px;border-radius:1px;background:#e0e0e0"></div>
<div class="a" style="left:292.4px;top:225.5px;width:990px;height:1.1px;background:#2b2b2b"></div>
<div class="a" style="left:296.3px;top:232.8px;width:161px;height:52.5px;border-radius:4px;background:#2b2b2b"></div>
<div class="a" style="left:304px;top:240.9px;width:51.8px;height:34.3px;background:#2c98b2;border:1px solid #37aac6"></div>
<div class="t" style="left:364.54px;top:240.00px;font-size:14.06px;color:#f0f0f0;transform:scaleX(0.9632);">ЦП</div>
<div class="t" style="left:365.72px;top:257.00px;font-size:11.25px;color:#d8d8d8;transform:scaleX(0.8770);">100% 3,98 ГГц</div>
<div class="a" style="left:304px;top:292.8px;width:51.8px;height:34.2px;background:#2a2a2a;border:1px solid #313131"></div>
<div class="a" style="left:304px;top:320.5px;width:51.8px;height:6.5px;background:#6a7bd8"></div>
<div class="t" style="left:364.94px;top:293.00px;font-size:13.50px;color:#f0f0f0;transform:scaleX(0.9587);">Память</div>
<div class="t" style="left:366.25px;top:308.00px;font-size:11.25px;color:#d8d8d8;transform:scaleX(0.8544);">5,8/31,8 ГБ (18%)</div>
<div class="a" style="left:304.2px;top:345px;width:51.6px;height:39px;background:#2a2a2a;border:1px solid #303030"></div>
<div class="a" style="left:304.2px;top:382px;width:51.6px;height:1.4px;background:#2d6a67"></div>
<div class="a" style="left:360px;top:342px;width:100px;height:18px;overflow:hidden">
<div class="t" style="left:5.20px;top:3.00px;font-size:13.50px;color:#f0f0f0;transform:scaleX(0.9179);">Диск 0 (F: J: K:)</div>
</div>
<div class="t" style="left:364.84px;top:360.00px;font-size:10.54px;color:#d8d8d8;transform:scaleX(0.9636);">HDD</div>
<div class="t" style="left:365.80px;top:373.00px;font-size:10.82px;color:#d8d8d8;transform:scaleX(0.8750);">0%</div>
<div class="a" style="left:304.2px;top:402px;width:51.6px;height:39px;background:#2a2a2a;border:1px solid #303030"></div>
<div class="a" style="left:304.2px;top:439px;width:51.6px;height:1.4px;background:#2d6a67"></div>
<div class="a" style="left:360px;top:399px;width:100px;height:18px;overflow:hidden">
<div class="t" style="left:5.20px;top:3.00px;font-size:13.50px;color:#f0f0f0;transform:scaleX(0.9179);">Диск 1 (L: M: N:)</div>
</div>
<div class="t" style="left:364.84px;top:417.00px;font-size:10.54px;color:#d8d8d8;transform:scaleX(0.9636);">HDD</div>
<div class="t" style="left:365.80px;top:430.00px;font-size:10.82px;color:#d8d8d8;transform:scaleX(0.8750);">0%</div>
<div class="a" style="left:304.2px;top:459px;width:51.6px;height:39px;background:#2a2a2a;border:1px solid #303030"></div>
<div class="a" style="left:304.2px;top:496px;width:51.6px;height:1.4px;background:#2d6a67"></div>
<div class="a" style="left:360px;top:456px;width:100px;height:18px;overflow:hidden">
<div class="t" style="left:5.20px;top:3.00px;font-size:13.50px;color:#f0f0f0;transform:scaleX(0.9179);">Диск 2 (E: G: H: I:)</div>
</div>
<div class="t" style="left:364.84px;top:474.00px;font-size:10.54px;color:#d8d8d8;transform:scaleX(0.9636);">HDD</div>
<div class="t" style="left:365.80px;top:487.00px;font-size:10.82px;color:#d8d8d8;transform:scaleX(0.8750);">0%</div>
<div class="a" style="left:304.2px;top:516px;width:51.6px;height:39px;background:#2a2a2a;border:1px solid #303030"></div>
<div class="a" style="left:304.2px;top:553px;width:51.6px;height:1.4px;background:#2d6a67"></div>
<div class="a" style="left:360px;top:513px;width:100px;height:18px;overflow:hidden">
<div class="t" style="left:5.20px;top:3.00px;font-size:13.50px;color:#f0f0f0;transform:scaleX(0.9179);">Диск 3 (D:)</div>
</div>
<div class="t" style="left:364.84px;top:531.00px;font-size:10.54px;color:#d8d8d8;transform:scaleX(0.9636);">SSD</div>
<div class="t" style="left:365.80px;top:544.00px;font-size:10.82px;color:#d8d8d8;transform:scaleX(0.8750);">0%</div>
<div class="a" style="left:304.2px;top:573px;width:51.6px;height:39px;background:#2a2a2a;border:1px solid #303030"></div>
<div class="a" style="left:304.2px;top:610px;width:51.6px;height:1.4px;background:#2d6a67"></div>
<div class="a" style="left:360px;top:570px;width:100px;height:18px;overflow:hidden">
<div class="t" style="left:5.20px;top:3.00px;font-size:13.50px;color:#f0f0f0;transform:scaleX(0.9179);">Диск 4 (C:)</div>
</div>
<div class="t" style="left:364.84px;top:588.00px;font-size:10.54px;color:#d8d8d8;transform:scaleX(0.9636);">SSD</div>
<div class="t" style="left:365.80px;top:601.00px;font-size:10.82px;color:#d8d8d8;transform:scaleX(0.8750);">0%</div>
<div class="a" style="left:304.2px;top:630px;width:51.6px;height:4px;background:#2a2a2a"></div>
<div class="a" style="left:360px;top:626px;width:80px;height:7.5px;overflow:hidden">
<div class="t" style="left:4.28px;top:1.00px;font-size:13.50px;color:#f0f0f0;transform:scaleX(0.9179);">Ethernet</div>
</div>
<div class="a" style="left:466.5px;top:246.7px;width:1.8px;height:298px;border-radius:1px;background:#8c8c8c"></div>
<div class="t" style="left:495.92px;top:242.00px;font-size:24.18px;color:#f4f4f4;transform:scaleX(0.9875);-webkit-text-stroke:0.7px #1b1b1b;">ЦП</div>
<div class="t" style="left:1062.43px;top:251.00px;font-size:13.50px;color:#ececec;transform:scaleX(0.9734);">12th Gen Intel(R) Core(TM) i5-12400</div>
<div class="t" style="left:499.30px;top:274.00px;font-size:9.84px;color:#d2d2d2;transform:scaleX(0.9918);">% использования более 60 секунд</div>
<div class="t" style="left:1256.61px;top:274.00px;font-size:9.84px;color:#d2d2d2;transform:scaleX(0.9918);">100%</div>
<div class="a" style="left:499px;top:286px;width:790px;height:183.4px;background:#11151a"></div>
<svg class="a" style="left:499.3px;top:286px" width="191.8" height="57.9"><rect width="191.8" height="57.9" fill="#2a8ca6"/><path d="M19.2 0 V57.9" stroke="#2b8fa9" stroke-width="1"/><path d="M38.4 0 V57.9" stroke="#2b8fa9" stroke-width="1"/><path d="M57.5 0 V57.9" stroke="#2b8fa9" stroke-width="1"/><path d="M76.7 0 V57.9" stroke="#2b8fa9" stroke-width="1"/><path d="M95.9 0 V57.9" stroke="#2b8fa9" stroke-width="1"/><path d="M115.1 0 V57.9" stroke="#2b8fa9" stroke-width="1"/><path d="M134.3 0 V57.9" stroke="#2b8fa9" stroke-width="1"/><path d="M153.4 0 V57.9" stroke="#2b8fa9" stroke-width="1"/><path d="M172.6 0 V57.9" stroke="#2b8fa9" stroke-width="1"/><path d="M0 5.8 H191.8" stroke="#2b8fa9" stroke-width="1"/><path d="M0 11.6 H191.8" stroke="#2b8fa9" stroke-width="1"/><path d="M0 17.4 H191.8" stroke="#2b8fa9" stroke-width="1"/><path d="M0 23.2 H191.8" stroke="#2b8fa9" stroke-width="1"/><path d="M0 28.9 H191.8" stroke="#2b8fa9" stroke-width="1"/><path d="M0 34.7 H191.8" stroke="#2b8fa9" stroke-width="1"/><path d="M0 40.5 H191.8" stroke="#2b8fa9" stroke-width="1"/><path d="M0 46.3 H191.8" stroke="#2b8fa9" stroke-width="1"/><path d="M0 52.1 H191.8" stroke="#2b8fa9" stroke-width="1"/><path d="M0,57.9 L0.0,49.0 L6.5,47.6 L12.7,46.8 L16.7,51.5 L25.3,38.2 L31.5,49.0 L42.5,36.7 L49.5,46.8 L54.9,49.0 L61.2,39.8 L67.4,46.8 L72.1,36.7 L76.7,44.5 L81.5,31.2 L87.0,43.7 L90.9,35.9 L97.1,42.9 L103.3,46.8 L114.2,28.8 L118.1,46.8 L124.4,35.9 L130.7,47.6 L143.5,30.4 L149.4,43.7 L152.5,40.6 L157.2,46.8 L166.6,39.8 L172.7,46.0 L178.7,29.6 L184.5,46.8 L191.7,43.7 L191.8,57.9 Z" fill="#31abc8"/><rect x="0.5" y="0.5" width="190.8" height="56.9" fill="none" stroke="#2f9ab4"/></svg>
<svg class="a" style="left:695.2px;top:286px" width="191.8" height="57.9"><rect width="191.8" height="57.9" fill="#2a8ca6"/><path d="M19.2 0 V57.9" stroke="#2b8fa9" stroke-width="1"/><path d="M38.4 0 V57.9" stroke="#2b8fa9" stroke-width="1"/><path d="M57.5 0 V57.9" stroke="#2b8fa9" stroke-width="1"/><path d="M76.7 0 V57.9" stroke="#2b8fa9" stroke-width="1"/><path d="M95.9 0 V57.9" stroke="#2b8fa9" stroke-width="1"/><path d="M115.1 0 V57.9" stroke="#2b8fa9" stroke-width="1"/><path d="M134.3 0 V57.9" stroke="#2b8fa9" stroke-width="1"/><path d="M153.4 0 V57.9" stroke="#2b8fa9" stroke-width="1"/><path d="M172.6 0 V57.9" stroke="#2b8fa9" stroke-width="1"/><path d="M0 5.8 H191.8" stroke="#2b8fa9" stroke-width="1"/><path d="M0 11.6 H191.8" stroke="#2b8fa9" stroke-width="1"/><path d="M0 17.4 H191.8" stroke="#2b8fa9" stroke-width="1"/><path d="M0 23.2 H191.8" stroke="#2b8fa9" stroke-width="1"/><path d="M0 28.9 H191.8" stroke="#2b8fa9" stroke-width="1"/><path d="M0 34.7 H191.8" stroke="#2b8fa9" stroke-width="1"/><path d="M0 40.5 H191.8" stroke="#2b8fa9" stroke-width="1"/><path d="M0 46.3 H191.8" stroke="#2b8fa9" stroke-width="1"/><path d="M0 52.1 H191.8" stroke="#2b8fa9" stroke-width="1"/><path d="M0,57.9 L0.0,53.5 C0.8,53.6 3.6,54.5 4.8,54.6 C6.0,54.8 6.0,54.5 7.3,54.4 C8.7,54.2 11.0,53.7 12.7,53.7 C14.3,53.7 15.7,55.2 17.1,54.6 C18.5,54.0 20.0,50.2 21.2,50.2 C22.3,50.2 22.6,54.1 23.9,54.8 C25.1,55.4 27.1,55.1 28.8,54.1 C30.5,53.1 32.4,48.5 34.2,48.6 C36.1,48.7 38.0,53.7 39.9,54.7 C41.9,55.7 44.2,55.1 45.9,54.7 C47.5,54.2 48.4,52.6 49.9,52.0 C51.3,51.3 53.3,51.1 54.5,50.8 C55.8,50.6 56.1,50.0 57.2,50.5 C58.3,50.9 59.8,53.0 61.1,53.7 C62.5,54.4 63.8,55.0 65.3,54.8 C66.8,54.7 68.7,53.1 70.3,52.9 C72.0,52.8 73.5,53.9 75.2,54.2 C76.8,54.5 78.7,54.7 80.1,54.7 C81.4,54.6 82.0,53.8 83.4,53.9 C84.8,53.9 86.9,54.8 88.7,54.8 C90.5,54.8 92.7,54.0 94.1,53.9 C95.6,53.7 96.0,54.6 97.4,54.1 C98.8,53.7 101.2,51.1 102.6,51.3 C104.0,51.4 104.6,54.4 105.7,54.8 C106.8,55.2 108.2,53.7 109.2,53.6 C110.2,53.6 110.8,54.6 111.9,54.5 C112.9,54.4 114.1,53.0 115.3,53.0 C116.6,53.0 117.9,54.3 119.5,54.6 C121.2,54.8 123.5,54.5 125.3,54.5 C127.1,54.6 129.0,54.9 130.4,54.9 C131.8,54.8 132.7,55.2 133.8,54.2 C135.0,53.2 135.8,48.9 137.2,48.7 C138.5,48.5 140.3,53.1 141.8,52.9 C143.3,52.7 144.5,47.2 146.1,47.3 C147.7,47.4 149.9,52.5 151.4,53.6 C152.8,54.7 153.3,54.0 154.7,53.9 C156.0,53.8 157.6,53.3 159.4,53.0 C161.1,52.7 163.1,52.0 165.0,52.0 C166.8,52.0 168.9,52.8 170.5,53.0 C172.2,53.3 173.6,53.3 174.8,53.5 C176.1,53.7 176.7,54.2 178.1,54.4 C179.4,54.6 181.2,54.6 183.0,54.6 C184.7,54.6 187.1,54.6 188.6,54.4 C190.1,54.3 191.3,53.9 191.8,53.8 L191.8,57.9 Z" fill="#31abc8"/><rect x="0.5" y="0.5" width="190.8" height="56.9" fill="none" stroke="#2f9ab4"/></svg>
<svg class="a" style="left:891.1px;top:286px" width="191.8" height="57.9"><rect width="191.8" height="57.9" fill="#2a8ca6"/><path d="M19.2 0 V57.9" stroke="#2b8fa9" stroke-width="1"/><path d="M38.4 0 V57.9" stroke="#2b8fa9" stroke-width="1"/><path d="M57.5 0 V57.9" stroke="#2b8fa9" stroke-width="1"/><path d="M76.7 0 V57.9" stroke="#2b8fa9" stroke-width="1"/><path d="M95.9 0 V57.9" stroke="#2b8fa9" stroke-width="1"/><path d="M115.1 0 V57.9" stroke="#2b8fa9" stroke-width="1"/><path d="M134.3 0 V57.9" stroke="#2b8fa9" stroke-width="1"/><path d="M153.4 0 V57.9" stroke="#2b8fa9" stroke-width="1"/><path d="M172.6 0 V57.9" stroke="#2b8fa9" stroke-width="1"/><path d="M0 5.8 H191.8" stroke="#2b8fa9" stroke-width="1"/><path d="M0 11.6 H191.8" stroke="#2b8fa9" stroke-width="1"/><path d="M0 17.4 H191.8" stroke="#2b8fa9" stroke-width="1"/><path d="M0 23.2 H191.8" stroke="#2b8fa9" stroke-width="1"/><path d="M0 28.9 H191.8" stroke="#2b8fa9" stroke-width="1"/><path d="M0 34.7 H191.8" stroke="#2b8fa9" stroke-width="1"/><path d="M0 40.5 H191.8" stroke="#2b8fa9" stroke-width="1"/><path d="M0 46.3 H191.8" stroke="#2b8fa9" stroke-width="1"/><path d="M0 52.1 H191.8" stroke="#2b8fa9" stroke-width="1"/><path d="M0,57.9 L0.0,53.9 C0.8,53.8 3.6,53.4 4.9,53.2 C6.2,53.0 7.0,52.2 8.0,52.5 C9.1,52.7 10.1,54.7 11.3,54.6 C12.6,54.6 14.3,52.2 15.7,52.0 C17.1,51.9 18.6,53.3 19.7,53.7 C20.8,54.1 20.9,54.7 22.3,54.6 C23.6,54.5 26.0,53.6 27.8,53.3 C29.6,53.0 31.4,53.0 33.2,53.0 C35.0,53.0 36.9,53.1 38.5,53.2 C40.1,53.3 41.3,53.6 42.7,53.8 C44.0,53.9 45.4,54.6 46.7,54.0 C48.0,53.5 48.8,50.5 50.3,50.4 C51.8,50.4 54.0,52.8 55.6,53.5 C57.2,54.2 58.5,54.5 60.0,54.6 C61.6,54.8 63.5,54.6 64.9,54.5 C66.2,54.5 66.9,54.5 68.1,54.4 C69.3,54.3 71.0,54.1 72.2,54.1 C73.4,54.1 74.1,54.8 75.2,54.4 C76.2,54.0 77.5,52.0 78.5,51.8 C79.5,51.6 80.1,52.8 81.2,53.0 C82.3,53.2 84.0,53.5 85.1,53.0 C86.2,52.6 86.4,50.2 87.8,50.5 C89.1,50.7 91.6,54.1 93.2,54.6 C94.8,55.0 95.6,53.8 97.1,53.1 C98.7,52.4 100.9,50.1 102.4,50.3 C104.0,50.6 104.6,54.1 106.3,54.6 C107.9,55.1 110.6,53.6 112.2,53.5 C113.7,53.3 114.1,53.7 115.4,53.7 C116.7,53.7 118.6,53.3 120.0,53.4 C121.3,53.6 122.2,54.8 123.7,54.6 C125.1,54.4 127.3,52.4 128.6,52.2 C129.8,52.1 130.1,54.7 131.3,53.8 C132.5,52.9 134.4,46.9 135.7,46.7 C137.1,46.6 137.8,52.0 139.4,52.9 C141.0,53.8 143.8,51.7 145.4,52.0 C147.0,52.3 147.6,54.5 148.8,54.7 C150.1,55.0 151.9,53.4 153.0,53.2 C154.1,53.1 154.1,53.8 155.5,53.9 C156.9,54.0 159.6,53.8 161.4,54.0 C163.2,54.1 164.7,54.9 166.2,54.8 C167.8,54.7 169.2,53.7 170.5,53.4 C171.8,53.2 172.8,53.1 173.9,53.2 C175.0,53.3 176.2,54.0 177.3,54.2 C178.4,54.4 179.5,55.7 180.7,54.5 C181.8,53.3 183.3,47.0 184.4,46.9 C185.5,46.8 186.3,52.4 187.2,53.7 C188.1,55.0 188.9,54.4 189.7,54.5 C190.5,54.6 191.5,54.3 191.8,54.2 L191.8,57.9 Z" fill="#31abc8"/><rect x="0.5" y="0.5" width="190.8" height="56.9" fill="none" stroke="#2f9ab4"/></svg>
<svg class="a" style="left:1087px;top:286px" width="191.8" height="57.9"><rect width="191.8" height="57.9" fill="#2a8ca6"/><path d="M19.2 0 V57.9" stroke="#2b8fa9" stroke-width="1"/><path d="M38.4 0 V57.9" stroke="#2b8fa9" stroke-width="1"/><path d="M57.5 0 V57.9" stroke="#2b8fa9" stroke-width="1"/><path d="M76.7 0 V57.9" stroke="#2b8fa9" stroke-width="1"/><path d="M95.9 0 V57.9" stroke="#2b8fa9" stroke-width="1"/><path d="M115.1 0 V57.9" stroke="#2b8fa9" stroke-width="1"/><path d="M134.3 0 V57.9" stroke="#2b8fa9" stroke-width="1"/><path d="M153.4 0 V57.9" stroke="#2b8fa9" stroke-width="1"/><path d="M172.6 0 V57.9" stroke="#2b8fa9" stroke-width="1"/><path d="M0 5.8 H191.8" stroke="#2b8fa9" stroke-width="1"/><path d="M0 11.6 H191.8" stroke="#2b8fa9" stroke-width="1"/><path d="M0 17.4 H191.8" stroke="#2b8fa9" stroke-width="1"/><path d="M0 23.2 H191.8" stroke="#2b8fa9" stroke-width="1"/><path d="M0 28.9 H191.8" stroke="#2b8fa9" stroke-width="1"/><path d="M0 34.7 H191.8" stroke="#2b8fa9" stroke-width="1"/><path d="M0 40.5 H191.8" stroke="#2b8fa9" stroke-width="1"/><path d="M0 46.3 H191.8" stroke="#2b8fa9" stroke-width="1"/><path d="M0 52.1 H191.8" stroke="#2b8fa9" stroke-width="1"/><path d="M0,57.9 L0.0,54.2 C0.8,54.0 3.6,53.1 5.0,53.0 C6.4,52.9 7.0,53.3 8.4,53.4 C9.8,53.5 11.8,53.3 13.2,53.5 C14.7,53.7 15.9,54.6 17.1,54.7 C18.3,54.8 19.3,54.4 20.4,54.2 C21.5,54.0 22.7,53.7 23.8,53.6 C24.9,53.5 25.8,53.4 26.8,53.6 C27.8,53.7 28.8,54.9 29.9,54.7 C31.0,54.4 32.0,52.6 33.6,52.3 C35.2,52.0 37.8,52.8 39.5,52.9 C41.2,53.1 42.0,53.5 43.5,53.2 C45.0,52.9 46.8,51.2 48.4,51.1 C50.0,51.0 51.4,52.1 53.2,52.6 C54.9,53.2 57.1,54.9 58.7,54.5 C60.3,54.2 61.4,51.2 62.8,50.5 C64.2,49.8 65.9,49.7 67.1,50.4 C68.2,51.2 68.5,54.7 69.9,54.8 C71.2,55.0 73.6,51.5 75.0,51.3 C76.3,51.1 76.6,53.1 77.8,53.5 C79.0,54.0 80.8,53.7 82.2,53.9 C83.6,54.1 84.8,55.3 86.2,54.7 C87.5,54.1 88.7,50.7 90.3,50.3 C92.0,49.9 94.3,51.7 96.1,52.5 C97.9,53.2 99.4,54.6 101.1,54.9 C102.7,55.1 104.6,54.4 106.1,54.1 C107.5,53.7 108.6,52.9 109.8,53.0 C111.0,53.1 111.8,54.3 113.2,54.5 C114.6,54.8 116.5,55.6 117.9,54.4 C119.3,53.2 120.1,47.3 121.8,47.3 C123.4,47.3 125.7,53.2 127.7,54.3 C129.6,55.5 132.1,54.7 133.5,54.4 C134.9,54.1 135.1,52.3 136.1,52.3 C137.1,52.3 138.3,54.2 139.4,54.4 C140.5,54.5 141.6,53.1 142.8,53.1 C143.9,53.0 145.0,54.2 146.3,54.2 C147.6,54.2 149.2,53.2 150.8,53.0 C152.4,52.9 154.4,53.2 155.9,53.2 C157.4,53.2 158.3,52.8 159.7,53.0 C161.1,53.2 162.4,54.0 164.1,54.3 C165.8,54.5 167.9,54.4 169.8,54.4 C171.7,54.4 174.0,54.6 175.6,54.2 C177.1,53.9 177.6,52.6 179.0,52.3 C180.4,51.9 182.4,51.8 183.9,52.1 C185.4,52.4 186.7,53.8 188.0,54.1 C189.3,54.5 191.2,54.2 191.8,54.2 L191.8,57.9 Z" fill="#31abc8"/><rect x="0.5" y="0.5" width="190.8" height="56.9" fill="none" stroke="#2f9ab4"/></svg>
<svg class="a" style="left:499.3px;top:347.9px" width="191.8" height="57.9"><rect width="191.8" height="57.9" fill="#2a8ca6"/><path d="M19.2 0 V57.9" stroke="#2b8fa9" stroke-width="1"/><path d="M38.4 0 V57.9" stroke="#2b8fa9" stroke-width="1"/><path d="M57.5 0 V57.9" stroke="#2b8fa9" stroke-width="1"/><path d="M76.7 0 V57.9" stroke="#2b8fa9" stroke-width="1"/><path d="M95.9 0 V57.9" stroke="#2b8fa9" stroke-width="1"/><path d="M115.1 0 V57.9" stroke="#2b8fa9" stroke-width="1"/><path d="M134.3 0 V57.9" stroke="#2b8fa9" stroke-width="1"/><path d="M153.4 0 V57.9" stroke="#2b8fa9" stroke-width="1"/><path d="M172.6 0 V57.9" stroke="#2b8fa9" stroke-width="1"/><path d="M0 5.8 H191.8" stroke="#2b8fa9" stroke-width="1"/><path d="M0 11.6 H191.8" stroke="#2b8fa9" stroke-width="1"/><path d="M0 17.4 H191.8" stroke="#2b8fa9" stroke-width="1"/><path d="M0 23.2 H191.8" stroke="#2b8fa9" stroke-width="1"/><path d="M0 28.9 H191.8" stroke="#2b8fa9" stroke-width="1"/><path d="M0 34.7 H191.8" stroke="#2b8fa9" stroke-width="1"/><path d="M0 40.5 H191.8" stroke="#2b8fa9" stroke-width="1"/><path d="M0 46.3 H191.8" stroke="#2b8fa9" stroke-width="1"/><path d="M0 52.1 H191.8" stroke="#2b8fa9" stroke-width="1"/><path d="M0,57.9 L0.0,52.5 C0.4,52.8 1.1,55.9 2.5,54.6 C4.0,53.3 6.7,44.8 8.5,44.5 C10.3,44.2 12.0,51.4 13.4,52.9 C14.7,54.4 15.6,53.2 16.7,53.5 C17.9,53.7 18.7,54.5 20.2,54.4 C21.7,54.4 24.2,53.4 25.7,53.3 C27.2,53.2 27.9,53.8 29.0,53.9 C30.1,54.0 31.3,54.0 32.3,54.1 C33.3,54.1 33.9,54.3 35.1,54.2 C36.3,54.1 38.2,53.8 39.6,53.6 C41.0,53.4 42.1,52.7 43.5,52.9 C44.8,53.1 46.5,55.3 47.7,54.9 C48.9,54.4 49.4,50.2 50.7,50.1 C52.0,50.0 54.1,53.6 55.6,54.3 C57.1,55.1 58.6,56.0 59.8,54.7 C61.0,53.4 61.4,46.7 62.7,46.6 C64.1,46.5 66.6,53.5 68.2,54.1 C69.8,54.7 71.1,50.4 72.4,50.1 C73.8,49.7 74.7,51.5 76.2,52.0 C77.7,52.5 80.1,52.6 81.6,53.1 C83.1,53.6 83.7,54.6 85.2,54.8 C86.8,54.9 89.5,54.1 90.9,54.0 C92.4,53.9 92.4,54.2 93.8,54.1 C95.2,54.1 97.8,55.0 99.3,53.4 C100.8,51.8 101.2,44.8 102.8,44.4 C104.3,44.1 106.9,49.7 108.6,51.4 C110.2,53.1 111.6,54.4 112.8,54.8 C113.9,55.2 114.3,53.9 115.5,53.8 C116.6,53.6 118.1,53.6 119.6,53.7 C121.1,53.9 123.3,54.7 124.5,54.7 C125.8,54.7 126.0,53.8 127.0,53.6 C128.1,53.4 129.4,53.6 130.9,53.7 C132.3,53.8 134.1,54.4 135.8,54.3 C137.6,54.2 139.4,54.6 141.2,53.1 C143.1,51.7 145.3,45.4 146.8,45.6 C148.4,45.7 149.4,53.1 150.6,53.9 C151.7,54.6 152.5,50.0 153.6,49.9 C154.7,49.9 156.0,52.9 157.2,53.5 C158.4,54.2 159.4,53.5 160.8,53.7 C162.3,53.9 164.4,54.8 165.8,54.8 C167.1,54.7 167.9,53.6 168.9,53.4 C169.9,53.3 170.7,53.5 171.8,53.7 C172.9,53.9 174.4,54.7 175.4,54.6 C176.5,54.6 177.1,53.7 178.3,53.4 C179.5,53.2 181.3,52.8 182.7,53.1 C184.1,53.3 185.1,55.2 186.6,54.9 C188.1,54.5 190.9,51.6 191.8,50.9 L191.8,57.9 Z" fill="#31abc8"/><rect x="0.5" y="0.5" width="190.8" height="56.9" fill="none" stroke="#2f9ab4"/></svg>
<svg class="a" style="left:695.2px;top:347.9px" width="191.8" height="57.9"><rect width="191.8" height="57.9" fill="#2a8ca6"/><path d="M19.2 0 V57.9" stroke="#2b8fa9" stroke-width="1"/><path d="M38.4 0 V57.9" stroke="#2b8fa9" stroke-width="1"/><path d="M57.5 0 V57.9" stroke="#2b8fa9" stroke-width="1"/><path d="M76.7 0 V57.9" stroke="#2b8fa9" stroke-width="1"/><path d="M95.9 0 V57.9" stroke="#2b8fa9" stroke-width="1"/><path d="M115.1 0 V57.9" stroke="#2b8fa9" stroke-width="1"/><path d="M134.3 0 V57.9" stroke="#2b8fa9" stroke-width="1"/><path d="M153.4 0 V57.9" stroke="#2b8fa9" stroke-width="1"/><path d="M172.6 0 V57.9" stroke="#2b8fa9" stroke-width="1"/><path d="M0 5.8 H191.8" stroke="#2b8fa9" stroke-width="1"/><path d="M0 11.6 H191.8" stroke="#2b8fa9" stroke-width="1"/><path d="M0 17.4 H191.8" stroke="#2b8fa9" stroke-width="1"/><path d="M0 23.2 H191.8" stroke="#2b8fa9" stroke-width="1"/><path d="M0 28.9 H191.8" stroke="#2b8fa9" stroke-width="1"/><path d="M0 34.7 H191.8" stroke="#2b8fa9" stroke-width="1"/><path d="M0 40.5 H191.8" stroke="#2b8fa9" stroke-width="1"/><path d="M0 46.3 H191.8" stroke="#2b8fa9" stroke-width="1"/><path d="M0 52.1 H191.8" stroke="#2b8fa9" stroke-width="1"/><path d="M0,57.9 L0.0,53.7 C0.7,53.7 2.8,53.9 4.2,54.0 C5.5,54.1 6.7,55.5 8.1,54.4 C9.6,53.3 11.4,48.0 12.8,47.4 C14.2,46.8 15.3,49.7 16.5,50.7 C17.7,51.6 18.9,52.6 20.1,53.0 C21.3,53.4 22.1,54.3 23.5,53.3 C24.9,52.2 26.7,46.4 28.3,46.6 C29.9,46.8 31.6,53.3 33.0,54.5 C34.4,55.6 35.4,53.5 36.6,53.3 C37.8,53.2 38.7,53.4 40.3,53.6 C41.9,53.9 44.2,54.9 46.1,54.8 C48.1,54.8 50.3,53.7 52.0,53.3 C53.7,52.9 55.1,52.2 56.4,52.4 C57.7,52.7 58.5,54.4 59.9,54.8 C61.4,55.2 63.2,55.2 64.9,54.9 C66.6,54.6 68.7,53.2 70.3,53.1 C71.9,52.9 73.0,53.7 74.5,54.0 C76.0,54.3 77.9,55.2 79.1,54.9 C80.4,54.5 81.0,51.9 82.1,51.7 C83.3,51.5 84.7,53.2 85.9,53.6 C87.2,53.9 88.2,53.9 89.8,53.9 C91.5,53.9 93.8,53.8 95.7,53.6 C97.5,53.4 99.7,52.7 101.0,52.6 C102.4,52.5 102.6,52.5 103.9,52.9 C105.1,53.2 106.9,54.6 108.5,54.7 C110.1,54.8 112.1,53.4 113.5,53.4 C114.8,53.3 115.5,55.6 116.5,54.4 C117.5,53.2 118.1,46.6 119.6,46.3 C121.1,46.0 123.7,52.4 125.3,52.5 C126.9,52.5 127.7,46.2 129.2,46.6 C130.7,47.0 133.0,54.1 134.2,54.8 C135.5,55.5 135.5,50.9 136.8,50.9 C138.2,50.9 141.1,54.1 142.6,54.7 C144.1,55.3 144.8,54.9 145.8,54.7 C146.9,54.4 147.7,53.5 148.7,53.2 C149.8,53.0 150.9,53.3 152.1,53.1 C153.3,53.0 154.6,52.3 156.1,52.3 C157.6,52.4 159.6,52.8 160.9,53.2 C162.3,53.6 163.0,54.6 164.2,54.9 C165.3,55.1 166.7,54.7 167.7,54.7 C168.8,54.6 169.3,54.4 170.5,54.3 C171.7,54.2 173.3,54.0 174.7,54.0 C176.2,53.9 178.1,54.0 179.3,53.9 C180.5,53.9 180.8,53.6 182.1,53.6 C183.4,53.6 185.5,53.8 187.1,54.0 C188.7,54.2 191.0,54.7 191.8,54.8 L191.8,57.9 Z" fill="#31abc8"/><rect x="0.5" y="0.5" width="190.8" height="56.9" fill="none" stroke="#2f9ab4"/></svg>
<svg class="a" style="left:891.1px;top:347.9px" width="191.8" height="57.9"><rect width="191.8" height="57.9" fill="#2a8ca6"/><path d="M19.2 0 V57.9" stroke="#2b8fa9" stroke-width="1"/><path d="M38.4 0 V57.9" stroke="#2b8fa9" stroke-width="1"/><path d="M57.5 0 V57.9" stroke="#2b8fa9" stroke-width="1"/><path d="M76.7 0 V57.9" stroke="#2b8fa9" stroke-width="1"/><path d="M95.9 0 V57.9" stroke="#2b8fa9" stroke-width="1"/><path d="M115.1 0 V57.9" stroke="#2b8fa9" stroke-width="1"/><path d="M134.3 0 V57.9" stroke="#2b8fa9" stroke-width="1"/><path d="M153.4 0 V57.9" stroke="#2b8fa9" stroke-width="1"/><path d="M172.6 0 V57.9" stroke="#2b8fa9" stroke-width="1"/><path d="M0 5.8 H191.8" stroke="#2b8fa9" stroke-width="1"/><path d="M0 11.6 H191.8" stroke="#2b8fa9" stroke-width="1"/><path d="M0 17.4 H191.8" stroke="#2b8fa9" stroke-width="1"/><path d="M0 23.2 H191.8" stroke="#2b8fa9" stroke-width="1"/><path d="M0 28.9 H191.8" stroke="#2b8fa9" stroke-width="1"/><path d="M0 34.7 H191.8" stroke="#2b8fa9" stroke-width="1"/><path d="M0 40.5 H191.8" stroke="#2b8fa9" stroke-width="1"/><path d="M0 46.3 H191.8" stroke="#2b8fa9" stroke-width="1"/><path d="M0 52.1 H191.8" stroke="#2b8fa9" stroke-width="1"/><path d="M0,57.9 L0.0,53.4 C0.9,53.5 3.6,54.3 5.3,54.3 C7.1,54.4 9.2,54.8 10.5,53.6 C11.8,52.4 12.1,46.9 13.4,47.0 C14.7,47.0 17.0,52.9 18.5,53.9 C20.0,54.9 20.9,52.9 22.1,53.0 C23.4,53.2 24.5,54.5 26.0,54.8 C27.6,55.0 29.6,54.9 31.4,54.6 C33.1,54.3 35.0,53.2 36.3,53.0 C37.7,52.7 38.2,52.8 39.6,53.1 C40.9,53.4 42.5,54.8 44.3,54.7 C46.1,54.7 48.6,53.2 50.1,52.9 C51.6,52.7 51.6,54.3 53.1,53.3 C54.5,52.3 57.4,46.9 58.8,47.0 C60.2,47.2 60.1,53.1 61.5,54.2 C62.9,55.2 65.4,53.8 67.3,53.4 C69.2,52.9 71.0,51.1 72.9,51.2 C74.8,51.4 77.2,53.6 78.7,54.2 C80.3,54.7 80.8,54.6 82.2,54.5 C83.5,54.4 85.5,54.0 86.8,53.8 C88.0,53.6 88.6,53.2 89.7,53.1 C90.8,52.9 92.0,52.8 93.4,53.1 C94.7,53.4 96.3,54.7 97.9,54.9 C99.5,55.0 101.6,54.2 103.0,54.0 C104.4,53.7 105.3,54.1 106.5,53.4 C107.6,52.8 108.5,51.2 110.1,49.9 C111.6,48.7 114.0,45.5 115.7,46.1 C117.5,46.7 118.8,52.1 120.6,53.4 C122.4,54.8 125.0,53.9 126.5,54.1 C128.0,54.3 128.7,55.2 129.7,54.6 C130.7,54.0 131.4,50.6 132.6,50.4 C133.8,50.1 135.3,54.1 136.9,53.1 C138.6,52.0 140.9,44.2 142.3,44.3 C143.6,44.3 143.8,51.5 145.1,53.2 C146.4,55.0 148.6,54.6 149.9,54.7 C151.2,54.9 151.5,54.4 152.7,54.4 C153.9,54.4 155.8,54.7 157.1,54.6 C158.4,54.5 159.4,54.1 160.6,53.9 C161.8,53.8 163.1,54.0 164.5,53.8 C165.8,53.6 167.2,53.3 168.8,53.0 C170.4,52.7 172.5,51.6 173.9,51.9 C175.3,52.3 175.7,54.5 177.1,54.8 C178.5,55.2 180.4,54.2 182.2,54.1 C184.0,53.9 186.2,53.8 187.8,53.7 C189.4,53.7 191.1,53.7 191.8,53.7 L191.8,57.9 Z" fill="#31abc8"/><rect x="0.5" y="0.5" width="190.8" height="56.9" fill="none" stroke="#2f9ab4"/></svg>
<svg class="a" style="left:1087px;top:347.9px" width="191.8" height="57.9"><rect width="191.8" height="57.9" fill="#2a8ca6"/><path d="M19.2 0 V57.9" stroke="#2b8fa9" stroke-width="1"/><path d="M38.4 0 V57.9" stroke="#2b8fa9" stroke-width="1"/><path d="M57.5 0 V57.9" stroke="#2b8fa9" stroke-width="1"/><path d="M76.7 0 V57.9" stroke="#2b8fa9" stroke-width="1"/><path d="M95.9 0 V57.9" stroke="#2b8fa9" stroke-width="1"/><path d="M115.1 0 V57.9" stroke="#2b8fa9" stroke-width="1"/><path d="M134.3 0 V57.9" stroke="#2b8fa9" stroke-width="1"/><path d="M153.4 0 V57.9" stroke="#2b8fa9" stroke-width="1"/><path d="M172.6 0 V57.9" stroke="#2b8fa9" stroke-width="1"/><path d="M0 5.8 H191.8" stroke="#2b8fa9" stroke-width="1"/><path d="M0 11.6 H191.8" stroke="#2b8fa9" stroke-width="1"/><path d="M0 17.4 H191.8" stroke="#2b8fa9" stroke-width="1"/><path d="M0 23.2 H191.8" stroke="#2b8fa9" stroke-width="1"/><path d="M0 28.9 H191.8" stroke="#2b8fa9" stroke-width="1"/><path d="M0 34.7 H191.8" stroke="#2b8fa9" stroke-width="1"/><path d="M0 40.5 H191.8" stroke="#2b8fa9" stroke-width="1"/><path d="M0 46.3 H191.8" stroke="#2b8fa9" stroke-width="1"/><path d="M0 52.1 H191.8" stroke="#2b8fa9" stroke-width="1"/><path d="M0,57.9 L0.0,54.0 C0.8,54.1 3.3,54.5 4.8,54.5 C6.3,54.5 7.6,54.0 9.0,53.9 C10.4,53.9 11.6,54.5 13.1,54.4 C14.6,54.3 16.4,53.8 18.1,53.6 C19.8,53.3 21.9,53.5 23.3,53.0 C24.7,52.5 25.3,51.1 26.6,50.7 C27.9,50.3 29.5,50.2 31.1,50.9 C32.8,51.5 35.2,55.6 36.7,54.5 C38.2,53.3 39.1,44.1 40.2,44.0 C41.4,43.9 42.2,52.3 43.5,53.8 C44.8,55.4 46.6,53.1 48.1,53.2 C49.6,53.4 51.2,54.4 52.7,54.7 C54.2,54.9 55.4,54.6 56.9,54.6 C58.4,54.6 60.4,54.7 61.8,54.6 C63.1,54.5 63.8,54.0 65.0,54.0 C66.2,54.0 67.4,54.7 68.9,54.7 C70.4,54.7 72.4,54.1 73.9,53.8 C75.3,53.6 76.2,53.5 77.6,53.3 C78.9,53.0 80.7,52.8 82.0,52.5 C83.2,52.1 83.8,51.3 85.0,51.0 C86.2,50.6 87.9,49.8 89.4,50.2 C90.9,50.6 92.5,52.8 94.1,53.3 C95.7,53.7 97.7,53.0 99.0,52.9 C100.3,52.9 100.8,52.9 102.0,53.1 C103.2,53.4 104.8,54.4 106.1,54.5 C107.5,54.7 108.6,54.5 110.1,54.1 C111.6,53.7 113.3,51.8 115.0,51.9 C116.8,52.0 118.6,54.2 120.5,54.6 C122.4,55.1 124.7,55.2 126.5,54.9 C128.2,54.5 129.4,52.5 131.0,52.4 C132.6,52.3 134.5,53.8 136.1,54.0 C137.6,54.3 139.2,54.1 140.4,54.0 C141.6,53.9 142.1,53.4 143.2,53.4 C144.4,53.3 145.9,53.7 147.2,53.7 C148.6,53.6 149.7,53.4 151.4,53.1 C153.0,52.9 155.2,52.3 157.0,52.4 C158.8,52.4 160.8,53.8 162.3,53.4 C163.7,53.1 164.3,50.4 165.8,50.4 C167.4,50.4 169.6,53.0 171.6,53.4 C173.5,53.9 175.9,53.5 177.5,53.0 C179.0,52.5 179.5,50.1 180.9,50.4 C182.3,50.6 184.4,53.9 185.8,54.6 C187.2,55.4 188.4,55.0 189.4,54.8 C190.4,54.5 191.4,53.3 191.8,53.0 L191.8,57.9 Z" fill="#31abc8"/><rect x="0.5" y="0.5" width="190.8" height="56.9" fill="none" stroke="#2f9ab4"/></svg>
<svg class="a" style="left:499.3px;top:410px" width="191.8" height="59.4"><rect width="191.8" height="59.4" fill="#2a8ca6"/><path d="M19.2 0 V59.4" stroke="#2b8fa9" stroke-width="1"/><path d="M38.4 0 V59.4" stroke="#2b8fa9" stroke-width="1"/><path d="M57.5 0 V59.4" stroke="#2b8fa9" stroke-width="1"/><path d="M76.7 0 V59.4" stroke="#2b8fa9" stroke-width="1"/><path d="M95.9 0 V59.4" stroke="#2b8fa9" stroke-width="1"/><path d="M115.1 0 V59.4" stroke="#2b8fa9" stroke-width="1"/><path d="M134.3 0 V59.4" stroke="#2b8fa9" stroke-width="1"/><path d="M153.4 0 V59.4" stroke="#2b8fa9" stroke-width="1"/><path d="M172.6 0 V59.4" stroke="#2b8fa9" stroke-width="1"/><path d="M0 5.9 H191.8" stroke="#2b8fa9" stroke-width="1"/><path d="M0 11.9 H191.8" stroke="#2b8fa9" stroke-width="1"/><path d="M0 17.8 H191.8" stroke="#2b8fa9" stroke-width="1"/><path d="M0 23.8 H191.8" stroke="#2b8fa9" stroke-width="1"/><path d="M0 29.7 H191.8" stroke="#2b8fa9" stroke-width="1"/><path d="M0 35.6 H191.8" stroke="#2b8fa9" stroke-width="1"/><path d="M0 41.6 H191.8" stroke="#2b8fa9" stroke-width="1"/><path d="M0 47.5 H191.8" stroke="#2b8fa9" stroke-width="1"/><path d="M0 53.5 H191.8" stroke="#2b8fa9" stroke-width="1"/><path d="M0,59.4 L0.0,54.5 C0.9,54.7 3.7,55.2 5.2,55.4 C6.8,55.6 8.0,55.7 9.1,55.8 C10.3,55.9 11.0,55.8 12.1,55.9 C13.3,55.9 14.6,56.3 15.8,56.2 C17.0,56.1 18.3,55.7 19.4,55.3 C20.6,54.9 21.4,53.8 22.6,53.8 C23.9,53.7 25.4,54.5 27.0,54.9 C28.7,55.3 30.6,56.1 32.3,56.2 C34.1,56.3 35.7,55.9 37.4,55.6 C39.0,55.3 40.5,54.8 42.2,54.6 C43.9,54.4 46.2,54.4 47.6,54.5 C49.1,54.6 49.5,54.7 50.9,54.9 C52.4,55.2 54.6,56.6 56.2,56.1 C57.9,55.7 59.7,52.4 60.9,52.3 C62.1,52.2 62.5,54.9 63.5,55.4 C64.4,56.0 65.3,55.5 66.4,55.4 C67.5,55.3 68.6,54.8 70.2,54.7 C71.7,54.5 74.2,54.7 75.8,54.3 C77.4,53.9 78.4,52.4 79.6,52.3 C80.8,52.2 81.8,53.0 83.0,53.5 C84.2,54.1 85.7,55.0 86.9,55.5 C88.2,55.9 89.4,56.4 90.5,56.3 C91.6,56.2 92.7,55.5 93.7,54.9 C94.7,54.3 95.3,54.0 96.6,52.9 C97.8,51.8 100.0,48.0 101.4,48.2 C102.7,48.4 103.7,52.6 104.8,53.9 C106.0,55.2 107.0,56.0 108.3,56.2 C109.7,56.4 111.8,55.2 113.0,55.0 C114.2,54.9 114.9,55.1 115.7,55.1 C116.6,55.1 116.9,55.1 118.3,55.1 C119.7,55.1 122.4,55.1 124.1,55.3 C125.8,55.4 127.2,56.5 128.7,56.0 C130.1,55.4 131.4,52.4 132.9,52.1 C134.4,51.7 136.2,53.1 137.7,53.8 C139.2,54.5 140.7,55.8 142.1,56.1 C143.4,56.5 144.2,56.2 145.7,55.9 C147.2,55.6 149.6,54.5 151.3,54.5 C153.0,54.5 154.5,55.7 156.0,55.8 C157.5,56.0 159.1,55.4 160.3,55.4 C161.5,55.5 161.9,56.1 163.0,56.1 C164.2,56.1 165.5,55.5 167.1,55.4 C168.7,55.3 171.1,55.4 172.7,55.5 C174.2,55.5 175.2,55.8 176.5,55.7 C177.8,55.5 179.4,54.5 180.5,54.5 C181.7,54.4 182.2,56.3 183.4,55.3 C184.5,54.4 186.1,48.6 187.3,48.6 C188.6,48.6 190.2,54.0 190.9,55.2 C191.7,56.4 191.7,55.7 191.8,55.9 L191.8,59.4 Z" fill="#31abc8"/><rect x="0.5" y="0.5" width="190.8" height="58.4" fill="none" stroke="#2f9ab4"/></svg>
<svg class="a" style="left:695.2px;top:410px" width="191.8" height="59.4"><rect width="191.8" height="59.4" fill="#2a8ca6"/><path d="M19.2 0 V59.4" stroke="#2b8fa9" stroke-width="1"/><path d="M38.4 0 V59.4" stroke="#2b8fa9" stroke-width="1"/><path d="M57.5 0 V59.4" stroke="#2b8fa9" stroke-width="1"/><path d="M76.7 0 V59.4" stroke="#2b8fa9" stroke-width="1"/><path d="M95.9 0 V59.4" stroke="#2b8fa9" stroke-width="1"/><path d="M115.1 0 V59.4" stroke="#2b8fa9" stroke-width="1"/><path d="M134.3 0 V59.4" stroke="#2b8fa9" stroke-width="1"/><path d="M153.4 0 V59.4" stroke="#2b8fa9" stroke-width="1"/><path d="M172.6 0 V59.4" stroke="#2b8fa9" stroke-width="1"/><path d="M0 5.9 H191.8" stroke="#2b8fa9" stroke-width="1"/><path d="M0 11.9 H191.8" stroke="#2b8fa9" stroke-width="1"/><path d="M0 17.8 H191.8" stroke="#2b8fa9" stroke-width="1"/><path d="M0 23.8 H191.8" stroke="#2b8fa9" stroke-width="1"/><path d="M0 29.7 H191.8" stroke="#2b8fa9" stroke-width="1"/><path d="M0 35.6 H191.8" stroke="#2b8fa9" stroke-width="1"/><path d="M0 41.6 H191.8" stroke="#2b8fa9" stroke-width="1"/><path d="M0 47.5 H191.8" stroke="#2b8fa9" stroke-width="1"/><path d="M0 53.5 H191.8" stroke="#2b8fa9" stroke-width="1"/><path d="M0,59.4 L0.0,54.1 C0.8,54.2 3.5,54.5 4.9,54.6 C6.3,54.7 6.8,54.3 8.3,54.6 C9.8,54.8 12.3,55.8 13.9,56.1 C15.4,56.3 16.5,56.3 17.8,56.2 C19.1,56.1 20.3,55.8 21.4,55.5 C22.6,55.2 23.5,54.6 24.7,54.6 C25.8,54.5 26.8,54.9 28.3,55.1 C29.8,55.4 32.0,57.1 33.6,56.2 C35.3,55.4 36.9,50.0 38.2,49.9 C39.4,49.9 40.0,55.1 41.3,55.8 C42.7,56.5 45.0,54.2 46.2,54.0 C47.5,53.9 47.8,54.6 48.8,54.7 C49.8,54.7 50.7,54.1 52.1,54.4 C53.4,54.6 55.3,55.9 56.8,56.1 C58.4,56.3 60.3,55.6 61.6,55.5 C62.9,55.4 63.5,55.9 64.6,55.3 C65.8,54.6 67.1,51.8 68.7,51.6 C70.2,51.5 72.5,53.6 74.2,54.4 C75.9,55.2 77.2,56.0 78.7,56.2 C80.2,56.4 81.6,55.5 83.3,55.5 C85.1,55.5 87.4,57.6 89.3,56.2 C91.2,54.8 93.4,47.4 94.9,47.1 C96.4,46.9 97.2,53.0 98.5,54.5 C99.8,56.0 101.3,56.5 102.9,56.3 C104.4,56.0 106.3,53.7 107.7,53.0 C109.1,52.3 110.3,51.6 111.4,52.2 C112.4,52.7 112.9,55.5 114.2,56.2 C115.5,56.9 117.8,56.9 119.0,56.3 C120.2,55.8 120.8,54.4 121.6,52.9 C122.5,51.3 123.0,47.0 124.1,47.1 C125.3,47.2 127.3,52.0 128.5,53.5 C129.7,54.9 130.4,55.6 131.4,55.6 C132.5,55.7 133.6,53.9 134.7,53.7 C135.8,53.6 136.9,54.2 138.3,54.6 C139.6,55.1 141.7,56.2 143.0,56.4 C144.3,56.6 144.7,55.7 146.2,55.6 C147.6,55.5 150.1,55.9 151.6,55.8 C153.2,55.7 154.3,55.2 155.4,55.0 C156.5,54.9 157.2,54.5 158.3,54.6 C159.4,54.7 160.5,55.3 162.1,55.6 C163.6,55.9 165.8,56.9 167.5,56.2 C169.2,55.5 170.4,51.9 172.0,51.6 C173.6,51.4 175.4,54.0 177.0,54.6 C178.5,55.1 180.1,54.9 181.4,55.0 C182.6,55.0 183.5,54.5 184.5,54.7 C185.5,54.9 186.2,56.2 187.4,56.3 C188.6,56.5 191.1,55.7 191.8,55.6 L191.8,59.4 Z" fill="#31abc8"/><rect x="0.5" y="0.5" width="190.8" height="58.4" fill="none" stroke="#2f9ab4"/></svg>
<svg class="a" style="left:891.1px;top:410px" width="191.8" height="59.4"><rect width="191.8" height="59.4" fill="#2a8ca6"/><path d="M19.2 0 V59.4" stroke="#2b8fa9" stroke-width="1"/><path d="M38.4 0 V59.4" stroke="#2b8fa9" stroke-width="1"/><path d="M57.5 0 V59.4" stroke="#2b8fa9" stroke-width="1"/><path d="M76.7 0 V59.4" stroke="#2b8fa9" stroke-width="1"/><path d="M95.9 0 V59.4" stroke="#2b8fa9" stroke-width="1"/><path d="M115.1 0 V59.4" stroke="#2b8fa9" stroke-width="1"/><path d="M134.3 0 V59.4" stroke="#2b8fa9" stroke-width="1"/><path d="M153.4 0 V59.4" stroke="#2b8fa9" stroke-width="1"/><path d="M172.6 0 V59.4" stroke="#2b8fa9" stroke-width="1"/><path d="M0 5.9 H191.8" stroke="#2b8fa9" stroke-width="1"/><path d="M0 11.9 H191.8" stroke="#2b8fa9" stroke-width="1"/><path d="M0 17.8 H191.8" stroke="#2b8fa9" stroke-width="1"/><path d="M0 23.8 H191.8" stroke="#2b8fa9" stroke-width="1"/><path d="M0 29.7 H191.8" stroke="#2b8fa9" stroke-width="1"/><path d="M0 35.6 H191.8" stroke="#2b8fa9" stroke-width="1"/><path d="M0 41.6 H191.8" stroke="#2b8fa9" stroke-width="1"/><path d="M0 47.5 H191.8" stroke="#2b8fa9" stroke-width="1"/><path d="M0 53.5 H191.8" stroke="#2b8fa9" stroke-width="1"/><path d="M0,59.4 L0.0,55.6 C0.8,55.5 3.6,55.6 4.9,55.4 C6.3,55.3 6.9,54.7 8.2,54.8 C9.4,54.9 11.3,55.9 12.5,55.9 C13.6,56.0 14.1,55.2 15.0,55.2 C15.9,55.2 16.7,57.6 17.7,55.9 C18.7,54.3 19.6,45.5 21.0,45.4 C22.4,45.3 24.8,53.5 26.1,55.2 C27.4,56.8 27.8,55.3 28.7,55.4 C29.7,55.5 30.7,55.5 31.6,55.7 C32.6,55.8 33.2,56.2 34.7,56.2 C36.1,56.1 38.9,55.3 40.4,55.3 C42.0,55.3 43.1,55.9 44.1,56.0 C45.2,56.1 45.5,56.7 46.8,55.9 C48.1,55.2 50.2,51.7 52.0,51.5 C53.8,51.3 55.9,54.1 57.6,54.9 C59.3,55.7 60.7,56.0 62.2,56.2 C63.6,56.3 64.7,56.1 66.3,56.0 C68.0,55.9 70.5,55.6 72.1,55.6 C73.6,55.5 74.2,55.5 75.8,55.6 C77.5,55.8 80.3,56.5 81.8,56.3 C83.3,56.1 83.5,54.6 84.6,54.4 C85.8,54.2 87.3,55.6 88.9,55.3 C90.4,55.0 92.4,52.5 94.0,52.6 C95.6,52.7 97.2,55.7 98.4,56.0 C99.7,56.4 100.4,54.6 101.5,54.5 C102.7,54.5 104.2,56.2 105.2,55.8 C106.3,55.4 106.8,52.1 108.1,52.0 C109.5,51.8 111.6,54.6 113.3,55.0 C115.0,55.5 116.7,54.6 118.2,54.5 C119.7,54.4 120.7,54.3 122.1,54.5 C123.5,54.6 125.3,55.9 126.7,55.4 C128.1,55.0 129.4,52.3 130.5,51.8 C131.6,51.2 132.2,51.5 133.6,52.0 C134.9,52.5 137.5,54.1 138.8,54.7 C140.1,55.4 140.4,55.9 141.5,55.8 C142.6,55.7 144.2,54.4 145.4,54.2 C146.7,54.0 147.6,54.1 149.1,54.4 C150.6,54.7 152.4,55.8 154.2,55.9 C156.1,56.0 158.7,55.6 160.1,54.9 C161.5,54.3 161.4,51.8 162.7,51.9 C164.0,51.9 166.4,54.7 168.0,55.2 C169.5,55.7 170.7,54.6 172.0,54.7 C173.2,54.8 174.1,57.1 175.5,55.8 C177.0,54.6 178.9,48.4 180.7,47.0 C182.6,45.6 184.8,46.1 186.6,47.4 C188.3,48.8 190.4,54.1 191.3,55.2 C192.2,56.4 191.7,54.6 191.8,54.5 L191.8,59.4 Z" fill="#31abc8"/><rect x="0.5" y="0.5" width="190.8" height="58.4" fill="none" stroke="#2f9ab4"/></svg>
<svg class="a" style="left:1087px;top:410px" width="191.8" height="59.4"><rect width="191.8" height="59.4" fill="#2a8ca6"/><path d="M19.2 0 V59.4" stroke="#2b8fa9" stroke-width="1"/><path d="M38.4 0 V59.4" stroke="#2b8fa9" stroke-width="1"/><path d="M57.5 0 V59.4" stroke="#2b8fa9" stroke-width="1"/><path d="M76.7 0 V59.4" stroke="#2b8fa9" stroke-width="1"/><path d="M95.9 0 V59.4" stroke="#2b8fa9" stroke-width="1"/><path d="M115.1 0 V59.4" stroke="#2b8fa9" stroke-width="1"/><path d="M134.3 0 V59.4" stroke="#2b8fa9" stroke-width="1"/><path d="M153.4 0 V59.4" stroke="#2b8fa9" stroke-width="1"/><path d="M172.6 0 V59.4" stroke="#2b8fa9" stroke-width="1"/><path d="M0 5.9 H191.8" stroke="#2b8fa9" stroke-width="1"/><path d="M0 11.9 H191.8" stroke="#2b8fa9" stroke-width="1"/><path d="M0 17.8 H191.8" stroke="#2b8fa9" stroke-width="1"/><path d="M0 23.8 H191.8" stroke="#2b8fa9" stroke-width="1"/><path d="M0 29.7 H191.8" stroke="#2b8fa9" stroke-width="1"/><path d="M0 35.6 H191.8" stroke="#2b8fa9" stroke-width="1"/><path d="M0 41.6 H191.8" stroke="#2b8fa9" stroke-width="1"/><path d="M0 47.5 H191.8" stroke="#2b8fa9" stroke-width="1"/><path d="M0 53.5 H191.8" stroke="#2b8fa9" stroke-width="1"/><path d="M0,59.4 L0.0,54.0 C0.5,52.6 2.0,45.7 3.0,45.4 C4.0,45.2 5.0,50.7 6.1,52.4 C7.3,54.2 8.3,55.5 9.8,55.9 C11.4,56.4 13.8,55.4 15.7,55.2 C17.6,55.0 19.7,56.1 21.5,54.6 C23.3,53.0 24.9,45.7 26.4,46.0 C28.0,46.2 29.3,54.6 31.0,56.0 C32.7,57.4 34.7,54.6 36.5,54.5 C38.3,54.4 40.0,55.0 41.7,55.3 C43.4,55.5 44.8,56.0 46.6,55.9 C48.4,55.8 50.5,54.8 52.5,54.8 C54.4,54.9 56.5,55.9 58.3,56.1 C60.2,56.3 62.4,56.0 63.7,56.0 C65.1,56.1 65.0,56.4 66.4,56.3 C67.8,56.2 70.5,55.7 72.1,55.4 C73.7,55.1 74.8,54.6 76.1,54.6 C77.3,54.5 78.4,55.1 79.6,55.2 C80.8,55.4 81.9,55.3 83.2,55.3 C84.4,55.3 86.1,55.3 87.2,55.3 C88.3,55.4 88.9,55.8 90.0,55.7 C91.1,55.6 92.4,54.6 94.0,54.5 C95.7,54.5 98.4,55.3 99.8,55.6 C101.3,55.9 101.5,56.0 102.7,56.1 C103.9,56.1 105.7,56.0 107.1,55.7 C108.5,55.4 109.5,54.4 110.8,54.3 C112.2,54.2 114.0,54.8 115.2,55.1 C116.5,55.4 117.2,56.4 118.4,56.3 C119.6,56.2 121.0,54.7 122.4,54.6 C123.7,54.4 125.1,55.4 126.5,55.4 C127.9,55.4 129.2,54.5 130.8,54.4 C132.4,54.3 134.3,54.9 135.9,54.9 C137.6,55.0 139.0,54.9 140.7,54.8 C142.3,54.8 144.7,54.5 146.0,54.5 C147.4,54.6 147.6,55.5 148.6,55.1 C149.6,54.8 151.0,52.1 152.3,52.3 C153.6,52.5 154.7,55.7 156.3,56.3 C158.0,57.0 160.7,56.4 162.2,56.2 C163.7,55.9 164.4,54.7 165.4,54.7 C166.5,54.7 167.4,56.4 168.6,56.2 C169.8,56.0 171.2,53.6 172.7,53.4 C174.3,53.1 176.5,54.5 177.8,54.7 C179.1,55.0 179.6,55.0 180.4,54.7 C181.3,54.4 182.0,52.9 183.0,52.9 C184.1,53.0 185.6,54.8 186.9,55.0 C188.2,55.1 190.2,54.1 191.0,53.7 C191.8,53.3 191.7,52.6 191.8,52.4 L191.8,59.4 Z" fill="#31abc8"/><rect x="0.5" y="0.5" width="190.8" height="58.4" fill="none" stroke="#2f9ab4"/></svg>
<div class="t" style="left:496.78px;top:493.00px;font-size:11.53px;color:#bcbcbc;transform:scaleX(0.9210);">Использование</div>
<div class="t" style="left:589.70px;top:493.00px;font-size:11.53px;color:#bcbcbc;transform:scaleX(0.9000);">Скорость</div>
<div class="t" style="left:498.38px;top:510.00px;font-size:17.57px;color:#f2f2f2;transform:scaleX(0.9227);">100%</div>
<div class="t" style="left:588.78px;top:510.00px;font-size:17.57px;color:#f2f2f2;transform:scaleX(0.9209);">3,98 ГГц</div>
<div class="t" style="left:497.07px;top:537.00px;font-size:11.53px;color:#bcbcbc;transform:scaleX(0.9346);">Процессы</div>
<div class="t" style="left:563.64px;top:537.00px;font-size:11.53px;color:#bcbcbc;transform:scaleX(0.9583);">Потоки</div>
<div class="t" style="left:618.90px;top:537.00px;font-size:11.53px;color:#bcbcbc;transform:scaleX(0.9286);">Дескрипторы</div>
<div class="t" style="left:498.36px;top:554.00px;font-size:17.57px;color:#f2f2f2;transform:scaleX(0.9357);">154</div>
<div class="t" style="left:564.65px;top:554.00px;font-size:17.57px;color:#f2f2f2;transform:scaleX(0.9474);">1684</div>
<div class="t" style="left:618.92px;top:554.00px;font-size:17.57px;color:#f2f2f2;transform:scaleX(0.9830);">69752</div>
<div class="t" style="left:497.22px;top:581.00px;font-size:11.53px;color:#bcbcbc;transform:scaleX(0.8842);">Время работы</div>
<div class="t" style="left:498.40px;top:598.00px;font-size:17.57px;color:#f2f2f2;transform:scaleX(0.9012);">7:07:46:41</div>
<div class="t" style="left:693.84px;top:493.00px;font-size:10.97px;color:#bcbcbc;transform:scaleX(0.9641);">Базовая скорость:</div>
<div class="t" style="left:831.20px;top:493.00px;font-size:10.97px;color:#e4e4e4;transform:scaleX(0.9714);">2,50 ГГц</div>
<div class="t" style="left:694.80px;top:509.00px;font-size:10.97px;color:#bcbcbc;transform:scaleX(0.9641);">Сокетов:</div>
<div class="t" style="left:830.23px;top:509.00px;font-size:10.97px;color:#e4e4e4;transform:scaleX(0.9714);">1</div>
<div class="t" style="left:693.84px;top:524.00px;font-size:10.97px;color:#bcbcbc;transform:scaleX(0.9641);">Ядра:</div>
<div class="t" style="left:831.20px;top:524.00px;font-size:10.97px;color:#e4e4e4;transform:scaleX(0.9714);">6</div>
<div class="t" style="left:694.80px;top:540.00px;font-size:10.97px;color:#bcbcbc;transform:scaleX(0.9641);">Логических процессоров:</div>
<div class="t" style="left:830.23px;top:540.00px;font-size:10.97px;color:#e4e4e4;transform:scaleX(0.9714);">12</div>
<div class="t" style="left:693.84px;top:555.00px;font-size:10.97px;color:#bcbcbc;transform:scaleX(0.9641);">Виртуализация:</div>
<div class="t" style="left:830.23px;top:555.00px;font-size:10.97px;color:#e4e4e4;transform:scaleX(0.9714);">Включено</div>
<div class="t" style="left:693.84px;top:571.00px;font-size:10.97px;color:#bcbcbc;transform:scaleX(0.9641);">Кэш L1:</div>
<div class="t" style="left:831.20px;top:571.00px;font-size:10.97px;color:#e4e4e4;transform:scaleX(0.9714);">480 КБ</div>
<div class="t" style="left:693.84px;top:587.00px;font-size:10.97px;color:#bcbcbc;transform:scaleX(0.9641);">Кэш L2:</div>
<div class="t" style="left:831.20px;top:587.00px;font-size:10.97px;color:#e4e4e4;transform:scaleX(0.9714);">7,5 МБ</div>
<div class="t" style="left:693.84px;top:602.00px;font-size:10.97px;color:#bcbcbc;transform:scaleX(0.9641);">Кэш L3:</div>
<div class="t" style="left:830.23px;top:602.00px;font-size:10.97px;color:#e4e4e4;transform:scaleX(0.9714);">18,0 МБ</div>
</body></html>
